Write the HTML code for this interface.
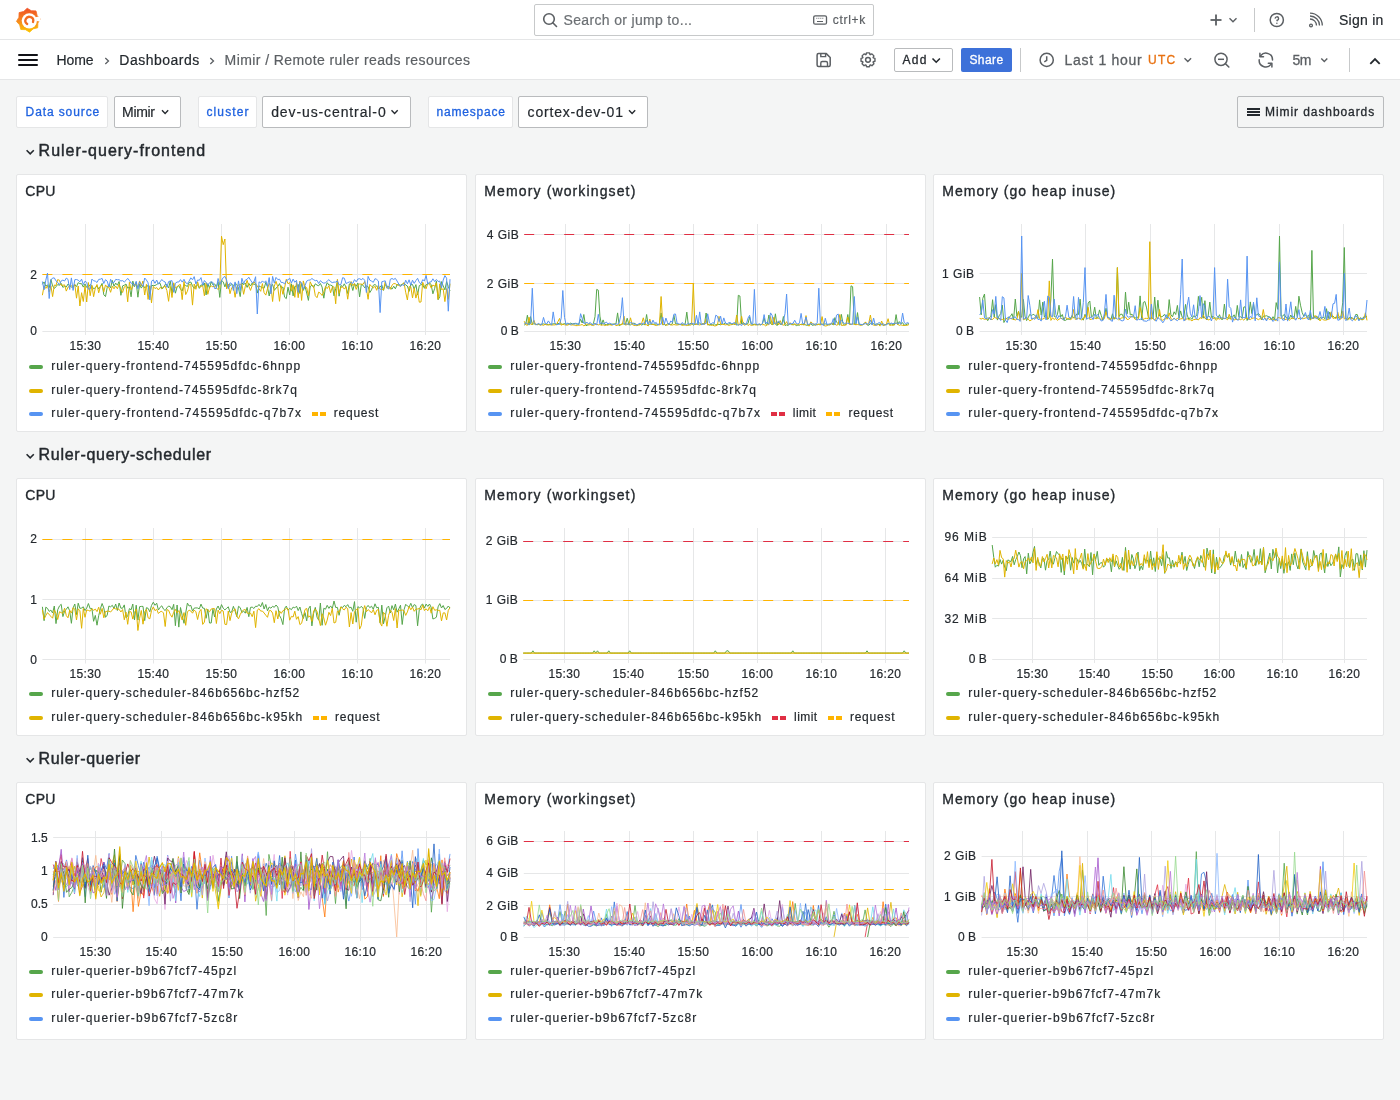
<!DOCTYPE html><html><head><meta charset="utf-8"><style>
html,body{margin:0;padding:0;width:1400px;height:1100px;overflow:hidden;background:#f4f5f5;font-family:"Liberation Sans",sans-serif}
.t{position:absolute;white-space:pre;line-height:1}
svg{position:absolute;left:0;top:0}
</style></head><body>
<div style="position:absolute;left:0px;top:0px;width:1400px;height:40px;background:#fff;border-bottom:1px solid #e5e6e7;box-sizing:border-box"></div>
<div style="position:absolute;left:0px;top:40px;width:1400px;height:40px;background:#fff;border-bottom:1px solid #e5e6e7;box-sizing:border-box"></div>
<div style="position:absolute;left:534px;top:4px;width:340px;height:32px;border:1px solid #c7c9ca;border-radius:2px;box-sizing:border-box;background:#fff"></div>
<div style="position:absolute;left:1254px;top:8px;width:1px;height:24px;background:#c7c9ca"></div>
<div style="position:absolute;left:18px;top:54px;width:20px;height:2px;background:#111217;border-radius:1px"></div>
<div style="position:absolute;left:18px;top:59px;width:20px;height:2px;background:#111217;border-radius:1px"></div>
<div style="position:absolute;left:18px;top:64px;width:20px;height:2px;background:#111217;border-radius:1px"></div>
<div style="position:absolute;left:894px;top:48px;width:59px;height:24px;border:1px solid #b9bbbd;border-radius:2px;box-sizing:border-box;background:#fff"></div>
<div style="position:absolute;left:961px;top:48px;width:51px;height:24px;background:#3d71d9;border-radius:2px"></div>
<div style="position:absolute;left:1020px;top:48px;width:1px;height:24px;background:#c7c9ca"></div>
<div style="position:absolute;left:1349px;top:48px;width:1px;height:24px;background:#c7c9ca"></div>
<div style="position:absolute;left:16px;top:96px;width:92px;height:32px;background:#fff;border:1px solid #e5e6e7;border-radius:2px;box-sizing:border-box"></div>
<div style="position:absolute;left:113.6px;top:96px;width:67.4px;height:32px;background:#fff;border:1px solid #b9bbbd;border-radius:2px;box-sizing:border-box"></div>
<div style="position:absolute;left:197.6px;top:96px;width:59.900000000000006px;height:32px;background:#fff;border:1px solid #e5e6e7;border-radius:2px;box-sizing:border-box"></div>
<div style="position:absolute;left:262px;top:96px;width:148.5px;height:32px;background:#fff;border:1px solid #b9bbbd;border-radius:2px;box-sizing:border-box"></div>
<div style="position:absolute;left:427.6px;top:96px;width:85.89999999999998px;height:32px;background:#fff;border:1px solid #e5e6e7;border-radius:2px;box-sizing:border-box"></div>
<div style="position:absolute;left:518.4px;top:96px;width:129.60000000000002px;height:32px;background:#fff;border:1px solid #b9bbbd;border-radius:2px;box-sizing:border-box"></div>
<div style="position:absolute;left:1236.5px;top:96px;width:147px;height:32px;border:1px solid #b9bbbd;border-radius:2px;box-sizing:border-box"></div>
<div style="position:absolute;left:1246.5px;top:108.25px;width:13px;height:1.5px;background:#24292e"></div>
<div style="position:absolute;left:1246.5px;top:111.25px;width:13px;height:1.5px;background:#24292e"></div>
<div style="position:absolute;left:1246.5px;top:114.25px;width:13px;height:1.5px;background:#24292e"></div>
<div style="position:absolute;left:16px;top:174px;width:451px;height:258px;background:#fff;border:1px solid #e5e6e7;border-radius:2px;box-sizing:border-box"></div>
<div style="position:absolute;left:29px;top:365px;width:14px;height:4px;background:#56A64B;border-radius:2px"></div>
<div style="position:absolute;left:29px;top:388.5px;width:14px;height:4px;background:#E0B400;border-radius:2px"></div>
<div style="position:absolute;left:29px;top:412px;width:14px;height:4px;background:#5794F2;border-radius:2px"></div>
<div style="position:absolute;left:311.5px;top:412px;width:6px;height:4px;background:#FFB400"></div>
<div style="position:absolute;left:319.5px;top:412px;width:6px;height:4px;background:#FFB400"></div>
<div style="position:absolute;left:475px;top:174px;width:451px;height:258px;background:#fff;border:1px solid #e5e6e7;border-radius:2px;box-sizing:border-box"></div>
<div style="position:absolute;left:488px;top:365px;width:14px;height:4px;background:#56A64B;border-radius:2px"></div>
<div style="position:absolute;left:488px;top:388.5px;width:14px;height:4px;background:#E0B400;border-radius:2px"></div>
<div style="position:absolute;left:488px;top:412px;width:14px;height:4px;background:#5794F2;border-radius:2px"></div>
<div style="position:absolute;left:770.5px;top:412px;width:6px;height:4px;background:#E02F44"></div>
<div style="position:absolute;left:778.5px;top:412px;width:6px;height:4px;background:#E02F44"></div>
<div style="position:absolute;left:826.3px;top:412px;width:6px;height:4px;background:#FFB400"></div>
<div style="position:absolute;left:834.3px;top:412px;width:6px;height:4px;background:#FFB400"></div>
<div style="position:absolute;left:933px;top:174px;width:451px;height:258px;background:#fff;border:1px solid #e5e6e7;border-radius:2px;box-sizing:border-box"></div>
<div style="position:absolute;left:946px;top:365px;width:14px;height:4px;background:#56A64B;border-radius:2px"></div>
<div style="position:absolute;left:946px;top:388.5px;width:14px;height:4px;background:#E0B400;border-radius:2px"></div>
<div style="position:absolute;left:946px;top:412px;width:14px;height:4px;background:#5794F2;border-radius:2px"></div>
<div style="position:absolute;left:16px;top:478px;width:451px;height:258px;background:#fff;border:1px solid #e5e6e7;border-radius:2px;box-sizing:border-box"></div>
<div style="position:absolute;left:29px;top:692.2px;width:14px;height:4px;background:#56A64B;border-radius:2px"></div>
<div style="position:absolute;left:29px;top:715.6px;width:14px;height:4px;background:#E0B400;border-radius:2px"></div>
<div style="position:absolute;left:312.8px;top:715.6px;width:6px;height:4px;background:#FFB400"></div>
<div style="position:absolute;left:320.8px;top:715.6px;width:6px;height:4px;background:#FFB400"></div>
<div style="position:absolute;left:475px;top:478px;width:451px;height:258px;background:#fff;border:1px solid #e5e6e7;border-radius:2px;box-sizing:border-box"></div>
<div style="position:absolute;left:488px;top:692.2px;width:14px;height:4px;background:#56A64B;border-radius:2px"></div>
<div style="position:absolute;left:488px;top:715.6px;width:14px;height:4px;background:#E0B400;border-radius:2px"></div>
<div style="position:absolute;left:771.8px;top:715.6px;width:6px;height:4px;background:#E02F44"></div>
<div style="position:absolute;left:779.8px;top:715.6px;width:6px;height:4px;background:#E02F44"></div>
<div style="position:absolute;left:827.6px;top:715.6px;width:6px;height:4px;background:#FFB400"></div>
<div style="position:absolute;left:835.6px;top:715.6px;width:6px;height:4px;background:#FFB400"></div>
<div style="position:absolute;left:933px;top:478px;width:451px;height:258px;background:#fff;border:1px solid #e5e6e7;border-radius:2px;box-sizing:border-box"></div>
<div style="position:absolute;left:946px;top:692.2px;width:14px;height:4px;background:#56A64B;border-radius:2px"></div>
<div style="position:absolute;left:946px;top:715.6px;width:14px;height:4px;background:#E0B400;border-radius:2px"></div>
<div style="position:absolute;left:16px;top:782px;width:451px;height:258px;background:#fff;border:1px solid #e5e6e7;border-radius:2px;box-sizing:border-box"></div>
<div style="position:absolute;left:29px;top:969.6px;width:14px;height:4px;background:#56A64B;border-radius:2px"></div>
<div style="position:absolute;left:29px;top:993.3px;width:14px;height:4px;background:#E0B400;border-radius:2px"></div>
<div style="position:absolute;left:29px;top:1016.7px;width:14px;height:4px;background:#5794F2;border-radius:2px"></div>
<div style="position:absolute;left:475px;top:782px;width:451px;height:258px;background:#fff;border:1px solid #e5e6e7;border-radius:2px;box-sizing:border-box"></div>
<div style="position:absolute;left:488px;top:969.6px;width:14px;height:4px;background:#56A64B;border-radius:2px"></div>
<div style="position:absolute;left:488px;top:993.3px;width:14px;height:4px;background:#E0B400;border-radius:2px"></div>
<div style="position:absolute;left:488px;top:1016.7px;width:14px;height:4px;background:#5794F2;border-radius:2px"></div>
<div style="position:absolute;left:933px;top:782px;width:451px;height:258px;background:#fff;border:1px solid #e5e6e7;border-radius:2px;box-sizing:border-box"></div>
<div style="position:absolute;left:946px;top:969.6px;width:14px;height:4px;background:#56A64B;border-radius:2px"></div>
<div style="position:absolute;left:946px;top:993.3px;width:14px;height:4px;background:#E0B400;border-radius:2px"></div>
<div style="position:absolute;left:946px;top:1016.7px;width:14px;height:4px;background:#5794F2;border-radius:2px"></div>
<svg width="1400" height="1100" viewBox="0 0 1400 1100"><defs><linearGradient id="lg" x1="0" y1="1" x2="0" y2="0"><stop offset="0" stop-color="#fcc400"/><stop offset="0.5" stop-color="#f6851f"/><stop offset="1" stop-color="#ef4f25"/></linearGradient></defs>
<polygon points="27.20,8.26 31.26,10.72 36.00,10.91 37.12,15.52 40.34,19.00 37.88,23.06 37.69,27.80 33.08,28.92 29.60,32.14 25.54,29.68 20.80,29.49 19.68,24.88 16.46,21.40 18.92,17.34 19.11,12.60 23.72,11.48" fill="url(#lg)" stroke="url(#lg)" stroke-width="0.8" stroke-linejoin="round"/>
<circle cx="29.3" cy="20.8" r="7.6" fill="#fff"/>
<path d="M 35.5 17.2 L 40.5 16 L 40.5 21.5 L 36.5 21 Z" fill="#fff"/>
<path d="M 36.3 18.6 A 7.6 7.6 0 0 0 21.8 19.8" fill="none" stroke="#f05a28" stroke-width="0"/>
<path d="M 27.2 24.0 A 3.9 3.9 0 1 1 33.0 22.0" fill="none" stroke="#f26b21" stroke-width="2.3" stroke-linecap="round"/>
<circle cx="549" cy="19" r="5.3" fill="none" stroke="#5b5f63" stroke-width="1.6"/><line x1="552.8" y1="22.8" x2="556.5" y2="26.5" stroke="#5b5f63" stroke-width="1.6" stroke-linecap="round"/>
<rect x="813.7" y="15.8" width="12.8" height="8.4" rx="1.5" fill="none" stroke="#5b5f63" stroke-width="1.3"/><line x1="816.3" y1="18.3" x2="824" y2="18.3" stroke="#5b5f63" stroke-width="0.9" stroke-dasharray="1,1"/><line x1="817" y1="21.5" x2="823" y2="21.5" stroke="#5b5f63" stroke-width="1"/>
<line x1="1216" y1="14.5" x2="1216" y2="25.5" stroke="#5b5f63" stroke-width="1.8"/><line x1="1210.5" y1="20" x2="1221.5" y2="20" stroke="#5b5f63" stroke-width="1.8"/>
<polyline points="1229.5,18.3 1233,21.7 1236.5,18.3" fill="none" stroke="#5b5f63" stroke-width="1.4"/>
<circle cx="1276.8" cy="20" r="6.6" fill="none" stroke="#5b5f63" stroke-width="1.5"/>
<path d="M 1275.2 18.6 A 1.7 1.7 0 1 1 1277.2 20.2 L 1276.9 21.3" fill="none" stroke="#5b5f63" stroke-width="1.4"/><circle cx="1276.9" cy="23.2" r="0.75" fill="#5b5f63"/>
<circle cx="1311" cy="25.5" r="1.4" fill="none" stroke="#5b5f63" stroke-width="1.3"/><path d="M 1310 19 A 6.5 6.5 0 0 1 1316.5 25.5 M 1310 16 A 9.5 9.5 0 0 1 1319.5 25.5 M 1310 13.2 A 12.3 12.3 0 0 1 1322.3 25.5" fill="none" stroke="#5b5f63" stroke-width="1.3"/>
<polyline points="105.3,58 108.5,61 105.3,64" fill="none" stroke="#5b5f63" stroke-width="1.3"/>
<polyline points="210.3,58 213.5,61 210.3,64" fill="none" stroke="#5b5f63" stroke-width="1.3"/>
<path d="M 818.6 53.6 H 826.3 L 830.2 57.5 V 65 A 1.5 1.5 0 0 1 828.7 66.5 H 818.6 A 1.5 1.5 0 0 1 817.1 65 V 55.1 A 1.5 1.5 0 0 1 818.6 53.6 Z" fill="none" stroke="#5b5f63" stroke-width="1.5" stroke-linejoin="round"/>
<path d="M 820.8 53.8 V 56.6 H 825.6 V 53.8 M 820.8 66.3 V 63 A 1.5 1.5 0 0 1 822.3 61.5 H 826 A 1.5 1.5 0 0 1 827.5 63 V 66.3" fill="none" stroke="#5b5f63" stroke-width="1.4"/>
<polygon points="873.24,57.83 874.96,58.39 874.96,61.21 873.24,61.77 873.10,62.11 873.92,63.72 871.92,65.72 870.31,64.90 869.97,65.04 869.41,66.76 866.59,66.76 866.03,65.04 865.69,64.90 864.08,65.72 862.08,63.72 862.90,62.11 862.76,61.77 861.04,61.21 861.04,58.39 862.76,57.83 862.90,57.49 862.08,55.88 864.08,53.88 865.69,54.70 866.03,54.56 866.59,52.84 869.41,52.84 869.97,54.56 870.31,54.70 871.92,53.88 873.92,55.88 873.10,57.49" fill="none" stroke="#5b5f63" stroke-width="1.4" stroke-linejoin="round"/><circle cx="868.0" cy="59.8" r="2.4" fill="none" stroke="#5b5f63" stroke-width="1.5"/>
<polyline points="932.5,58.5 936.2,62.2 939.9,58.5" fill="none" stroke="#24292e" stroke-width="1.6"/>
<circle cx="1046.7" cy="59.9" r="6.6" fill="none" stroke="#5b5f63" stroke-width="1.5"/><polyline points="1046.7,56.3 1046.7,60.3 1044.3,61.8" fill="none" stroke="#5b5f63" stroke-width="1.5"/>
<polyline points="1184.5,58.3 1187.8,61.6 1191.1,58.3" fill="none" stroke="#5b5f63" stroke-width="1.4"/>
<circle cx="1221" cy="59.3" r="6.1" fill="none" stroke="#5b5f63" stroke-width="1.5"/><line x1="1218" y1="59.3" x2="1224" y2="59.3" stroke="#5b5f63" stroke-width="1.5"/><line x1="1225.5" y1="63.8" x2="1228.8" y2="67" stroke="#5b5f63" stroke-width="1.6" stroke-linecap="round"/>
<path d="M 1272.5 60 A 6.6 6.6 0 0 0 1260.8 55.6 M 1259.2 59.8 A 6.6 6.6 0 0 0 1271 64.4" fill="none" stroke="#5b5f63" stroke-width="1.5" stroke-linecap="round"/><path d="M 1259.9 53.2 V 56.8 H 1263.5 M 1268.3 63.3 H 1271.9 V 66.9" fill="none" stroke="#5b5f63" stroke-width="1.5" stroke-linecap="round" stroke-linejoin="round"/>
<polyline points="1321.3,58.5 1324.3,61.6 1327.3,58.5" fill="none" stroke="#5b5f63" stroke-width="1.4"/>
<polyline points="1370.3,63.8 1375,59 1379.7,63.8" fill="none" stroke="#24292e" stroke-width="1.8"/>
<polyline points="162.0,110.3 165.1,113.4 168.2,110.3" fill="none" stroke="#24292e" stroke-width="1.4"/>
<polyline points="391.5,110.3 394.6,113.4 397.7,110.3" fill="none" stroke="#24292e" stroke-width="1.4"/>
<polyline points="629.0,110.3 632.1,113.4 635.2,110.3" fill="none" stroke="#24292e" stroke-width="1.4"/>
<polyline points="26.6,150.20000000000002 30.2,153.8 33.8,150.20000000000002" fill="none" stroke="#24292e" stroke-width="1.6"/>
<polyline points="26.6,454.2 30.2,457.8 33.8,454.2" fill="none" stroke="#24292e" stroke-width="1.6"/>
<polyline points="26.6,758.1999999999999 30.2,761.8 33.8,758.1999999999999" fill="none" stroke="#24292e" stroke-width="1.6"/>
<line x1="42.4" y1="331.5" x2="450" y2="331.5" stroke="#e6e7e8" stroke-width="1"/>
<line x1="42.4" y1="274.5" x2="450" y2="274.5" stroke="#e6e7e8" stroke-width="1"/>
<line x1="85.5" y1="224" x2="85.5" y2="335" stroke="#e6e7e8" stroke-width="1"/>
<line x1="153.5" y1="224" x2="153.5" y2="335" stroke="#e6e7e8" stroke-width="1"/>
<line x1="221.5" y1="224" x2="221.5" y2="335" stroke="#e6e7e8" stroke-width="1"/>
<line x1="289.5" y1="224" x2="289.5" y2="335" stroke="#e6e7e8" stroke-width="1"/>
<line x1="357.5" y1="224" x2="357.5" y2="335" stroke="#e6e7e8" stroke-width="1"/>
<line x1="425.5" y1="224" x2="425.5" y2="335" stroke="#e6e7e8" stroke-width="1"/>
<line x1="42.4" y1="274.5" x2="450" y2="274.5" stroke="#FFB400" stroke-width="1" stroke-dasharray="10,10"/>
<polyline points="42.4,284.3 44.1,281.9 45.8,286.2 47.5,284.9 49.2,287.8 50.9,279.5 52.6,285.9 54.3,288.5 56.0,286.7 57.7,284.5 59.5,285.3 61.2,283.4 62.9,287.4 64.6,286.2 66.3,287.0 68.0,284.0 69.7,285.5 71.4,287.1 73.1,286.9 74.8,284.8 76.5,286.5 78.2,282.7 79.9,283.6 81.6,283.7 83.3,287.1 85.0,284.0 86.7,287.4 88.4,286.8 90.2,284.6 91.9,286.1 93.6,288.8 95.3,287.8 97.0,285.7 98.7,289.0 100.4,286.4 102.1,283.4 103.8,294.8 105.5,296.6 107.2,287.5 108.9,284.7 110.6,288.0 112.3,280.4 114.0,286.3 115.7,283.1 117.4,285.2 119.1,281.5 120.9,295.3 122.6,285.9 124.3,285.2 126.0,284.0 127.7,288.2 129.4,286.9 131.1,296.8 132.8,281.1 134.5,286.7 136.2,282.4 137.9,297.2 139.6,284.0 141.3,288.1 143.0,285.3 144.7,287.8 146.4,286.4 148.1,285.6 149.8,294.4 151.5,285.4 153.3,285.6 155.0,285.5 156.7,284.5 158.4,283.3 160.1,283.3 161.8,288.8 163.5,287.7 165.2,284.4 166.9,284.7 168.6,288.0 170.3,281.2 172.0,293.2 173.7,284.7 175.4,293.2 177.1,286.9 178.8,285.7 180.5,289.1 182.2,291.0 184.0,284.4 185.7,285.5 187.4,286.5 189.1,282.5 190.8,282.0 192.5,285.9 194.2,288.5 195.9,285.6 197.6,284.7 199.3,288.4 201.0,284.8 202.7,285.8 204.4,283.0 206.1,294.9 207.8,283.7 209.5,288.2 211.2,281.7 212.9,284.9 214.6,283.9 216.4,286.6 218.1,281.8 219.8,297.4 221.5,280.3 223.2,281.8 224.9,286.9 226.6,281.7 228.3,287.3 230.0,285.5 231.7,284.2 233.4,285.7 235.1,283.4 236.8,284.4 238.5,288.1 240.2,296.6 241.9,282.7 243.6,284.8 245.3,283.0 247.1,287.4 248.8,283.3 250.5,286.0 252.2,282.9 253.9,284.7 255.6,283.6 257.3,293.1 259.0,285.9 260.7,286.8 262.4,287.7 264.1,288.2 265.8,282.4 267.5,286.8 269.2,296.0 270.9,286.5 272.6,284.4 274.3,290.4 276.0,288.1 277.8,286.6 279.5,283.6 281.2,288.1 282.9,287.0 284.6,297.2 286.3,298.6 288.0,287.2 289.7,294.9 291.4,283.8 293.1,295.9 294.8,286.4 296.5,286.2 298.2,284.4 299.9,293.5 301.6,283.5 303.3,290.4 305.0,286.3 306.7,293.0 308.4,300.4 310.2,286.7 311.9,285.2 313.6,287.5 315.3,283.8 317.0,285.1 318.7,285.8 320.4,283.5 322.1,287.1 323.8,298.2 325.5,287.5 327.2,282.7 328.9,285.0 330.6,285.1 332.3,285.8 334.0,295.8 335.7,288.6 337.4,281.4 339.1,296.2 340.9,285.4 342.6,286.8 344.3,283.8 346.0,287.2 347.7,293.5 349.4,283.9 351.1,283.8 352.8,290.5 354.5,283.7 356.2,286.3 357.9,283.0 359.6,296.9 361.3,284.4 363.0,285.2 364.7,287.8 366.4,285.9 368.1,286.6 369.8,292.6 371.5,289.9 373.3,285.3 375.0,284.5 376.7,286.0 378.4,289.0 380.1,287.0 381.8,285.0 383.5,290.4 385.2,284.6 386.9,286.1 388.6,286.6 390.3,287.5 392.0,289.2 393.7,286.2 395.4,288.8 397.1,284.6 398.8,284.8 400.5,285.2 402.2,284.3 404.0,283.0 405.7,285.1 407.4,286.0 409.1,291.4 410.8,284.6 412.5,284.5 414.2,289.1 415.9,284.6 417.6,295.0 419.3,285.6 421.0,284.7 422.7,284.6 424.4,288.3 426.1,284.6 427.8,284.6 429.5,282.8 431.2,284.8 432.9,293.8 434.7,288.3 436.4,281.2 438.1,299.7 439.8,296.8 441.5,281.6 443.2,285.9 444.9,289.9 446.6,281.5 448.3,286.6 450.0,290.9" fill="none" stroke="#56A64B" stroke-width="1" stroke-opacity="1" stroke-linejoin="round"/>
<polyline points="42.4,295.2 44.1,285.7 45.8,288.4 47.5,285.9 49.2,291.9 50.9,285.7 52.6,296.6 54.3,285.0 56.0,285.5 57.7,279.6 59.5,280.3 61.2,285.4 62.9,285.2 64.6,284.9 66.3,291.1 68.0,287.1 69.7,286.2 71.4,285.6 73.1,287.5 74.8,284.1 76.5,298.2 78.2,286.0 79.9,306.0 81.6,292.7 83.3,301.5 85.0,286.0 86.7,302.0 88.4,282.5 90.2,295.7 91.9,285.2 93.6,296.7 95.3,288.2 97.0,284.5 98.7,292.8 100.4,286.5 102.1,285.2 103.8,291.8 105.5,284.9 107.2,287.1 108.9,287.3 110.6,292.3 112.3,286.2 114.0,288.8 115.7,286.0 117.4,288.8 119.1,284.1 120.9,289.4 122.6,292.5 124.3,286.9 126.0,285.6 127.7,301.8 129.4,282.3 131.1,289.9 132.8,286.5 134.5,284.2 136.2,284.4 137.9,287.1 139.6,280.9 141.3,286.0 143.0,281.0 144.7,295.0 146.4,284.3 148.1,299.4 149.8,285.7 151.5,302.9 153.3,286.5 155.0,288.6 156.7,287.6 158.4,290.0 160.1,287.4 161.8,288.6 163.5,286.7 165.2,286.1 166.9,290.6 168.6,301.3 170.3,286.5 172.0,297.5 173.7,282.8 175.4,288.1 177.1,286.8 178.8,285.0 180.5,284.6 182.2,299.6 184.0,281.4 185.7,294.6 187.4,291.2 189.1,284.8 190.8,284.2 192.5,305.1 194.2,284.0 195.9,289.3 197.6,281.8 199.3,287.6 201.0,286.5 202.7,285.6 204.4,295.8 206.1,282.7 207.8,294.3 209.5,287.5 211.2,285.9 212.9,286.8 214.6,286.0 216.4,287.8 218.1,289.6 219.8,287.6 221.5,236.2 223.2,244.7 224.9,239.0 226.6,288.9 228.3,284.0 230.0,293.7 231.7,287.7 233.4,286.3 235.1,297.3 236.8,286.7 238.5,285.2 240.2,284.5 241.9,283.9 243.6,294.3 245.3,286.4 247.1,280.3 248.8,286.1 250.5,290.4 252.2,285.5 253.9,281.7 255.6,283.9 257.3,286.0 259.0,288.7 260.7,291.3 262.4,283.6 264.1,292.7 265.8,295.1 267.5,288.8 269.2,283.4 270.9,285.6 272.6,301.5 274.3,286.2 276.0,281.3 277.8,287.0 279.5,301.3 281.2,285.7 282.9,294.3 284.6,287.8 286.3,279.3 288.0,283.8 289.7,282.5 291.4,291.2 293.1,284.8 294.8,297.3 296.5,282.5 298.2,297.7 299.9,281.0 301.6,300.4 303.3,280.9 305.0,287.1 306.7,287.7 308.4,295.9 310.2,281.8 311.9,285.3 313.6,285.9 315.3,295.7 317.0,297.7 318.7,292.1 320.4,293.3 322.1,295.5 323.8,291.7 325.5,286.7 327.2,288.6 328.9,285.7 330.6,292.8 332.3,287.2 334.0,286.8 335.7,303.8 337.4,279.3 339.1,293.4 340.9,287.3 342.6,286.9 344.3,289.1 346.0,286.7 347.7,299.2 349.4,287.7 351.1,281.5 352.8,285.6 354.5,283.6 356.2,289.4 357.9,285.1 359.6,284.0 361.3,284.1 363.0,284.4 364.7,281.5 366.4,288.3 368.1,299.3 369.8,284.4 371.5,286.4 373.3,288.0 375.0,286.2 376.7,290.3 378.4,285.1 380.1,289.3 381.8,289.4 383.5,289.9 385.2,281.9 386.9,288.3 388.6,286.7 390.3,289.3 392.0,285.2 393.7,283.6 395.4,283.7 397.1,284.9 398.8,285.4 400.5,286.3 402.2,284.9 404.0,282.6 405.7,292.3 407.4,300.0 409.1,286.7 410.8,286.9 412.5,297.9 414.2,288.0 415.9,298.1 417.6,291.6 419.3,302.2 421.0,302.0 422.7,282.3 424.4,286.2 426.1,288.8 427.8,283.2 429.5,283.8 431.2,288.1 432.9,285.0 434.7,286.2 436.4,282.9 438.1,299.3 439.8,283.9 441.5,289.5 443.2,288.9 444.9,301.6 446.6,288.6 448.3,299.4 450.0,283.7" fill="none" stroke="#E0B400" stroke-width="1" stroke-opacity="1" stroke-linejoin="round"/>
<polyline points="42.4,281.5 44.1,289.7 45.8,280.2 47.5,273.1 49.2,298.5 50.9,280.1 52.6,278.0 54.3,277.9 56.0,280.9 57.7,282.4 59.5,284.7 61.2,280.9 62.9,280.1 64.6,281.0 66.3,278.1 68.0,279.4 69.7,289.5 71.4,277.9 73.1,290.4 74.8,279.7 76.5,279.5 78.2,280.2 79.9,281.8 81.6,279.2 83.3,284.6 85.0,281.2 86.7,282.4 88.4,289.1 90.2,289.1 91.9,279.1 93.6,280.8 95.3,281.1 97.0,282.5 98.7,279.4 100.4,279.2 102.1,278.4 103.8,283.5 105.5,279.7 107.2,281.1 108.9,287.0 110.6,279.3 112.3,283.0 114.0,282.3 115.7,279.4 117.4,279.7 119.1,279.7 120.9,281.0 122.6,280.6 124.3,282.0 126.0,280.4 127.7,278.4 129.4,280.5 131.1,283.2 132.8,283.3 134.5,286.2 136.2,281.3 137.9,288.8 139.6,281.8 141.3,284.2 143.0,286.5 144.7,278.0 146.4,280.0 148.1,282.8 149.8,299.9 151.5,281.2 153.3,279.9 155.0,283.3 156.7,280.0 158.4,284.2 160.1,281.8 161.8,279.5 163.5,281.3 165.2,282.0 166.9,287.3 168.6,281.6 170.3,281.0 172.0,280.7 173.7,292.3 175.4,283.2 177.1,282.0 178.8,282.0 180.5,279.6 182.2,282.1 184.0,279.3 185.7,282.8 187.4,283.7 189.1,281.1 190.8,277.8 192.5,279.8 194.2,276.6 195.9,284.1 197.6,280.0 199.3,280.3 201.0,277.6 202.7,285.2 204.4,280.5 206.1,282.5 207.8,285.4 209.5,282.7 211.2,281.9 212.9,282.4 214.6,288.5 216.4,288.5 218.1,278.5 219.8,284.8 221.5,280.5 223.2,277.6 224.9,276.4 226.6,280.0 228.3,288.7 230.0,282.8 231.7,283.6 233.4,290.5 235.1,281.9 236.8,293.7 238.5,280.9 240.2,290.6 241.9,278.3 243.6,283.6 245.3,280.1 247.1,279.3 248.8,277.2 250.5,280.1 252.2,282.6 253.9,282.1 255.6,276.7 257.3,314.0 259.0,281.8 260.7,283.1 262.4,280.9 264.1,282.6 265.8,280.8 267.5,286.3 269.2,277.6 270.9,293.9 272.6,276.4 274.3,283.1 276.0,277.4 277.8,279.6 279.5,279.2 281.2,282.5 282.9,282.5 284.6,283.9 286.3,280.5 288.0,279.8 289.7,278.2 291.4,283.1 293.1,279.1 294.8,282.3 296.5,280.3 298.2,292.4 299.9,281.8 301.6,282.7 303.3,289.3 305.0,285.5 306.7,281.1 308.4,280.2 310.2,280.0 311.9,278.5 313.6,279.7 315.3,280.7 317.0,280.3 318.7,283.5 320.4,280.7 322.1,282.3 323.8,283.2 325.5,282.7 327.2,281.2 328.9,279.6 330.6,281.7 332.3,282.6 334.0,282.1 335.7,282.1 337.4,280.8 339.1,284.9 340.9,284.4 342.6,277.7 344.3,278.2 346.0,283.5 347.7,282.7 349.4,281.9 351.1,282.7 352.8,283.4 354.5,279.6 356.2,281.8 357.9,279.0 359.6,278.7 361.3,279.7 363.0,278.4 364.7,280.3 366.4,292.5 368.1,276.4 369.8,280.2 371.5,281.1 373.3,282.3 375.0,278.7 376.7,279.4 378.4,281.0 380.1,312.6 381.8,281.8 383.5,281.3 385.2,280.8 386.9,287.6 388.6,289.0 390.3,279.3 392.0,278.5 393.7,279.4 395.4,278.4 397.1,281.1 398.8,284.0 400.5,286.4 402.2,284.7 404.0,285.4 405.7,280.2 407.4,283.8 409.1,279.8 410.8,285.2 412.5,280.2 414.2,283.4 415.9,280.6 417.6,278.3 419.3,282.5 421.0,283.8 422.7,279.7 424.4,280.9 426.1,275.4 427.8,284.2 429.5,282.0 431.2,281.9 432.9,278.8 434.7,281.6 436.4,279.5 438.1,281.5 439.8,281.1 441.5,287.9 443.2,280.1 444.9,275.6 446.6,278.2 448.3,311.2 450.0,279.2" fill="none" stroke="#5794F2" stroke-width="1" stroke-opacity="1" stroke-linejoin="round"/>
<line x1="524.2" y1="331.5" x2="909" y2="331.5" stroke="#e6e7e8" stroke-width="1"/>
<line x1="524.2" y1="283.5" x2="909" y2="283.5" stroke="#e6e7e8" stroke-width="1"/>
<line x1="524.2" y1="234.5" x2="909" y2="234.5" stroke="#e6e7e8" stroke-width="1"/>
<line x1="565.5" y1="224" x2="565.5" y2="335" stroke="#e6e7e8" stroke-width="1"/>
<line x1="629.5" y1="224" x2="629.5" y2="335" stroke="#e6e7e8" stroke-width="1"/>
<line x1="693.5" y1="224" x2="693.5" y2="335" stroke="#e6e7e8" stroke-width="1"/>
<line x1="757.5" y1="224" x2="757.5" y2="335" stroke="#e6e7e8" stroke-width="1"/>
<line x1="821.5" y1="224" x2="821.5" y2="335" stroke="#e6e7e8" stroke-width="1"/>
<line x1="886.5" y1="224" x2="886.5" y2="335" stroke="#e6e7e8" stroke-width="1"/>
<line x1="524.2" y1="234.5" x2="909" y2="234.5" stroke="#E02F44" stroke-width="1" stroke-dasharray="10,10"/>
<line x1="524.2" y1="283.5" x2="909" y2="283.5" stroke="#FFB400" stroke-width="1" stroke-dasharray="10,10"/>
<polyline points="524.2,325.1 525.8,324.1 527.4,315.2 529.0,325.1 530.6,316.6 532.3,324.5 533.9,323.7 535.5,324.2 537.1,324.8 538.7,324.2 540.3,324.4 541.9,324.1 543.5,323.9 545.1,324.3 546.7,324.3 548.4,324.8 550.0,324.2 551.6,324.2 553.2,323.8 554.8,323.7 556.4,324.7 558.0,323.2 559.6,324.2 561.2,323.9 562.8,324.3 564.5,323.5 566.1,324.2 567.7,324.0 569.3,323.9 570.9,323.0 572.5,324.3 574.1,323.4 575.7,323.9 577.3,324.2 578.9,323.9 580.6,319.2 582.2,323.0 583.8,314.5 585.4,324.8 587.0,325.8 588.6,323.7 590.2,324.0 591.8,324.9 593.4,323.6 595.0,316.7 596.7,289.4 598.3,290.2 599.9,316.1 601.5,324.8 603.1,319.9 604.7,324.5 606.3,324.7 607.9,324.5 609.5,324.7 611.1,324.5 612.8,324.0 614.4,324.0 616.0,323.8 617.6,312.9 619.2,325.8 620.8,324.7 622.4,323.4 624.0,324.2 625.6,324.2 627.2,318.2 628.9,324.7 630.5,324.9 632.1,323.6 633.7,323.2 635.3,323.6 636.9,325.4 638.5,324.8 640.1,324.0 641.7,325.1 643.3,324.2 645.0,324.8 646.6,314.5 648.2,325.0 649.8,324.1 651.4,324.1 653.0,324.1 654.6,324.4 656.2,323.9 657.8,325.0 659.4,323.6 661.1,312.9 662.7,324.9 664.3,324.4 665.9,325.6 667.5,323.6 669.1,323.8 670.7,324.7 672.3,323.9 673.9,315.3 675.5,323.8 677.2,323.8 678.8,324.7 680.4,324.4 682.0,324.1 683.6,324.7 685.2,323.9 686.8,312.1 688.4,325.3 690.0,323.8 691.6,323.0 693.3,325.2 694.9,324.1 696.5,324.2 698.1,322.2 699.7,323.2 701.3,324.6 702.9,323.7 704.5,324.1 706.1,313.0 707.7,324.0 709.4,325.2 711.0,324.2 712.6,324.8 714.2,323.7 715.8,325.0 717.4,324.4 719.0,324.3 720.6,324.8 722.2,323.6 723.8,324.2 725.5,322.7 727.1,324.5 728.7,324.1 730.3,323.5 731.9,324.4 733.5,324.0 735.1,323.8 736.7,325.1 738.3,295.3 739.9,296.0 741.6,324.2 743.2,322.6 744.8,323.8 746.4,324.3 748.0,323.6 749.6,316.9 751.2,323.8 752.8,324.8 754.4,324.2 756.0,324.4 757.7,324.8 759.3,324.6 760.9,325.0 762.5,323.3 764.1,318.0 765.7,324.1 767.3,324.2 768.9,315.0 770.5,323.5 772.1,324.7 773.8,324.1 775.4,313.8 777.0,325.7 778.6,321.8 780.2,324.3 781.8,324.5 783.4,316.5 785.0,325.5 786.6,324.9 788.2,325.5 789.9,323.5 791.5,324.6 793.1,324.1 794.7,324.3 796.3,325.6 797.9,325.0 799.5,325.2 801.1,324.1 802.7,324.5 804.3,324.3 806.0,325.1 807.6,325.3 809.2,324.6 810.8,323.9 812.4,325.4 814.0,324.9 815.6,324.0 817.2,324.8 818.8,324.1 820.4,324.2 822.1,324.1 823.7,324.2 825.3,323.9 826.9,324.3 828.5,324.8 830.1,324.7 831.7,323.7 833.3,324.9 834.9,317.6 836.5,322.2 838.2,323.6 839.8,325.2 841.4,314.4 843.0,323.7 844.6,325.2 846.2,323.6 847.8,314.5 849.4,324.1 851.0,285.8 852.6,286.7 854.3,324.1 855.9,324.4 857.5,312.6 859.1,324.2 860.7,324.7 862.3,325.0 863.9,323.8 865.5,322.2 867.1,324.9 868.7,325.3 870.4,323.7 872.0,323.1 873.6,323.7 875.2,324.6 876.8,323.8 878.4,324.4 880.0,324.4 881.6,324.1 883.2,325.4 884.8,324.7 886.5,324.3 888.1,323.5 889.7,324.6 891.3,323.8 892.9,324.6 894.5,325.0 896.1,314.6 897.7,324.6 899.3,321.6 900.9,323.6 902.6,322.7 904.2,325.2 905.8,324.9 907.4,324.0 909.0,323.7" fill="none" stroke="#56A64B" stroke-width="1" stroke-opacity="1" stroke-linejoin="round"/>
<polyline points="524.2,321.2 525.8,324.7 527.4,325.3 529.0,317.2 530.6,324.2 532.3,324.5 533.9,320.3 535.5,324.8 537.1,324.4 538.7,324.2 540.3,325.3 541.9,324.7 543.5,325.3 545.1,324.3 546.7,324.9 548.4,324.8 550.0,324.8 551.6,325.0 553.2,324.9 554.8,324.9 556.4,324.5 558.0,321.5 559.6,318.4 561.2,325.2 562.8,324.4 564.5,324.7 566.1,325.1 567.7,325.1 569.3,324.3 570.9,325.0 572.5,324.9 574.1,325.0 575.7,325.6 577.3,325.6 578.9,325.2 580.6,325.0 582.2,324.5 583.8,325.8 585.4,325.2 587.0,323.8 588.6,325.1 590.2,324.6 591.8,325.1 593.4,325.6 595.0,324.5 596.7,324.2 598.3,324.9 599.9,324.5 601.5,325.4 603.1,324.7 604.7,325.6 606.3,325.0 607.9,325.3 609.5,324.2 611.1,325.2 612.8,324.9 614.4,324.1 616.0,325.5 617.6,325.4 619.2,324.5 620.8,324.7 622.4,324.5 624.0,316.2 625.6,325.2 627.2,324.4 628.9,324.7 630.5,317.8 632.1,324.4 633.7,325.3 635.3,325.5 636.9,325.6 638.5,324.9 640.1,325.0 641.7,323.2 643.3,317.8 645.0,324.7 646.6,324.8 648.2,326.0 649.8,319.1 651.4,324.5 653.0,324.4 654.6,325.0 656.2,325.6 657.8,324.7 659.4,325.1 661.1,296.5 662.7,324.4 664.3,324.4 665.9,325.0 667.5,325.0 669.1,324.4 670.7,324.8 672.3,325.1 673.9,324.5 675.5,324.9 677.2,325.0 678.8,324.6 680.4,324.4 682.0,325.3 683.6,325.1 685.2,325.0 686.8,325.6 688.4,324.9 690.0,325.2 691.6,324.6 693.3,283.4 694.9,324.5 696.5,324.5 698.1,324.6 699.7,324.9 701.3,324.4 702.9,323.8 704.5,324.3 706.1,319.1 707.7,325.1 709.4,324.4 711.0,325.4 712.6,325.0 714.2,325.9 715.8,325.8 717.4,325.2 719.0,316.4 720.6,324.4 722.2,324.3 723.8,324.5 725.5,324.9 727.1,324.5 728.7,325.5 730.3,324.9 731.9,324.6 733.5,323.8 735.1,324.9 736.7,315.0 738.3,325.1 739.9,324.5 741.6,316.3 743.2,324.3 744.8,325.3 746.4,323.9 748.0,325.5 749.6,324.4 751.2,325.4 752.8,325.1 754.4,324.7 756.0,325.1 757.7,324.6 759.3,324.6 760.9,324.4 762.5,324.7 764.1,324.6 765.7,325.9 767.3,324.8 768.9,324.6 770.5,316.6 772.1,324.6 773.8,317.3 775.4,324.6 777.0,321.8 778.6,325.0 780.2,320.6 781.8,324.5 783.4,325.1 785.0,324.4 786.6,321.7 788.2,325.1 789.9,322.7 791.5,324.2 793.1,325.1 794.7,324.0 796.3,324.3 797.9,325.0 799.5,324.1 801.1,324.7 802.7,324.6 804.3,325.1 806.0,315.6 807.6,325.1 809.2,326.1 810.8,321.9 812.4,323.2 814.0,324.8 815.6,325.3 817.2,324.5 818.8,324.4 820.4,325.1 822.1,316.6 823.7,325.4 825.3,326.0 826.9,325.7 828.5,324.7 830.1,324.8 831.7,322.8 833.3,324.5 834.9,324.2 836.5,325.2 838.2,324.5 839.8,314.5 841.4,325.4 843.0,325.3 844.6,325.0 846.2,325.1 847.8,317.0 849.4,324.5 851.0,324.5 852.6,323.7 854.3,324.4 855.9,324.7 857.5,324.5 859.1,324.8 860.7,325.5 862.3,324.5 863.9,324.5 865.5,321.9 867.1,324.8 868.7,323.7 870.4,315.0 872.0,324.4 873.6,325.1 875.2,325.4 876.8,325.2 878.4,324.4 880.0,326.1 881.6,321.0 883.2,325.3 884.8,325.0 886.5,324.1 888.1,318.7 889.7,325.4 891.3,325.1 892.9,325.4 894.5,324.4 896.1,322.9 897.7,324.2 899.3,325.4 900.9,324.8 902.6,325.4 904.2,325.5 905.8,325.3 907.4,325.3 909.0,324.5" fill="none" stroke="#E0B400" stroke-width="1" stroke-opacity="1" stroke-linejoin="round"/>
<polyline points="524.2,323.9 525.8,322.8 527.4,323.9 529.0,324.2 530.6,323.3 532.3,288.2 533.9,322.7 535.5,324.3 537.1,324.4 538.7,323.3 540.3,325.0 541.9,324.3 543.5,317.4 545.1,323.1 546.7,324.0 548.4,320.9 550.0,323.4 551.6,325.1 553.2,311.9 554.8,322.5 556.4,324.6 558.0,324.5 559.6,324.0 561.2,318.3 562.8,290.5 564.5,317.4 566.1,324.8 567.7,322.9 569.3,324.2 570.9,324.4 572.5,323.5 574.1,324.3 575.7,323.2 577.3,323.7 578.9,324.8 580.6,313.7 582.2,318.7 583.8,323.3 585.4,323.0 587.0,322.4 588.6,323.8 590.2,322.4 591.8,324.1 593.4,324.9 595.0,323.0 596.7,325.1 598.3,314.3 599.9,324.0 601.5,322.6 603.1,323.9 604.7,323.4 606.3,322.0 607.9,323.9 609.5,323.2 611.1,323.8 612.8,324.7 614.4,324.3 616.0,323.8 617.6,324.4 619.2,322.5 620.8,315.3 622.4,297.7 624.0,323.4 625.6,324.1 627.2,323.8 628.9,324.5 630.5,322.6 632.1,322.9 633.7,324.3 635.3,324.2 636.9,325.1 638.5,323.9 640.1,323.2 641.7,324.2 643.3,323.1 645.0,323.5 646.6,320.3 648.2,324.3 649.8,320.9 651.4,324.1 653.0,320.1 654.6,323.5 656.2,322.4 657.8,324.9 659.4,323.8 661.1,324.3 662.7,317.2 664.3,324.4 665.9,318.0 667.5,322.6 669.1,324.8 670.7,321.0 672.3,322.3 673.9,314.2 675.5,314.0 677.2,323.8 678.8,323.6 680.4,324.8 682.0,322.6 683.6,323.7 685.2,324.6 686.8,324.4 688.4,323.2 690.0,324.4 691.6,323.2 693.3,323.7 694.9,324.1 696.5,315.3 698.1,324.9 699.7,311.9 701.3,324.5 702.9,324.3 704.5,323.8 706.1,323.5 707.7,313.8 709.4,322.8 711.0,324.2 712.6,322.8 714.2,323.0 715.8,315.2 717.4,316.2 719.0,321.6 720.6,316.2 722.2,324.0 723.8,317.9 725.5,323.2 727.1,324.0 728.7,322.7 730.3,322.6 731.9,323.9 733.5,322.9 735.1,322.7 736.7,324.6 738.3,325.2 739.9,324.2 741.6,325.6 743.2,323.2 744.8,324.5 746.4,324.1 748.0,318.1 749.6,315.3 751.2,324.0 752.8,323.9 754.4,289.4 756.0,323.9 757.7,324.6 759.3,323.7 760.9,324.9 762.5,323.4 764.1,314.6 765.7,323.2 767.3,322.2 768.9,324.4 770.5,312.9 772.1,315.3 773.8,323.6 775.4,323.1 777.0,323.1 778.6,320.9 780.2,323.3 781.8,324.6 783.4,321.1 785.0,313.6 786.6,294.1 788.2,324.7 789.9,323.8 791.5,323.6 793.1,323.3 794.7,320.2 796.3,323.4 797.9,324.1 799.5,322.9 801.1,313.4 802.7,323.8 804.3,323.5 806.0,317.0 807.6,324.4 809.2,324.3 810.8,323.2 812.4,324.3 814.0,323.7 815.6,325.2 817.2,322.9 818.8,288.2 820.4,323.8 822.1,324.5 823.7,325.4 825.3,318.2 826.9,324.4 828.5,324.1 830.1,323.8 831.7,323.9 833.3,318.6 834.9,324.8 836.5,315.2 838.2,314.0 839.8,324.0 841.4,319.8 843.0,322.4 844.6,323.5 846.2,323.0 847.8,323.4 849.4,323.4 851.0,324.1 852.6,324.4 854.3,296.5 855.9,323.6 857.5,317.0 859.1,324.6 860.7,324.3 862.3,324.6 863.9,323.9 865.5,323.7 867.1,323.7 868.7,324.4 870.4,320.1 872.0,325.0 873.6,318.0 875.2,324.8 876.8,325.0 878.4,322.8 880.0,322.8 881.6,324.9 883.2,323.7 884.8,325.1 886.5,324.7 888.1,323.3 889.7,323.9 891.3,323.0 892.9,323.7 894.5,323.2 896.1,323.2 897.7,323.4 899.3,323.0 900.9,324.2 902.6,313.1 904.2,322.6 905.8,323.6 907.4,322.5 909.0,323.5" fill="none" stroke="#5794F2" stroke-width="1" stroke-opacity="1" stroke-linejoin="round"/>
<line x1="979.6" y1="331.5" x2="1367" y2="331.5" stroke="#e6e7e8" stroke-width="1"/>
<line x1="979.6" y1="273.5" x2="1367" y2="273.5" stroke="#e6e7e8" stroke-width="1"/>
<line x1="1021.5" y1="224" x2="1021.5" y2="335" stroke="#e6e7e8" stroke-width="1"/>
<line x1="1085.5" y1="224" x2="1085.5" y2="335" stroke="#e6e7e8" stroke-width="1"/>
<line x1="1150.5" y1="224" x2="1150.5" y2="335" stroke="#e6e7e8" stroke-width="1"/>
<line x1="1214.5" y1="224" x2="1214.5" y2="335" stroke="#e6e7e8" stroke-width="1"/>
<line x1="1279.5" y1="224" x2="1279.5" y2="335" stroke="#e6e7e8" stroke-width="1"/>
<line x1="1343.5" y1="224" x2="1343.5" y2="335" stroke="#e6e7e8" stroke-width="1"/>
<polyline points="979.6,297.0 981.2,314.9 982.8,298.3 984.5,294.0 986.1,317.4 987.7,320.7 989.3,317.9 990.9,316.4 992.6,299.7 994.2,317.1 995.8,304.6 997.4,320.1 999.1,315.8 1000.7,313.6 1002.3,305.1 1003.9,322.5 1005.5,319.4 1007.2,318.0 1008.8,317.5 1010.4,316.4 1012.0,313.7 1013.6,319.8 1015.3,299.0 1016.9,316.3 1018.5,311.6 1020.1,316.7 1021.7,317.2 1023.4,299.4 1025.0,316.2 1026.6,320.6 1028.2,317.7 1029.8,314.3 1031.5,315.8 1033.1,314.2 1034.7,315.3 1036.3,316.9 1038.0,318.4 1039.6,299.9 1041.2,315.1 1042.8,302.1 1044.4,317.2 1046.1,314.5 1047.7,319.4 1049.3,317.2 1050.9,298.9 1052.5,259.0 1054.2,316.4 1055.8,317.2 1057.4,314.7 1059.0,305.2 1060.6,317.1 1062.3,314.5 1063.9,320.2 1065.5,320.4 1067.1,319.2 1068.8,319.3 1070.4,319.0 1072.0,315.6 1073.6,317.9 1075.2,316.6 1076.9,313.8 1078.5,314.5 1080.1,299.1 1081.7,317.6 1083.3,320.2 1085.0,314.3 1086.6,317.3 1088.2,303.1 1089.8,301.0 1091.4,316.6 1093.1,315.9 1094.7,307.2 1096.3,318.3 1097.9,317.6 1099.5,309.9 1101.2,315.4 1102.8,320.2 1104.4,316.6 1106.0,308.3 1107.7,316.9 1109.3,318.2 1110.9,319.5 1112.5,313.8 1114.1,319.3 1115.8,315.9 1117.4,267.6 1119.0,316.6 1120.6,314.2 1122.2,314.3 1123.9,318.4 1125.5,292.1 1127.1,313.8 1128.7,302.2 1130.3,314.9 1132.0,314.2 1133.6,316.1 1135.2,318.1 1136.8,317.3 1138.5,317.2 1140.1,295.9 1141.7,319.8 1143.3,302.5 1144.9,301.5 1146.6,307.9 1148.2,316.2 1149.8,319.0 1151.4,317.2 1153.0,318.9 1154.7,297.0 1156.3,317.6 1157.9,300.2 1159.5,316.0 1161.1,316.8 1162.8,316.3 1164.4,314.4 1166.0,316.8 1167.6,318.3 1169.2,299.6 1170.9,314.7 1172.5,316.9 1174.1,311.8 1175.7,314.5 1177.4,305.4 1179.0,318.2 1180.6,310.9 1182.2,317.4 1183.8,317.3 1185.5,304.4 1187.1,314.9 1188.7,319.0 1190.3,317.6 1191.9,319.3 1193.6,315.8 1195.2,316.7 1196.8,315.2 1198.4,296.4 1200.0,305.7 1201.7,297.3 1203.3,318.2 1204.9,300.7 1206.5,319.9 1208.1,316.3 1209.8,302.1 1211.4,317.0 1213.0,316.2 1214.6,318.1 1216.3,318.1 1217.9,318.2 1219.5,314.7 1221.1,319.2 1222.7,319.5 1224.4,304.1 1226.0,317.1 1227.6,317.7 1229.2,318.7 1230.8,316.3 1232.5,317.3 1234.1,314.8 1235.7,318.6 1237.3,305.4 1238.9,317.1 1240.6,316.8 1242.2,317.9 1243.8,307.0 1245.4,306.9 1247.1,320.5 1248.7,316.5 1250.3,301.9 1251.9,313.6 1253.5,303.6 1255.2,314.9 1256.8,315.0 1258.4,313.3 1260.0,315.5 1261.6,319.9 1263.3,316.1 1264.9,316.2 1266.5,315.7 1268.1,316.5 1269.7,317.0 1271.4,320.1 1273.0,316.7 1274.6,319.8 1276.2,302.6 1277.8,309.4 1279.5,236.0 1281.1,316.1 1282.7,316.2 1284.3,314.2 1286.0,317.7 1287.6,317.8 1289.2,318.9 1290.8,315.0 1292.4,318.2 1294.1,318.3 1295.7,306.4 1297.3,316.8 1298.9,296.2 1300.5,305.2 1302.2,312.6 1303.8,316.3 1305.4,315.1 1307.0,316.6 1308.6,315.2 1310.3,320.1 1311.9,250.4 1313.5,318.5 1315.1,317.4 1316.8,316.0 1318.4,319.9 1320.0,317.5 1321.6,318.5 1323.2,316.9 1324.9,318.8 1326.5,308.7 1328.1,318.6 1329.7,312.1 1331.3,316.6 1333.0,316.1 1334.6,317.7 1336.2,317.2 1337.8,318.1 1339.4,317.0 1341.1,315.8 1342.7,302.8 1344.3,247.5 1345.9,318.4 1347.5,320.2 1349.2,317.4 1350.8,317.5 1352.4,317.9 1354.0,319.8 1355.7,314.5 1357.3,314.6 1358.9,320.2 1360.5,317.6 1362.1,320.2 1363.8,316.7 1365.4,317.0 1367.0,316.2" fill="none" stroke="#56A64B" stroke-width="1" stroke-opacity="1" stroke-linejoin="round"/>
<polyline points="979.6,318.4 981.2,319.0 982.8,318.4 984.5,319.3 986.1,319.0 987.7,319.2 989.3,317.5 990.9,319.5 992.6,319.5 994.2,317.5 995.8,317.9 997.4,318.6 999.1,318.3 1000.7,319.3 1002.3,319.4 1003.9,319.8 1005.5,317.9 1007.2,319.2 1008.8,319.3 1010.4,318.2 1012.0,319.0 1013.6,319.2 1015.3,320.0 1016.9,319.1 1018.5,311.4 1020.1,320.5 1021.7,273.4 1023.4,319.8 1025.0,319.0 1026.6,317.2 1028.2,319.1 1029.8,320.9 1031.5,319.8 1033.1,318.9 1034.7,317.7 1036.3,318.4 1038.0,309.6 1039.6,318.6 1041.2,319.4 1042.8,319.0 1044.4,318.2 1046.1,317.5 1047.7,319.0 1049.3,280.9 1050.9,320.4 1052.5,317.9 1054.2,319.4 1055.8,318.5 1057.4,320.4 1059.0,319.2 1060.6,318.4 1062.3,318.7 1063.9,320.0 1065.5,316.9 1067.1,319.0 1068.8,318.3 1070.4,319.6 1072.0,318.6 1073.6,309.5 1075.2,319.4 1076.9,318.9 1078.5,318.2 1080.1,318.6 1081.7,319.9 1083.3,319.1 1085.0,315.5 1086.6,318.4 1088.2,307.3 1089.8,319.5 1091.4,319.3 1093.1,318.5 1094.7,318.1 1096.3,318.7 1097.9,317.9 1099.5,318.7 1101.2,319.7 1102.8,317.8 1104.4,318.6 1106.0,311.6 1107.7,318.3 1109.3,319.4 1110.9,318.9 1112.5,318.9 1114.1,318.0 1115.8,318.5 1117.4,267.6 1119.0,320.2 1120.6,318.3 1122.2,317.8 1123.9,317.4 1125.5,317.0 1127.1,319.5 1128.7,319.2 1130.3,317.7 1132.0,315.7 1133.6,317.4 1135.2,319.4 1136.8,319.4 1138.5,318.6 1140.1,307.5 1141.7,314.3 1143.3,319.9 1144.9,318.3 1146.6,318.4 1148.2,318.8 1149.8,241.7 1151.4,319.1 1153.0,318.3 1154.7,320.4 1156.3,317.7 1157.9,318.9 1159.5,309.5 1161.1,319.5 1162.8,320.3 1164.4,319.0 1166.0,318.7 1167.6,318.9 1169.2,312.9 1170.9,318.6 1172.5,319.7 1174.1,318.3 1175.7,319.5 1177.4,318.4 1179.0,319.5 1180.6,318.9 1182.2,318.6 1183.8,318.9 1185.5,319.9 1187.1,318.5 1188.7,319.8 1190.3,319.7 1191.9,320.8 1193.6,319.6 1195.2,319.4 1196.8,319.2 1198.4,320.0 1200.0,317.6 1201.7,318.6 1203.3,315.0 1204.9,318.4 1206.5,318.9 1208.1,319.9 1209.8,319.5 1211.4,317.3 1213.0,318.6 1214.6,317.9 1216.3,320.4 1217.9,318.4 1219.5,319.1 1221.1,318.3 1222.7,318.3 1224.4,318.3 1226.0,318.7 1227.6,319.8 1229.2,314.3 1230.8,319.5 1232.5,318.4 1234.1,319.9 1235.7,319.5 1237.3,319.5 1238.9,319.0 1240.6,319.7 1242.2,318.7 1243.8,320.2 1245.4,318.2 1247.1,318.3 1248.7,319.1 1250.3,319.6 1251.9,318.4 1253.5,318.1 1255.2,317.7 1256.8,318.7 1258.4,319.7 1260.0,318.6 1261.6,319.2 1263.3,309.5 1264.9,318.8 1266.5,319.2 1268.1,318.4 1269.7,319.5 1271.4,318.6 1273.0,319.4 1274.6,319.8 1276.2,320.5 1277.8,317.4 1279.5,317.8 1281.1,318.3 1282.7,317.9 1284.3,319.4 1286.0,319.4 1287.6,318.5 1289.2,320.3 1290.8,318.9 1292.4,318.0 1294.1,318.8 1295.7,319.4 1297.3,317.6 1298.9,318.8 1300.5,317.6 1302.2,318.7 1303.8,318.6 1305.4,318.0 1307.0,317.7 1308.6,317.7 1310.3,319.8 1311.9,318.6 1313.5,318.1 1315.1,315.4 1316.8,318.4 1318.4,317.4 1320.0,321.0 1321.6,318.2 1323.2,319.8 1324.9,320.1 1326.5,320.0 1328.1,319.3 1329.7,319.0 1331.3,311.8 1333.0,318.4 1334.6,318.0 1336.2,318.5 1337.8,312.3 1339.4,319.0 1341.1,319.0 1342.7,310.9 1344.3,318.9 1345.9,318.5 1347.5,319.1 1349.2,318.7 1350.8,319.0 1352.4,318.2 1354.0,319.6 1355.7,320.2 1357.3,317.5 1358.9,318.5 1360.5,319.1 1362.1,319.3 1363.8,319.4 1365.4,312.8 1367.0,320.4" fill="none" stroke="#E0B400" stroke-width="1" stroke-opacity="1" stroke-linejoin="round"/>
<polyline points="979.6,314.6 981.2,312.9 982.8,300.2 984.5,317.9 986.1,318.7 987.7,317.9 989.3,318.2 990.9,320.0 992.6,309.6 994.2,314.2 995.8,296.4 997.4,318.0 999.1,318.0 1000.7,320.5 1002.3,296.7 1003.9,297.9 1005.5,320.1 1007.2,322.6 1008.8,316.7 1010.4,318.6 1012.0,318.2 1013.6,317.5 1015.3,316.8 1016.9,319.4 1018.5,319.5 1020.1,321.4 1021.7,236.0 1023.4,319.3 1025.0,317.7 1026.6,318.5 1028.2,295.5 1029.8,305.2 1031.5,319.0 1033.1,318.0 1034.7,319.4 1036.3,314.8 1038.0,319.5 1039.6,319.2 1041.2,321.1 1042.8,307.8 1044.4,301.2 1046.1,320.0 1047.7,296.1 1049.3,297.2 1050.9,315.9 1052.5,316.8 1054.2,299.1 1055.8,314.2 1057.4,318.9 1059.0,315.5 1060.6,317.6 1062.3,319.2 1063.9,319.9 1065.5,316.4 1067.1,305.2 1068.8,317.1 1070.4,317.9 1072.0,316.6 1073.6,296.5 1075.2,316.8 1076.9,319.6 1078.5,297.4 1080.1,319.6 1081.7,317.3 1083.3,302.6 1085.0,267.6 1086.6,319.3 1088.2,318.2 1089.8,317.8 1091.4,316.8 1093.1,319.6 1094.7,314.1 1096.3,315.9 1097.9,314.4 1099.5,317.6 1101.2,321.0 1102.8,320.5 1104.4,313.3 1106.0,294.4 1107.7,317.4 1109.3,317.6 1110.9,320.7 1112.5,321.2 1114.1,295.2 1115.8,318.1 1117.4,319.2 1119.0,317.6 1120.6,320.3 1122.2,320.9 1123.9,320.2 1125.5,309.2 1127.1,316.4 1128.7,317.2 1130.3,316.5 1132.0,317.1 1133.6,316.5 1135.2,305.7 1136.8,320.3 1138.5,319.2 1140.1,319.8 1141.7,317.9 1143.3,320.9 1144.9,321.0 1146.6,321.3 1148.2,320.1 1149.8,320.0 1151.4,304.1 1153.0,318.1 1154.7,320.0 1156.3,321.2 1157.9,317.3 1159.5,319.2 1161.1,320.2 1162.8,322.8 1164.4,320.5 1166.0,314.6 1167.6,317.7 1169.2,317.8 1170.9,320.9 1172.5,319.6 1174.1,318.4 1175.7,319.7 1177.4,320.7 1179.0,319.0 1180.6,294.8 1182.2,259.0 1183.8,320.8 1185.5,319.8 1187.1,305.9 1188.7,297.1 1190.3,313.3 1191.9,317.1 1193.6,304.8 1195.2,317.8 1196.8,319.2 1198.4,311.5 1200.0,295.6 1201.7,317.6 1203.3,303.6 1204.9,306.7 1206.5,319.2 1208.1,316.2 1209.8,316.6 1211.4,321.0 1213.0,315.9 1214.6,267.6 1216.3,315.1 1217.9,317.0 1219.5,317.8 1221.1,317.8 1222.7,318.0 1224.4,318.6 1226.0,318.4 1227.6,279.2 1229.2,306.6 1230.8,308.4 1232.5,322.1 1234.1,317.4 1235.7,317.6 1237.3,320.1 1238.9,319.9 1240.6,299.9 1242.2,318.1 1243.8,317.4 1245.4,318.0 1247.1,256.1 1248.7,319.4 1250.3,316.4 1251.9,317.9 1253.5,302.2 1255.2,320.8 1256.8,297.8 1258.4,316.0 1260.0,316.8 1261.6,318.6 1263.3,320.0 1264.9,318.1 1266.5,321.0 1268.1,317.3 1269.7,317.1 1271.4,318.3 1273.0,321.5 1274.6,319.7 1276.2,319.2 1277.8,321.1 1279.5,261.9 1281.1,316.4 1282.7,320.1 1284.3,320.2 1286.0,304.0 1287.6,321.1 1289.2,312.9 1290.8,301.8 1292.4,317.0 1294.1,316.6 1295.7,320.2 1297.3,317.2 1298.9,309.6 1300.5,319.7 1302.2,317.9 1303.8,316.4 1305.4,312.5 1307.0,317.9 1308.6,320.0 1310.3,310.4 1311.9,318.8 1313.5,316.5 1315.1,317.8 1316.8,318.6 1318.4,317.8 1320.0,311.5 1321.6,318.7 1323.2,316.8 1324.9,306.4 1326.5,320.0 1328.1,311.3 1329.7,318.9 1331.3,316.6 1333.0,303.8 1334.6,303.3 1336.2,294.4 1337.8,320.2 1339.4,320.0 1341.1,316.6 1342.7,317.8 1344.3,273.4 1345.9,320.7 1347.5,318.1 1349.2,308.1 1350.8,319.4 1352.4,320.8 1354.0,318.3 1355.7,315.3 1357.3,317.5 1358.9,320.8 1360.5,318.8 1362.1,318.2 1363.8,318.6 1365.4,317.0 1367.0,300.0" fill="none" stroke="#5794F2" stroke-width="1" stroke-opacity="1" stroke-linejoin="round"/>
<line x1="42.4" y1="659.5" x2="450" y2="659.5" stroke="#e6e7e8" stroke-width="1"/>
<line x1="42.4" y1="599.5" x2="450" y2="599.5" stroke="#e6e7e8" stroke-width="1"/>
<line x1="42.4" y1="539.5" x2="450" y2="539.5" stroke="#e6e7e8" stroke-width="1"/>
<line x1="85.5" y1="528" x2="85.5" y2="663.5" stroke="#e6e7e8" stroke-width="1"/>
<line x1="153.5" y1="528" x2="153.5" y2="663.5" stroke="#e6e7e8" stroke-width="1"/>
<line x1="221.5" y1="528" x2="221.5" y2="663.5" stroke="#e6e7e8" stroke-width="1"/>
<line x1="289.5" y1="528" x2="289.5" y2="663.5" stroke="#e6e7e8" stroke-width="1"/>
<line x1="357.5" y1="528" x2="357.5" y2="663.5" stroke="#e6e7e8" stroke-width="1"/>
<line x1="425.5" y1="528" x2="425.5" y2="663.5" stroke="#e6e7e8" stroke-width="1"/>
<line x1="42.4" y1="539.5" x2="450" y2="539.5" stroke="#FFB400" stroke-width="1" stroke-dasharray="10,10"/>
<polyline points="42.4,606.8 44.1,620.7 45.8,607.2 47.5,608.4 49.2,611.4 50.9,610.1 52.6,613.0 54.3,606.0 56.0,623.6 57.7,609.8 59.5,605.9 61.2,604.3 62.9,616.6 64.6,611.1 66.3,609.2 68.0,606.8 69.7,610.9 71.4,623.3 73.1,607.9 74.8,604.0 76.5,614.6 78.2,603.2 79.9,608.4 81.6,608.0 83.3,606.8 85.0,610.6 86.7,608.1 88.4,603.5 90.2,608.8 91.9,608.4 93.6,621.3 95.3,615.4 97.0,625.2 98.7,615.7 100.4,608.7 102.1,603.5 103.8,608.0 105.5,617.3 107.2,615.1 108.9,606.0 110.6,606.8 112.3,605.3 114.0,608.5 115.7,604.0 117.4,610.5 119.1,603.0 120.9,608.2 122.6,608.2 124.3,604.9 126.0,617.7 127.7,616.2 129.4,608.6 131.1,609.8 132.8,604.0 134.5,619.9 136.2,605.2 137.9,620.1 139.6,606.7 141.3,606.4 143.0,606.4 144.7,620.6 146.4,607.7 148.1,608.3 149.8,611.8 151.5,605.5 153.3,602.2 155.0,605.3 156.7,603.2 158.4,610.0 160.1,607.3 161.8,605.8 163.5,609.1 165.2,610.6 166.9,607.8 168.6,606.0 170.3,606.7 172.0,609.7 173.7,604.3 175.4,625.7 177.1,605.0 178.8,627.1 180.5,607.5 182.2,615.4 184.0,623.3 185.7,613.0 187.4,603.1 189.1,606.0 190.8,605.4 192.5,611.1 194.2,608.1 195.9,607.9 197.6,608.0 199.3,608.9 201.0,604.1 202.7,608.1 204.4,608.3 206.1,618.3 207.8,609.2 209.5,623.0 211.2,623.0 212.9,609.2 214.6,617.0 216.4,609.0 218.1,606.0 219.8,610.0 221.5,604.6 223.2,608.2 224.9,609.9 226.6,608.4 228.3,606.8 230.0,612.4 231.7,611.9 233.4,606.3 235.1,611.1 236.8,616.6 238.5,606.3 240.2,607.6 241.9,612.5 243.6,611.0 245.3,613.2 247.1,607.4 248.8,616.7 250.5,607.4 252.2,607.1 253.9,608.5 255.6,606.2 257.3,606.5 259.0,604.4 260.7,606.8 262.4,602.5 264.1,609.0 265.8,604.5 267.5,610.8 269.2,607.0 270.9,608.2 272.6,606.3 274.3,607.3 276.0,605.0 277.8,607.1 279.5,615.5 281.2,618.7 282.9,624.6 284.6,608.4 286.3,606.1 288.0,610.2 289.7,608.3 291.4,609.7 293.1,607.1 294.8,607.9 296.5,606.2 298.2,610.6 299.9,607.0 301.6,613.4 303.3,618.5 305.0,612.6 306.7,620.9 308.4,608.9 310.2,606.1 311.9,625.9 313.6,613.4 315.3,607.4 317.0,617.1 318.7,620.2 320.4,603.0 322.1,625.3 323.8,608.3 325.5,609.2 327.2,605.3 328.9,608.4 330.6,605.9 332.3,608.5 334.0,601.0 335.7,607.5 337.4,607.4 339.1,615.3 340.9,606.9 342.6,607.5 344.3,605.4 346.0,606.7 347.7,604.6 349.4,607.8 351.1,607.2 352.8,611.3 354.5,601.6 356.2,622.2 357.9,606.6 359.6,608.0 361.3,606.3 363.0,608.3 364.7,618.4 366.4,607.5 368.1,605.4 369.8,607.7 371.5,606.2 373.3,609.3 375.0,603.8 376.7,607.8 378.4,607.3 380.1,622.8 381.8,605.1 383.5,623.8 385.2,616.7 386.9,607.8 388.6,606.1 390.3,613.0 392.0,605.6 393.7,609.9 395.4,604.1 397.1,612.2 398.8,608.9 400.5,605.2 402.2,624.5 404.0,609.8 405.7,604.3 407.4,606.0 409.1,607.2 410.8,603.3 412.5,607.7 414.2,604.6 415.9,605.6 417.6,625.8 419.3,609.5 421.0,605.4 422.7,604.0 424.4,608.0 426.1,604.1 427.8,606.4 429.5,604.0 431.2,607.4 432.9,619.0 434.7,618.3 436.4,617.2 438.1,606.8 439.8,603.6 441.5,608.0 443.2,605.5 444.9,609.5 446.6,608.4 448.3,606.0 450.0,608.0" fill="none" stroke="#56A64B" stroke-width="1" stroke-opacity="1" stroke-linejoin="round"/>
<polyline points="42.4,609.9 44.1,619.2 45.8,615.5 47.5,612.6 49.2,614.7 50.9,616.3 52.6,618.2 54.3,609.9 56.0,613.5 57.7,619.5 59.5,611.7 61.2,612.7 62.9,613.3 64.6,608.2 66.3,615.6 68.0,617.8 69.7,610.2 71.4,613.1 73.1,607.7 74.8,609.1 76.5,620.0 78.2,608.8 79.9,610.8 81.6,628.3 83.3,608.5 85.0,617.3 86.7,610.0 88.4,610.4 90.2,611.2 91.9,608.8 93.6,610.3 95.3,609.1 97.0,611.6 98.7,607.2 100.4,614.2 102.1,608.4 103.8,617.8 105.5,611.5 107.2,611.3 108.9,611.1 110.6,612.0 112.3,610.0 114.0,608.0 115.7,609.0 117.4,608.8 119.1,609.3 120.9,612.0 122.6,609.5 124.3,619.8 126.0,612.1 127.7,624.3 129.4,611.5 131.1,611.9 132.8,619.1 134.5,612.6 136.2,609.0 137.9,630.5 139.6,618.3 141.3,610.5 143.0,624.2 144.7,611.7 146.4,609.3 148.1,617.8 149.8,618.8 151.5,610.6 153.3,606.9 155.0,610.7 156.7,609.2 158.4,613.5 160.1,611.8 161.8,611.3 163.5,613.0 165.2,626.5 166.9,609.6 168.6,610.3 170.3,614.5 172.0,617.2 173.7,612.2 175.4,609.4 177.1,612.8 178.8,610.6 180.5,614.8 182.2,620.0 184.0,612.6 185.7,625.3 187.4,612.0 189.1,610.1 190.8,611.0 192.5,613.2 194.2,610.0 195.9,611.8 197.6,619.5 199.3,611.9 201.0,609.4 202.7,624.4 204.4,622.1 206.1,608.8 207.8,610.2 209.5,611.8 211.2,609.0 212.9,608.5 214.6,608.7 216.4,623.5 218.1,610.1 219.8,613.7 221.5,610.2 223.2,611.0 224.9,624.3 226.6,624.6 228.3,611.0 230.0,620.6 231.7,613.1 233.4,610.4 235.1,608.8 236.8,616.0 238.5,618.8 240.2,614.6 241.9,611.5 243.6,609.8 245.3,609.6 247.1,613.1 248.8,613.4 250.5,613.0 252.2,616.7 253.9,611.2 255.6,627.6 257.3,610.1 259.0,608.7 260.7,611.1 262.4,611.0 264.1,613.0 265.8,615.2 267.5,617.3 269.2,610.7 270.9,610.6 272.6,613.1 274.3,622.7 276.0,610.7 277.8,619.0 279.5,610.9 281.2,613.4 282.9,610.7 284.6,609.9 286.3,608.4 288.0,608.8 289.7,620.2 291.4,616.3 293.1,617.0 294.8,611.2 296.5,619.3 298.2,616.6 299.9,624.6 301.6,623.3 303.3,616.5 305.0,609.5 306.7,608.4 308.4,617.2 310.2,615.9 311.9,621.5 313.6,611.1 315.3,609.1 317.0,611.4 318.7,618.5 320.4,625.6 322.1,613.7 323.8,618.0 325.5,625.2 327.2,620.1 328.9,612.3 330.6,615.6 332.3,608.4 334.0,623.0 335.7,622.3 337.4,611.1 339.1,612.3 340.9,606.9 342.6,608.9 344.3,609.9 346.0,607.3 347.7,608.6 349.4,627.0 351.1,612.6 352.8,624.0 354.5,611.6 356.2,610.0 357.9,608.2 359.6,629.1 361.3,625.5 363.0,611.4 364.7,605.6 366.4,611.8 368.1,609.6 369.8,611.0 371.5,612.9 373.3,609.6 375.0,614.8 376.7,610.3 378.4,609.5 380.1,623.0 381.8,626.1 383.5,612.4 385.2,614.5 386.9,626.3 388.6,615.3 390.3,610.4 392.0,612.3 393.7,620.5 395.4,608.6 397.1,628.0 398.8,610.0 400.5,610.5 402.2,609.9 404.0,610.8 405.7,615.4 407.4,611.9 409.1,606.5 410.8,609.8 412.5,607.1 414.2,611.3 415.9,609.1 417.6,609.0 419.3,608.5 421.0,609.8 422.7,605.1 424.4,610.6 426.1,608.8 427.8,610.8 429.5,606.8 431.2,613.2 432.9,606.7 434.7,610.3 436.4,609.8 438.1,610.4 439.8,610.3 441.5,620.9 443.2,612.9 444.9,612.9 446.6,620.0 448.3,610.2 450.0,607.9" fill="none" stroke="#E0B400" stroke-width="1" stroke-opacity="1" stroke-linejoin="round"/>
<line x1="523.2" y1="659.5" x2="909" y2="659.5" stroke="#e6e7e8" stroke-width="1"/>
<line x1="523.2" y1="600.5" x2="909" y2="600.5" stroke="#e6e7e8" stroke-width="1"/>
<line x1="523.2" y1="541.5" x2="909" y2="541.5" stroke="#e6e7e8" stroke-width="1"/>
<line x1="564.5" y1="528" x2="564.5" y2="663" stroke="#e6e7e8" stroke-width="1"/>
<line x1="628.5" y1="528" x2="628.5" y2="663" stroke="#e6e7e8" stroke-width="1"/>
<line x1="693.5" y1="528" x2="693.5" y2="663" stroke="#e6e7e8" stroke-width="1"/>
<line x1="757.5" y1="528" x2="757.5" y2="663" stroke="#e6e7e8" stroke-width="1"/>
<line x1="821.5" y1="528" x2="821.5" y2="663" stroke="#e6e7e8" stroke-width="1"/>
<line x1="885.5" y1="528" x2="885.5" y2="663" stroke="#e6e7e8" stroke-width="1"/>
<line x1="523.2" y1="541.5" x2="909" y2="541.5" stroke="#E02F44" stroke-width="1" stroke-dasharray="10,10"/>
<line x1="523.2" y1="600.5" x2="909" y2="600.5" stroke="#FFB400" stroke-width="1" stroke-dasharray="10,10"/>
<polyline points="523.2,653.1 524.8,653.1 526.4,653.1 528.0,653.1 529.7,653.1 531.3,653.1 532.9,650.8 534.5,653.1 536.1,653.1 537.7,653.1 539.3,653.1 541.0,653.1 542.6,653.1 544.2,653.1 545.8,653.1 547.4,653.1 549.0,653.1 550.6,653.1 552.3,653.1 553.9,653.1 555.5,653.1 557.1,653.1 558.7,653.1 560.3,653.1 561.9,653.1 563.6,653.1 565.2,653.1 566.8,653.1 568.4,653.1 570.0,653.1 571.6,653.1 573.2,653.1 574.9,653.1 576.5,653.1 578.1,653.1 579.7,653.1 581.3,653.1 582.9,653.1 584.5,653.1 586.2,653.1 587.8,653.1 589.4,653.1 591.0,653.1 592.6,653.1 594.2,650.8 595.8,653.1 597.5,650.8 599.1,653.1 600.7,653.1 602.3,653.1 603.9,653.1 605.5,653.1 607.1,653.1 608.8,650.8 610.4,653.1 612.0,653.1 613.6,653.1 615.2,653.1 616.8,653.1 618.4,653.1 620.1,653.1 621.7,653.1 623.3,653.1 624.9,653.1 626.5,653.1 628.1,653.1 629.7,650.8 631.4,653.1 633.0,653.1 634.6,653.1 636.2,653.1 637.8,653.1 639.4,653.1 641.0,653.1 642.7,653.1 644.3,653.1 645.9,653.1 647.5,653.1 649.1,653.1 650.7,653.1 652.3,653.1 654.0,653.1 655.6,653.1 657.2,653.1 658.8,653.1 660.4,653.1 662.0,653.1 663.6,653.1 665.3,653.1 666.9,653.1 668.5,653.1 670.1,653.1 671.7,653.1 673.3,653.1 674.9,653.1 676.6,653.1 678.2,653.1 679.8,653.1 681.4,653.1 683.0,653.1 684.6,653.1 686.2,653.1 687.9,653.1 689.5,653.1 691.1,653.1 692.7,653.1 694.3,653.1 695.9,653.1 697.5,653.1 699.2,653.1 700.8,653.1 702.4,653.1 704.0,653.1 705.6,653.1 707.2,653.1 708.8,653.1 710.5,653.1 712.1,653.1 713.7,653.1 715.3,650.8 716.9,653.1 718.5,653.1 720.1,653.1 721.7,653.1 723.4,653.1 725.0,653.1 726.6,650.8 728.2,650.8 729.8,653.1 731.4,653.1 733.0,653.1 734.7,653.1 736.3,653.1 737.9,653.1 739.5,653.1 741.1,653.1 742.7,653.1 744.3,653.1 746.0,653.1 747.6,653.1 749.2,653.1 750.8,653.1 752.4,653.1 754.0,653.1 755.6,653.1 757.3,653.1 758.9,653.1 760.5,653.1 762.1,653.1 763.7,653.1 765.3,653.1 766.9,653.1 768.6,653.1 770.2,653.1 771.8,653.1 773.4,653.1 775.0,653.1 776.6,653.1 778.2,653.1 779.9,653.1 781.5,653.1 783.1,653.1 784.7,653.1 786.3,653.1 787.9,653.1 789.5,653.1 791.2,653.1 792.8,650.8 794.4,653.1 796.0,653.1 797.6,653.1 799.2,653.1 800.8,653.1 802.5,653.1 804.1,653.1 805.7,653.1 807.3,653.1 808.9,653.1 810.5,653.1 812.1,653.1 813.8,653.1 815.4,653.1 817.0,653.1 818.6,653.1 820.2,653.1 821.8,653.1 823.4,653.1 825.1,653.1 826.7,653.1 828.3,653.1 829.9,653.1 831.5,653.1 833.1,653.1 834.7,653.1 836.4,653.1 838.0,653.1 839.6,653.1 841.2,653.1 842.8,653.1 844.4,653.1 846.0,653.1 847.7,653.1 849.3,653.1 850.9,653.1 852.5,653.1 854.1,653.1 855.7,653.1 857.3,653.1 859.0,653.1 860.6,653.1 862.2,653.1 863.8,653.1 865.4,653.1 867.0,650.8 868.6,653.1 870.3,653.1 871.9,653.1 873.5,653.1 875.1,653.1 876.7,653.1 878.3,653.1 879.9,653.1 881.6,653.1 883.2,653.1 884.8,653.1 886.4,653.1 888.0,653.1 889.6,653.1 891.2,653.1 892.9,653.1 894.5,653.1 896.1,653.1 897.7,653.1 899.3,653.1 900.9,653.1 902.5,653.1 904.2,650.8 905.8,653.1 907.4,653.1 909.0,653.1" fill="none" stroke="#56A64B" stroke-width="1" stroke-opacity="1" stroke-linejoin="round"/>
<polyline points="523.2,653.1 524.8,653.1 526.4,653.1 528.0,653.1 529.7,653.1 531.3,653.1 532.9,653.1 534.5,653.1 536.1,653.1 537.7,653.1 539.3,653.1 541.0,653.1 542.6,653.1 544.2,653.1 545.8,653.1 547.4,653.1 549.0,653.1 550.6,653.1 552.3,653.1 553.9,653.1 555.5,653.1 557.1,653.1 558.7,653.1 560.3,653.1 561.9,653.1 563.6,653.1 565.2,653.1 566.8,653.1 568.4,653.1 570.0,653.1 571.6,653.1 573.2,653.1 574.9,653.1 576.5,653.1 578.1,653.1 579.7,653.1 581.3,653.1 582.9,653.1 584.5,653.1 586.2,653.1 587.8,653.1 589.4,653.1 591.0,653.1 592.6,653.1 594.2,653.1 595.8,653.1 597.5,653.1 599.1,653.1 600.7,653.1 602.3,653.1 603.9,653.1 605.5,653.1 607.1,653.1 608.8,653.1 610.4,653.1 612.0,653.1 613.6,653.1 615.2,653.1 616.8,653.1 618.4,653.1 620.1,653.1 621.7,653.1 623.3,653.1 624.9,653.1 626.5,653.1 628.1,653.1 629.7,653.1 631.4,653.1 633.0,653.1 634.6,653.1 636.2,653.1 637.8,653.1 639.4,653.1 641.0,653.1 642.7,653.1 644.3,653.1 645.9,653.1 647.5,653.1 649.1,653.1 650.7,653.1 652.3,653.1 654.0,653.1 655.6,653.1 657.2,653.1 658.8,653.1 660.4,653.1 662.0,653.1 663.6,653.1 665.3,653.1 666.9,653.1 668.5,653.1 670.1,653.1 671.7,653.1 673.3,653.1 674.9,653.1 676.6,653.1 678.2,653.1 679.8,653.1 681.4,653.1 683.0,653.1 684.6,653.1 686.2,653.1 687.9,653.1 689.5,653.1 691.1,653.1 692.7,653.1 694.3,653.1 695.9,653.1 697.5,653.1 699.2,653.1 700.8,653.1 702.4,653.1 704.0,653.1 705.6,653.1 707.2,653.1 708.8,653.1 710.5,653.1 712.1,653.1 713.7,653.1 715.3,653.1 716.9,653.1 718.5,653.1 720.1,653.1 721.7,653.1 723.4,653.1 725.0,653.1 726.6,653.1 728.2,653.1 729.8,653.1 731.4,653.1 733.0,653.1 734.7,653.1 736.3,653.1 737.9,653.1 739.5,653.1 741.1,653.1 742.7,653.1 744.3,653.1 746.0,653.1 747.6,653.1 749.2,653.1 750.8,653.1 752.4,653.1 754.0,653.1 755.6,653.1 757.3,653.1 758.9,653.1 760.5,653.1 762.1,653.1 763.7,653.1 765.3,653.1 766.9,653.1 768.6,653.1 770.2,653.1 771.8,653.1 773.4,653.1 775.0,653.1 776.6,653.1 778.2,653.1 779.9,653.1 781.5,653.1 783.1,653.1 784.7,653.1 786.3,653.1 787.9,653.1 789.5,653.1 791.2,653.1 792.8,653.1 794.4,653.1 796.0,653.1 797.6,653.1 799.2,653.1 800.8,653.1 802.5,653.1 804.1,653.1 805.7,653.1 807.3,653.1 808.9,653.1 810.5,653.1 812.1,653.1 813.8,653.1 815.4,653.1 817.0,653.1 818.6,653.1 820.2,653.1 821.8,653.1 823.4,653.1 825.1,653.1 826.7,653.1 828.3,653.1 829.9,653.1 831.5,653.1 833.1,653.1 834.7,653.1 836.4,653.1 838.0,653.1 839.6,653.1 841.2,653.1 842.8,653.1 844.4,653.1 846.0,653.1 847.7,653.1 849.3,653.1 850.9,653.1 852.5,653.1 854.1,653.1 855.7,653.1 857.3,653.1 859.0,653.1 860.6,653.1 862.2,653.1 863.8,653.1 865.4,653.1 867.0,653.1 868.6,653.1 870.3,653.1 871.9,653.1 873.5,653.1 875.1,653.1 876.7,653.1 878.3,653.1 879.9,653.1 881.6,653.1 883.2,653.1 884.8,653.1 886.4,653.1 888.0,653.1 889.6,653.1 891.2,653.1 892.9,653.1 894.5,653.1 896.1,653.1 897.7,653.1 899.3,653.1 900.9,653.1 902.5,653.1 904.2,653.1 905.8,653.1 907.4,653.1 909.0,653.1" fill="none" stroke="#E0B400" stroke-width="1.3" stroke-opacity="1" stroke-linejoin="round"/>
<line x1="992.2" y1="659.5" x2="1367" y2="659.5" stroke="#e6e7e8" stroke-width="1"/>
<line x1="992.2" y1="618.5" x2="1367" y2="618.5" stroke="#e6e7e8" stroke-width="1"/>
<line x1="992.2" y1="578.5" x2="1367" y2="578.5" stroke="#e6e7e8" stroke-width="1"/>
<line x1="992.2" y1="537.5" x2="1367" y2="537.5" stroke="#e6e7e8" stroke-width="1"/>
<line x1="1032.5" y1="528" x2="1032.5" y2="663" stroke="#e6e7e8" stroke-width="1"/>
<line x1="1094.5" y1="528" x2="1094.5" y2="663" stroke="#e6e7e8" stroke-width="1"/>
<line x1="1157.5" y1="528" x2="1157.5" y2="663" stroke="#e6e7e8" stroke-width="1"/>
<line x1="1219.5" y1="528" x2="1219.5" y2="663" stroke="#e6e7e8" stroke-width="1"/>
<line x1="1282.5" y1="528" x2="1282.5" y2="663" stroke="#e6e7e8" stroke-width="1"/>
<line x1="1344.5" y1="528" x2="1344.5" y2="663" stroke="#e6e7e8" stroke-width="1"/>
<polyline points="992.2,545.0 993.8,557.6 995.3,567.2 996.9,565.3 998.5,566.1 1000.0,559.5 1001.6,564.1 1003.2,560.2 1004.7,567.1 1006.3,570.7 1007.9,559.9 1009.5,560.8 1011.0,561.6 1012.6,556.4 1014.2,564.8 1015.7,559.7 1017.3,556.5 1018.9,552.0 1020.4,555.5 1022.0,567.7 1023.6,558.8 1025.1,556.6 1026.7,573.9 1028.3,553.2 1029.8,563.9 1031.4,561.0 1033.0,552.3 1034.5,546.4 1036.1,564.6 1037.7,559.3 1039.2,563.1 1040.8,568.0 1042.4,558.8 1044.0,558.6 1045.5,570.2 1047.1,560.5 1048.7,559.5 1050.2,551.0 1051.8,563.3 1053.4,564.1 1054.9,558.1 1056.5,551.5 1058.1,553.9 1059.6,555.2 1061.2,572.4 1062.8,558.0 1064.3,575.0 1065.9,556.1 1067.5,559.0 1069.0,555.2 1070.6,570.2 1072.2,557.5 1073.7,563.1 1075.3,557.8 1076.9,558.6 1078.5,563.3 1080.0,560.2 1081.6,563.2 1083.2,568.3 1084.7,549.0 1086.3,565.1 1087.9,564.4 1089.4,566.7 1091.0,552.5 1092.6,574.8 1094.1,553.9 1095.7,559.5 1097.3,551.3 1098.8,565.3 1100.4,562.9 1102.0,562.7 1103.5,567.2 1105.1,565.3 1106.7,559.2 1108.2,559.7 1109.8,560.1 1111.4,571.8 1113.0,556.0 1114.5,566.9 1116.1,560.8 1117.7,565.3 1119.2,569.3 1120.8,567.1 1122.4,557.3 1123.9,570.5 1125.5,547.4 1127.1,566.6 1128.6,559.8 1130.2,569.1 1131.8,554.5 1133.3,558.8 1134.9,568.7 1136.5,563.8 1138.0,552.0 1139.6,570.6 1141.2,565.9 1142.7,569.7 1144.3,558.4 1145.9,561.0 1147.5,560.1 1149.0,566.2 1150.6,551.0 1152.2,565.8 1153.7,557.8 1155.3,571.5 1156.9,554.7 1158.4,559.3 1160.0,558.9 1161.6,565.8 1163.1,554.5 1164.7,573.4 1166.3,551.6 1167.8,558.1 1169.4,557.8 1171.0,568.5 1172.5,560.2 1174.1,567.2 1175.7,562.0 1177.2,563.4 1178.8,562.3 1180.4,561.0 1182.0,552.2 1183.5,563.6 1185.1,556.4 1186.7,570.5 1188.2,564.5 1189.8,558.8 1191.4,561.5 1192.9,563.0 1194.5,568.5 1196.1,561.0 1197.6,557.5 1199.2,566.8 1200.8,555.4 1202.3,559.0 1203.9,567.0 1205.5,566.5 1207.0,548.1 1208.6,555.4 1210.2,556.1 1211.7,572.9 1213.3,549.8 1214.9,574.0 1216.5,557.2 1218.0,565.8 1219.6,567.7 1221.2,566.3 1222.7,563.4 1224.3,556.2 1225.9,554.1 1227.4,557.0 1229.0,555.7 1230.6,565.1 1232.1,558.6 1233.7,563.8 1235.3,551.1 1236.8,561.9 1238.4,560.2 1240.0,566.4 1241.5,554.5 1243.1,567.6 1244.7,563.8 1246.2,569.3 1247.8,551.5 1249.4,557.3 1251.0,562.4 1252.5,560.4 1254.1,549.4 1255.7,565.6 1257.2,558.6 1258.8,564.3 1260.4,548.7 1261.9,564.4 1263.5,547.5 1265.1,572.8 1266.6,567.3 1268.2,559.1 1269.8,553.1 1271.3,568.9 1272.9,549.3 1274.5,557.7 1276.0,551.6 1277.6,572.9 1279.2,558.4 1280.7,568.6 1282.3,558.8 1283.9,573.3 1285.5,563.5 1287.0,566.0 1288.6,561.8 1290.2,570.4 1291.7,553.9 1293.3,564.8 1294.9,553.1 1296.4,564.2 1298.0,569.0 1299.6,560.3 1301.1,548.9 1302.7,562.0 1304.3,565.7 1305.8,569.7 1307.4,551.7 1309.0,567.2 1310.5,566.7 1312.1,564.7 1313.7,550.5 1315.2,557.5 1316.8,555.2 1318.4,568.4 1320.0,553.9 1321.5,552.9 1323.1,563.6 1324.7,572.9 1326.2,553.4 1327.8,566.5 1329.4,560.8 1330.9,565.7 1332.5,563.4 1334.1,559.6 1335.6,554.3 1337.2,559.2 1338.8,546.9 1340.3,576.9 1341.9,564.5 1343.5,568.1 1345.0,555.6 1346.6,551.5 1348.2,564.3 1349.7,567.6 1351.3,560.1 1352.9,559.2 1354.5,570.3 1356.0,553.7 1357.6,553.8 1359.2,565.9 1360.7,554.9 1362.3,570.0 1363.9,550.7 1365.4,567.1 1367.0,550.1" fill="none" stroke="#56A64B" stroke-width="1" stroke-opacity="1" stroke-linejoin="round"/>
<polyline points="992.2,563.9 993.8,558.0 995.3,563.9 996.9,559.6 998.5,565.3 1000.0,550.4 1001.6,557.6 1003.2,558.8 1004.7,577.1 1006.3,560.6 1007.9,563.3 1009.5,561.5 1011.0,567.0 1012.6,559.1 1014.2,558.6 1015.7,550.2 1017.3,558.1 1018.9,567.1 1020.4,562.5 1022.0,561.6 1023.6,568.8 1025.1,561.5 1026.7,560.8 1028.3,557.9 1029.8,561.4 1031.4,557.0 1033.0,562.9 1034.5,548.2 1036.1,570.4 1037.7,557.4 1039.2,565.9 1040.8,565.7 1042.4,556.5 1044.0,562.0 1045.5,558.5 1047.1,554.3 1048.7,568.0 1050.2,557.8 1051.8,567.9 1053.4,555.4 1054.9,556.4 1056.5,557.9 1058.1,566.8 1059.6,553.8 1061.2,559.7 1062.8,554.1 1064.3,570.7 1065.9,555.9 1067.5,564.2 1069.0,549.6 1070.6,555.5 1072.2,562.3 1073.7,573.8 1075.3,548.6 1076.9,570.0 1078.5,560.5 1080.0,558.3 1081.6,553.0 1083.2,569.2 1084.7,564.2 1086.3,570.6 1087.9,553.6 1089.4,565.5 1091.0,562.3 1092.6,560.0 1094.1,554.3 1095.7,561.3 1097.3,568.2 1098.8,568.5 1100.4,568.2 1102.0,566.2 1103.5,559.1 1105.1,565.1 1106.7,557.9 1108.2,562.6 1109.8,557.7 1111.4,561.8 1113.0,553.9 1114.5,566.4 1116.1,555.1 1117.7,557.4 1119.2,567.2 1120.8,563.3 1122.4,570.3 1123.9,562.7 1125.5,550.8 1127.1,572.3 1128.6,550.0 1130.2,565.3 1131.8,560.7 1133.3,565.9 1134.9,562.1 1136.5,553.3 1138.0,557.1 1139.6,565.8 1141.2,563.4 1142.7,565.7 1144.3,554.7 1145.9,563.5 1147.5,551.7 1149.0,567.7 1150.6,559.1 1152.2,569.7 1153.7,563.4 1155.3,566.6 1156.9,551.7 1158.4,569.4 1160.0,556.4 1161.6,559.0 1163.1,544.7 1164.7,572.7 1166.3,570.6 1167.8,564.0 1169.4,565.4 1171.0,564.8 1172.5,565.8 1174.1,565.6 1175.7,561.7 1177.2,567.1 1178.8,555.3 1180.4,564.1 1182.0,555.0 1183.5,569.4 1185.1,563.2 1186.7,566.9 1188.2,559.5 1189.8,555.1 1191.4,557.8 1192.9,565.9 1194.5,565.9 1196.1,560.9 1197.6,556.7 1199.2,559.4 1200.8,559.7 1202.3,562.8 1203.9,549.3 1205.5,570.4 1207.0,553.9 1208.6,559.8 1210.2,550.0 1211.7,569.0 1213.3,554.1 1214.9,572.2 1216.5,562.5 1218.0,569.9 1219.6,557.4 1221.2,561.6 1222.7,563.8 1224.3,561.5 1225.9,550.9 1227.4,557.6 1229.0,553.2 1230.6,562.8 1232.1,556.5 1233.7,566.0 1235.3,565.2 1236.8,571.0 1238.4,558.8 1240.0,563.2 1241.5,559.1 1243.1,559.5 1244.7,559.4 1246.2,568.0 1247.8,557.4 1249.4,555.4 1251.0,556.3 1252.5,565.8 1254.1,565.5 1255.7,561.1 1257.2,555.7 1258.8,564.1 1260.4,561.1 1261.9,565.0 1263.5,547.7 1265.1,570.4 1266.6,565.7 1268.2,564.0 1269.8,556.9 1271.3,559.0 1272.9,560.8 1274.5,555.9 1276.0,548.1 1277.6,556.2 1279.2,558.2 1280.7,565.9 1282.3,555.9 1283.9,569.5 1285.5,547.6 1287.0,572.7 1288.6,555.4 1290.2,566.0 1291.7,562.7 1293.3,555.4 1294.9,548.5 1296.4,553.2 1298.0,558.8 1299.6,569.1 1301.1,549.5 1302.7,555.8 1304.3,562.5 1305.8,566.0 1307.4,556.3 1309.0,570.3 1310.5,559.1 1312.1,565.9 1313.7,560.5 1315.2,555.8 1316.8,556.6 1318.4,571.5 1320.0,561.4 1321.5,569.7 1323.1,549.4 1324.7,568.6 1326.2,565.8 1327.8,562.2 1329.4,564.0 1330.9,554.6 1332.5,555.5 1334.1,566.0 1335.6,553.9 1337.2,561.6 1338.8,553.3 1340.3,569.3 1341.9,550.5 1343.5,568.8 1345.0,559.2 1346.6,566.8 1348.2,551.1 1349.7,567.3 1351.3,548.7 1352.9,570.6 1354.5,567.6 1356.0,563.6 1357.6,562.8 1359.2,577.7 1360.7,560.5 1362.3,568.9 1363.9,553.9 1365.4,554.8 1367.0,559.9" fill="none" stroke="#E0B400" stroke-width="1" stroke-opacity="1" stroke-linejoin="round"/>
<line x1="53.2" y1="937.5" x2="450" y2="937.5" stroke="#e6e7e8" stroke-width="1"/>
<line x1="53.2" y1="904.5" x2="450" y2="904.5" stroke="#e6e7e8" stroke-width="1"/>
<line x1="53.2" y1="871.5" x2="450" y2="871.5" stroke="#e6e7e8" stroke-width="1"/>
<line x1="53.2" y1="837.5" x2="450" y2="837.5" stroke="#e6e7e8" stroke-width="1"/>
<line x1="95.5" y1="831" x2="95.5" y2="941" stroke="#e6e7e8" stroke-width="1"/>
<line x1="161.5" y1="831" x2="161.5" y2="941" stroke="#e6e7e8" stroke-width="1"/>
<line x1="227.5" y1="831" x2="227.5" y2="941" stroke="#e6e7e8" stroke-width="1"/>
<line x1="294.5" y1="831" x2="294.5" y2="941" stroke="#e6e7e8" stroke-width="1"/>
<line x1="360.5" y1="831" x2="360.5" y2="941" stroke="#e6e7e8" stroke-width="1"/>
<line x1="426.5" y1="831" x2="426.5" y2="941" stroke="#e6e7e8" stroke-width="1"/>
<line x1="53.2" y1="871.5" x2="450" y2="871.5" stroke="#FFB400" stroke-width="1" stroke-dasharray="10,10"/>
<polyline points="53.2,875.1 55.9,863.9 58.5,867.0 61.2,867.4 63.9,874.4 66.5,861.9 69.2,896.8 71.8,892.3 74.5,885.7 77.2,872.8 79.8,874.9 82.5,861.0 85.2,885.2 87.8,875.7 90.5,867.4 93.1,875.9 95.8,885.9 98.5,872.6 101.1,877.2 103.8,867.6 106.5,890.7 109.1,871.6 111.8,872.6 114.5,873.6 117.1,883.6 119.8,878.7 122.4,860.0 125.1,863.8 127.8,880.7 130.4,869.8 133.1,884.9 135.8,867.6 138.4,888.4 141.1,868.2 143.7,891.7 146.4,881.8 149.1,877.5 151.7,873.4 154.4,879.5 157.1,883.1 159.7,871.0 162.4,881.6 165.0,876.0 167.7,866.9 170.4,872.5 173.0,883.7 175.7,892.6 178.4,867.2 181.0,887.2 183.7,862.0 186.4,874.6 189.0,892.3 191.7,866.8 194.3,886.3 197.0,880.1 199.7,886.0 202.3,874.9 205.0,872.0 207.7,894.2 210.3,886.8 213.0,869.9 215.6,867.4 218.3,876.2 221.0,872.6 223.6,885.7 226.3,872.0 229.0,871.6 231.6,884.1 234.3,882.1 237.0,866.3 239.6,877.1 242.3,873.4 244.9,889.0 247.6,876.8 250.3,886.5 252.9,862.0 255.6,871.3 258.3,861.5 260.9,887.2 263.6,875.4 266.2,915.5 268.9,854.4 271.6,867.8 274.2,863.9 276.9,878.1 279.6,875.3 282.2,883.6 284.9,877.4 287.6,876.5 290.2,859.8 292.9,869.6 295.5,872.7 298.2,893.9 300.9,887.3 303.5,891.1 306.2,880.8 308.9,881.6 311.5,870.4 314.2,891.7 316.8,864.0 319.5,865.9 322.2,864.1 324.8,890.4 327.5,851.7 330.2,891.2 332.8,874.0 335.5,903.6 338.2,870.7 340.8,866.7 343.5,864.5 346.1,868.8 348.8,874.8 351.5,878.6 354.1,879.5 356.8,874.0 359.5,881.1 362.1,882.2 364.8,862.5 367.4,882.1 370.1,858.4 372.8,884.0 375.4,865.7 378.1,885.2 380.8,870.4 383.4,879.1 386.1,866.6 388.7,883.7 391.4,879.5 394.1,867.0 396.7,868.5 399.4,864.3 402.1,860.2 404.7,881.5 407.4,886.6 410.1,890.0 412.7,876.4 415.4,887.9 418.0,869.5 420.7,871.2 423.4,859.9 426.0,864.7 428.7,862.9 431.4,912.2 434.0,878.6 436.7,880.9 439.3,865.6 442.0,875.5 444.7,880.7 447.3,868.5 450.0,865.7" fill="none" stroke="#56A64B" stroke-width="1" stroke-opacity="0.8" stroke-linejoin="round"/>
<polyline points="53.2,886.5 55.9,871.6 58.5,878.9 61.2,880.3 63.9,886.3 66.5,869.6 69.2,874.2 71.8,882.0 74.5,878.4 77.2,874.9 79.8,878.8 82.5,874.9 85.2,885.6 87.8,863.1 90.5,887.6 93.1,868.2 95.8,884.5 98.5,886.0 101.1,897.0 103.8,892.7 106.5,878.1 109.1,864.7 111.8,864.4 114.5,854.7 117.1,888.4 119.8,884.0 122.4,886.2 125.1,872.1 127.8,878.1 130.4,869.5 133.1,882.6 135.8,884.1 138.4,882.0 141.1,890.9 143.7,880.1 146.4,875.3 149.1,857.0 151.7,874.0 154.4,875.1 157.1,884.9 159.7,896.3 162.4,879.1 165.0,875.1 167.7,871.9 170.4,867.6 173.0,873.7 175.7,880.2 178.4,856.6 181.0,872.0 183.7,863.7 186.4,878.3 189.0,864.1 191.7,880.0 194.3,874.8 197.0,877.7 199.7,870.9 202.3,898.1 205.0,866.0 207.7,899.8 210.3,869.5 213.0,874.3 215.6,891.9 218.3,907.3 221.0,889.0 223.6,866.8 226.3,883.7 229.0,878.2 231.6,882.1 234.3,888.4 237.0,866.7 239.6,883.2 242.3,881.1 244.9,864.3 247.6,862.7 250.3,878.9 252.9,865.9 255.6,901.2 258.3,887.6 260.9,886.6 263.6,868.4 266.2,875.0 268.9,870.9 271.6,874.7 274.2,875.1 276.9,868.5 279.6,872.7 282.2,876.4 284.9,855.8 287.6,881.0 290.2,857.2 292.9,875.4 295.5,868.5 298.2,870.3 300.9,869.8 303.5,877.1 306.2,865.7 308.9,876.4 311.5,869.4 314.2,876.2 316.8,857.9 319.5,892.7 322.2,871.4 324.8,880.0 327.5,873.5 330.2,864.9 332.8,867.5 335.5,867.3 338.2,887.6 340.8,873.5 343.5,860.9 346.1,893.8 348.8,878.0 351.5,859.0 354.1,876.8 356.8,897.6 359.5,868.9 362.1,883.1 364.8,871.0 367.4,882.2 370.1,871.8 372.8,872.8 375.4,868.8 378.1,879.1 380.8,879.8 383.4,871.6 386.1,871.3 388.7,873.5 391.4,866.3 394.1,875.1 396.7,884.9 399.4,869.2 402.1,896.9 404.7,882.3 407.4,876.8 410.1,883.3 412.7,869.9 415.4,873.6 418.0,905.7 420.7,870.7 423.4,877.9 426.0,879.8 428.7,884.6 431.4,877.6 434.0,879.1 436.7,873.7 439.3,882.7 442.0,879.3 444.7,879.7 447.3,884.5 450.0,875.5" fill="none" stroke="#E0B400" stroke-width="1" stroke-opacity="0.8" stroke-linejoin="round"/>
<polyline points="53.2,869.1 55.9,862.5 58.5,869.8 61.2,865.9 63.9,869.8 66.5,859.9 69.2,872.5 71.8,864.8 74.5,890.8 77.2,873.8 79.8,884.4 82.5,873.5 85.2,896.7 87.8,865.3 90.5,893.4 93.1,880.5 95.8,870.3 98.5,872.9 101.1,872.7 103.8,887.5 106.5,877.7 109.1,868.0 111.8,876.4 114.5,865.5 117.1,894.2 119.8,869.4 122.4,870.8 125.1,889.8 127.8,885.2 130.4,887.6 133.1,888.6 135.8,885.7 138.4,898.0 141.1,865.2 143.7,878.2 146.4,866.2 149.1,868.1 151.7,864.9 154.4,887.7 157.1,865.6 159.7,881.5 162.4,886.1 165.0,873.1 167.7,855.2 170.4,880.5 173.0,869.9 175.7,884.9 178.4,863.6 181.0,875.4 183.7,871.3 186.4,867.9 189.0,888.0 191.7,866.2 194.3,875.3 197.0,882.9 199.7,860.0 202.3,873.4 205.0,884.0 207.7,875.3 210.3,863.7 213.0,879.0 215.6,868.3 218.3,877.3 221.0,870.5 223.6,885.0 226.3,859.6 229.0,898.0 231.6,856.2 234.3,889.1 237.0,868.4 239.6,883.9 242.3,874.5 244.9,880.2 247.6,862.0 250.3,872.5 252.9,872.3 255.6,886.2 258.3,852.7 260.9,875.4 263.6,890.2 266.2,883.8 268.9,868.8 271.6,884.7 274.2,869.6 276.9,879.8 279.6,881.6 282.2,876.6 284.9,884.2 287.6,870.8 290.2,858.3 292.9,881.1 295.5,854.1 298.2,871.5 300.9,882.1 303.5,869.7 306.2,891.1 308.9,860.1 311.5,870.2 314.2,872.3 316.8,882.1 319.5,879.0 322.2,871.2 324.8,877.4 327.5,878.7 330.2,886.8 332.8,877.5 335.5,869.5 338.2,878.0 340.8,888.7 343.5,878.5 346.1,886.4 348.8,901.1 351.5,888.0 354.1,877.5 356.8,889.1 359.5,857.6 362.1,883.3 364.8,874.0 367.4,872.6 370.1,872.2 372.8,893.6 375.4,864.2 378.1,864.6 380.8,869.3 383.4,895.0 386.1,859.3 388.7,882.4 391.4,874.9 394.1,872.0 396.7,857.9 399.4,880.9 402.1,850.8 404.7,882.9 407.4,863.6 410.1,873.3 412.7,876.3 415.4,904.2 418.0,848.6 420.7,883.4 423.4,862.7 426.0,881.5 428.7,886.8 431.4,877.6 434.0,885.5 436.7,879.0 439.3,869.1 442.0,884.7 444.7,867.9 447.3,870.6 450.0,853.9" fill="none" stroke="#5794F2" stroke-width="1" stroke-opacity="0.8" stroke-linejoin="round"/>
<polyline points="53.2,871.3 55.9,874.8 58.5,901.4 61.2,866.8 63.9,869.0 66.5,861.6 69.2,889.6 71.8,873.3 74.5,876.0 77.2,860.8 79.8,878.1 82.5,864.8 85.2,870.3 87.8,877.8 90.5,880.3 93.1,874.2 95.8,866.8 98.5,866.6 101.1,877.9 103.8,862.8 106.5,882.9 109.1,872.8 111.8,894.4 114.5,860.0 117.1,901.5 119.8,863.3 122.4,875.6 125.1,877.1 127.8,886.5 130.4,872.1 133.1,911.7 135.8,876.3 138.4,906.4 141.1,891.5 143.7,895.9 146.4,875.2 149.1,878.7 151.7,886.8 154.4,894.8 157.1,873.2 159.7,881.9 162.4,873.9 165.0,866.5 167.7,893.2 170.4,888.4 173.0,868.2 175.7,882.7 178.4,868.2 181.0,883.1 183.7,882.2 186.4,876.1 189.0,882.7 191.7,886.8 194.3,853.2 197.0,881.2 199.7,852.8 202.3,871.3 205.0,870.3 207.7,897.6 210.3,866.0 213.0,886.6 215.6,877.2 218.3,877.4 221.0,866.6 223.6,873.0 226.3,870.4 229.0,867.5 231.6,878.8 234.3,878.2 237.0,882.6 239.6,880.7 242.3,877.7 244.9,896.1 247.6,859.3 250.3,885.0 252.9,872.2 255.6,886.7 258.3,864.4 260.9,867.7 263.6,882.5 266.2,897.6 268.9,872.9 271.6,876.8 274.2,875.7 276.9,879.9 279.6,878.6 282.2,874.9 284.9,874.0 287.6,875.4 290.2,870.3 292.9,879.1 295.5,867.2 298.2,874.6 300.9,861.3 303.5,880.1 306.2,886.4 308.9,872.7 311.5,865.5 314.2,874.4 316.8,868.4 319.5,877.5 322.2,898.1 324.8,917.0 327.5,878.7 330.2,883.4 332.8,868.3 335.5,869.5 338.2,892.1 340.8,883.2 343.5,860.4 346.1,883.1 348.8,867.8 351.5,883.2 354.1,885.7 356.8,871.2 359.5,865.4 362.1,874.0 364.8,899.2 367.4,896.7 370.1,867.4 372.8,894.9 375.4,872.3 378.1,883.0 380.8,855.7 383.4,896.5 386.1,866.3 388.7,885.4 391.4,862.0 394.1,880.4 396.7,853.6 399.4,862.8 402.1,888.9 404.7,873.6 407.4,880.2 410.1,882.6 412.7,873.3 415.4,886.0 418.0,891.3 420.7,879.6 423.4,868.4 426.0,877.4 428.7,872.0 431.4,873.9 434.0,877.4 436.7,887.4 439.3,898.7 442.0,859.9 444.7,890.3 447.3,893.4 450.0,872.4" fill="none" stroke="#FF780A" stroke-width="1" stroke-opacity="0.8" stroke-linejoin="round"/>
<polyline points="53.2,864.5 55.9,872.6 58.5,866.8 61.2,854.6 63.9,884.6 66.5,866.2 69.2,870.7 71.8,858.5 74.5,875.6 77.2,877.4 79.8,892.2 82.5,886.3 85.2,869.0 87.8,858.5 90.5,888.4 93.1,877.3 95.8,886.8 98.5,884.9 101.1,858.5 103.8,870.5 106.5,872.5 109.1,879.3 111.8,877.6 114.5,878.7 117.1,874.9 119.8,856.1 122.4,899.0 125.1,865.9 127.8,883.9 130.4,869.2 133.1,875.5 135.8,868.7 138.4,883.6 141.1,866.6 143.7,898.1 146.4,872.5 149.1,873.6 151.7,869.4 154.4,865.5 157.1,894.3 159.7,871.5 162.4,871.2 165.0,871.0 167.7,875.3 170.4,880.2 173.0,866.0 175.7,871.1 178.4,866.6 181.0,888.1 183.7,869.9 186.4,867.8 189.0,874.7 191.7,887.6 194.3,851.2 197.0,893.1 199.7,873.3 202.3,878.6 205.0,879.9 207.7,879.8 210.3,864.9 213.0,880.1 215.6,872.0 218.3,880.0 221.0,866.6 223.6,874.4 226.3,868.1 229.0,895.4 231.6,880.0 234.3,879.3 237.0,870.1 239.6,893.4 242.3,867.4 244.9,871.9 247.6,875.9 250.3,881.3 252.9,881.9 255.6,862.9 258.3,871.7 260.9,875.8 263.6,867.7 266.2,882.7 268.9,871.1 271.6,875.1 274.2,869.9 276.9,871.9 279.6,863.4 282.2,898.5 284.9,861.6 287.6,891.7 290.2,851.3 292.9,889.8 295.5,881.8 298.2,882.5 300.9,869.0 303.5,871.3 306.2,879.7 308.9,883.9 311.5,878.6 314.2,866.2 316.8,881.3 319.5,884.6 322.2,864.0 324.8,893.7 327.5,873.7 330.2,871.0 332.8,882.4 335.5,870.7 338.2,864.9 340.8,877.0 343.5,864.6 346.1,890.1 348.8,870.1 351.5,876.5 354.1,873.2 356.8,871.0 359.5,875.7 362.1,888.4 364.8,877.6 367.4,891.5 370.1,861.1 372.8,887.7 375.4,874.2 378.1,879.8 380.8,872.5 383.4,895.2 386.1,870.3 388.7,874.8 391.4,860.9 394.1,877.0 396.7,874.2 399.4,871.3 402.1,884.3 404.7,870.8 407.4,870.7 410.1,875.5 412.7,870.9 415.4,890.7 418.0,865.2 420.7,885.9 423.4,878.5 426.0,873.9 428.7,863.4 431.4,883.0 434.0,867.8 436.7,872.0 439.3,865.9 442.0,894.0 444.7,876.6 447.3,880.4 450.0,881.6" fill="none" stroke="#E02F44" stroke-width="1" stroke-opacity="0.8" stroke-linejoin="round"/>
<polyline points="53.2,875.3 55.9,873.3 58.5,883.1 61.2,862.2 63.9,897.4 66.5,865.4 69.2,887.6 71.8,874.3 74.5,866.3 77.2,884.9 79.8,888.8 82.5,878.6 85.2,870.7 87.8,867.6 90.5,874.7 93.1,882.8 95.8,891.0 98.5,866.1 101.1,882.3 103.8,862.1 106.5,869.1 109.1,853.5 111.8,890.3 114.5,862.9 117.1,884.7 119.8,886.8 122.4,882.4 125.1,869.5 127.8,882.7 130.4,868.5 133.1,883.4 135.8,855.4 138.4,865.6 141.1,875.0 143.7,862.2 146.4,874.5 149.1,885.4 151.7,876.7 154.4,895.4 157.1,856.3 159.7,868.9 162.4,881.6 165.0,885.2 167.7,881.5 170.4,891.4 173.0,873.7 175.7,873.4 178.4,873.5 181.0,900.8 183.7,857.3 186.4,877.5 189.0,884.1 191.7,882.9 194.3,871.5 197.0,909.3 199.7,877.9 202.3,884.9 205.0,872.7 207.7,875.3 210.3,860.5 213.0,886.0 215.6,875.5 218.3,891.2 221.0,881.5 223.6,884.3 226.3,870.3 229.0,873.3 231.6,862.3 234.3,882.0 237.0,861.7 239.6,876.8 242.3,864.1 244.9,876.8 247.6,862.1 250.3,871.5 252.9,875.4 255.6,874.6 258.3,854.2 260.9,879.2 263.6,872.9 266.2,863.2 268.9,872.3 271.6,865.0 274.2,882.3 276.9,878.9 279.6,855.5 282.2,883.3 284.9,890.8 287.6,885.7 290.2,875.3 292.9,884.4 295.5,860.1 298.2,879.8 300.9,877.1 303.5,885.1 306.2,870.7 308.9,888.5 311.5,889.6 314.2,872.5 316.8,858.5 319.5,879.5 322.2,863.4 324.8,903.4 327.5,869.3 330.2,889.3 332.8,868.2 335.5,879.1 338.2,867.0 340.8,885.3 343.5,865.7 346.1,878.3 348.8,869.9 351.5,882.2 354.1,857.0 356.8,883.0 359.5,877.8 362.1,889.7 364.8,866.1 367.4,866.5 370.1,862.5 372.8,883.2 375.4,878.2 378.1,899.2 380.8,861.2 383.4,879.0 386.1,881.9 388.7,890.2 391.4,874.6 394.1,879.2 396.7,872.5 399.4,875.4 402.1,870.0 404.7,885.8 407.4,861.4 410.1,885.7 412.7,861.5 415.4,870.5 418.0,866.1 420.7,895.1 423.4,866.2 426.0,888.0 428.7,865.1 431.4,875.4 434.0,876.9 436.7,883.4 439.3,853.9 442.0,903.4 444.7,864.9 447.3,881.9 450.0,874.1" fill="none" stroke="#3274D9" stroke-width="1" stroke-opacity="0.8" stroke-linejoin="round"/>
<polyline points="53.2,878.6 55.9,890.4 58.5,869.1 61.2,849.3 63.9,880.8 66.5,871.1 69.2,891.7 71.8,869.9 74.5,893.8 77.2,871.6 79.8,871.1 82.5,863.6 85.2,886.9 87.8,868.9 90.5,881.4 93.1,892.9 95.8,891.4 98.5,867.3 101.1,879.5 103.8,862.0 106.5,877.6 109.1,877.5 111.8,867.4 114.5,875.0 117.1,893.2 119.8,870.1 122.4,875.6 125.1,871.5 127.8,881.8 130.4,865.3 133.1,869.3 135.8,871.8 138.4,879.0 141.1,870.0 143.7,867.2 146.4,871.3 149.1,868.0 151.7,875.3 154.4,879.0 157.1,876.2 159.7,881.8 162.4,891.6 165.0,874.7 167.7,865.4 170.4,874.2 173.0,867.1 175.7,903.0 178.4,869.3 181.0,887.0 183.7,891.5 186.4,890.2 189.0,869.8 191.7,880.0 194.3,860.8 197.0,888.5 199.7,891.9 202.3,888.0 205.0,872.4 207.7,900.3 210.3,883.0 213.0,878.2 215.6,868.4 218.3,877.5 221.0,866.6 223.6,868.3 226.3,855.9 229.0,887.3 231.6,875.9 234.3,872.4 237.0,869.3 239.6,879.0 242.3,853.8 244.9,901.9 247.6,859.4 250.3,884.0 252.9,858.5 255.6,876.0 258.3,868.2 260.9,893.7 263.6,901.5 266.2,884.9 268.9,883.4 271.6,886.5 274.2,886.4 276.9,875.1 279.6,867.4 282.2,864.8 284.9,882.2 287.6,877.6 290.2,886.9 292.9,880.9 295.5,863.8 298.2,886.5 300.9,869.5 303.5,885.1 306.2,861.4 308.9,909.5 311.5,883.9 314.2,880.0 316.8,866.4 319.5,883.2 322.2,870.4 324.8,891.8 327.5,872.6 330.2,885.3 332.8,874.6 335.5,881.8 338.2,872.7 340.8,871.0 343.5,866.7 346.1,875.7 348.8,872.8 351.5,885.2 354.1,878.5 356.8,864.5 359.5,880.7 362.1,887.6 364.8,881.2 367.4,871.1 370.1,878.8 372.8,888.1 375.4,868.7 378.1,862.4 380.8,880.2 383.4,885.9 386.1,870.4 388.7,870.6 391.4,865.6 394.1,880.6 396.7,863.2 399.4,878.0 402.1,873.3 404.7,876.9 407.4,877.6 410.1,886.8 412.7,885.0 415.4,883.2 418.0,875.9 420.7,886.2 423.4,864.8 426.0,887.3 428.7,886.9 431.4,898.8 434.0,889.1 436.7,879.5 439.3,883.9 442.0,877.6 444.7,870.5 447.3,875.7 450.0,872.7" fill="none" stroke="#A352CC" stroke-width="1" stroke-opacity="0.8" stroke-linejoin="round"/>
<polyline points="53.2,881.8 55.9,884.5 58.5,879.9 61.2,861.2 63.9,864.0 66.5,879.1 69.2,878.4 71.8,863.6 74.5,885.1 77.2,855.4 79.8,890.4 82.5,871.0 85.2,877.8 87.8,880.4 90.5,885.9 93.1,870.6 95.8,889.1 98.5,863.6 101.1,868.8 103.8,879.4 106.5,887.6 109.1,875.0 111.8,877.3 114.5,894.3 117.1,886.8 119.8,874.2 122.4,894.8 125.1,872.9 127.8,874.5 130.4,871.8 133.1,877.8 135.8,873.7 138.4,879.5 141.1,865.0 143.7,873.3 146.4,880.1 149.1,905.7 151.7,860.1 154.4,865.2 157.1,896.0 159.7,890.8 162.4,867.6 165.0,885.1 167.7,869.3 170.4,885.9 173.0,862.4 175.7,879.4 178.4,867.7 181.0,873.5 183.7,862.5 186.4,874.8 189.0,860.9 191.7,892.9 194.3,867.8 197.0,872.3 199.7,879.0 202.3,879.8 205.0,858.0 207.7,873.3 210.3,889.4 213.0,876.1 215.6,865.7 218.3,877.5 221.0,872.7 223.6,878.8 226.3,878.1 229.0,875.7 231.6,874.7 234.3,881.3 237.0,875.4 239.6,877.5 242.3,871.0 244.9,891.3 247.6,858.9 250.3,872.9 252.9,875.7 255.6,879.3 258.3,851.9 260.9,871.0 263.6,868.9 266.2,891.8 268.9,879.4 271.6,891.8 274.2,868.2 276.9,892.3 279.6,890.5 282.2,876.6 284.9,866.6 287.6,877.8 290.2,881.2 292.9,885.8 295.5,892.0 298.2,876.0 300.9,880.2 303.5,875.4 306.2,863.5 308.9,869.3 311.5,881.8 314.2,867.1 316.8,870.0 319.5,871.6 322.2,880.2 324.8,885.2 327.5,871.0 330.2,884.5 332.8,870.3 335.5,865.9 338.2,881.3 340.8,891.6 343.5,873.4 346.1,905.3 348.8,868.6 351.5,896.3 354.1,877.7 356.8,877.5 359.5,877.0 362.1,888.5 364.8,883.3 367.4,873.7 370.1,871.6 372.8,876.6 375.4,886.5 378.1,877.2 380.8,866.8 383.4,893.6 386.1,889.2 388.7,874.0 391.4,865.5 394.1,875.7 396.7,879.6 399.4,877.0 402.1,870.0 404.7,885.4 407.4,864.0 410.1,862.9 412.7,884.5 415.4,887.9 418.0,874.7 420.7,893.6 423.4,872.0 426.0,881.6 428.7,866.4 431.4,900.8 434.0,899.4 436.7,885.7 439.3,849.1 442.0,888.3 444.7,879.3 447.3,887.7 450.0,886.8" fill="none" stroke="#8AB8FF" stroke-width="1" stroke-opacity="0.8" stroke-linejoin="round"/>
<polyline points="53.2,871.3 55.9,872.2 58.5,872.7 61.2,877.6 63.9,888.4 66.5,861.5 69.2,889.3 71.8,857.8 74.5,872.5 77.2,872.8 79.8,887.4 82.5,865.4 85.2,877.4 87.8,886.6 90.5,894.9 93.1,875.9 95.8,891.4 98.5,863.2 101.1,877.2 103.8,865.1 106.5,892.6 109.1,854.3 111.8,893.3 114.5,878.5 117.1,880.7 119.8,882.9 122.4,881.0 125.1,882.7 127.8,876.4 130.4,870.4 133.1,874.9 135.8,865.4 138.4,892.8 141.1,878.2 143.7,884.4 146.4,866.7 149.1,876.6 151.7,875.8 154.4,898.6 157.1,903.7 159.7,876.5 162.4,870.2 165.0,909.5 167.7,855.9 170.4,881.8 173.0,858.1 175.7,883.7 178.4,858.1 181.0,892.1 183.7,872.4 186.4,860.5 189.0,867.0 191.7,887.4 194.3,872.7 197.0,878.7 199.7,867.2 202.3,878.1 205.0,861.9 207.7,869.0 210.3,878.9 213.0,855.2 215.6,870.4 218.3,880.1 221.0,879.9 223.6,879.6 226.3,861.7 229.0,855.9 231.6,868.5 234.3,880.1 237.0,878.8 239.6,879.9 242.3,864.7 244.9,872.9 247.6,871.6 250.3,881.7 252.9,881.1 255.6,874.0 258.3,875.4 260.9,879.7 263.6,891.2 266.2,871.2 268.9,861.0 271.6,872.6 274.2,854.4 276.9,885.2 279.6,873.0 282.2,878.5 284.9,868.5 287.6,895.1 290.2,863.9 292.9,882.2 295.5,868.3 298.2,864.3 300.9,865.5 303.5,878.4 306.2,880.6 308.9,877.9 311.5,883.2 314.2,871.8 316.8,873.4 319.5,886.8 322.2,889.1 324.8,881.2 327.5,872.8 330.2,878.1 332.8,876.4 335.5,886.4 338.2,874.2 340.8,890.8 343.5,883.5 346.1,869.3 348.8,874.4 351.5,850.4 354.1,869.2 356.8,897.6 359.5,867.5 362.1,877.2 364.8,885.4 367.4,877.0 370.1,878.9 372.8,877.9 375.4,864.2 378.1,867.2 380.8,868.2 383.4,874.3 386.1,877.5 388.7,863.8 391.4,886.2 394.1,876.8 396.7,870.2 399.4,894.3 402.1,864.0 404.7,875.6 407.4,871.8 410.1,874.3 412.7,868.1 415.4,877.7 418.0,874.8 420.7,886.1 423.4,871.0 426.0,866.1 428.7,865.4 431.4,889.4 434.0,876.1 436.7,882.3 439.3,877.1 442.0,875.3 444.7,869.9 447.3,911.7 450.0,875.2" fill="none" stroke="#E5A8E2" stroke-width="1" stroke-opacity="0.8" stroke-linejoin="round"/>
<polyline points="53.2,895.1 55.9,861.2 58.5,887.0 61.2,865.4 63.9,875.9 66.5,871.3 69.2,869.7 71.8,882.4 74.5,889.1 77.2,862.2 79.8,871.4 82.5,880.2 85.2,888.4 87.8,866.7 90.5,885.2 93.1,881.4 95.8,878.1 98.5,866.8 101.1,880.6 103.8,866.2 106.5,880.4 109.1,895.2 111.8,887.5 114.5,869.3 117.1,870.5 119.8,885.6 122.4,883.0 125.1,874.3 127.8,878.1 130.4,882.2 133.1,874.6 135.8,867.9 138.4,882.9 141.1,893.8 143.7,868.6 146.4,873.3 149.1,879.2 151.7,870.9 154.4,856.2 157.1,867.9 159.7,874.6 162.4,871.0 165.0,904.3 167.7,858.0 170.4,861.1 173.0,861.6 175.7,876.5 178.4,877.8 181.0,867.4 183.7,877.9 186.4,880.7 189.0,884.8 191.7,889.7 194.3,869.8 197.0,879.0 199.7,873.8 202.3,881.7 205.0,874.0 207.7,898.0 210.3,882.3 213.0,875.8 215.6,870.8 218.3,875.8 221.0,868.8 223.6,871.4 226.3,851.8 229.0,874.0 231.6,886.6 234.3,869.1 237.0,887.4 239.6,872.6 242.3,875.3 244.9,882.6 247.6,876.2 250.3,870.1 252.9,866.7 255.6,876.5 258.3,865.9 260.9,868.7 263.6,866.8 266.2,899.1 268.9,874.7 271.6,869.7 274.2,869.0 276.9,880.1 279.6,878.1 282.2,878.1 284.9,857.7 287.6,873.5 290.2,874.8 292.9,866.2 295.5,884.1 298.2,898.1 300.9,873.5 303.5,875.7 306.2,859.8 308.9,884.4 311.5,862.8 314.2,895.7 316.8,878.6 319.5,863.5 322.2,874.2 324.8,872.6 327.5,861.8 330.2,856.4 332.8,856.7 335.5,876.1 338.2,862.8 340.8,859.3 343.5,856.0 346.1,888.7 348.8,890.3 351.5,867.0 354.1,875.9 356.8,898.1 359.5,871.2 362.1,869.2 364.8,873.8 367.4,884.2 370.1,871.7 372.8,863.1 375.4,865.2 378.1,876.2 380.8,870.6 383.4,889.8 386.1,873.8 388.7,876.6 391.4,866.1 394.1,878.4 396.7,882.2 399.4,859.7 402.1,868.0 404.7,865.6 407.4,879.7 410.1,866.2 412.7,874.7 415.4,865.1 418.0,870.4 420.7,872.3 423.4,876.5 426.0,887.2 428.7,863.9 431.4,892.1 434.0,878.6 436.7,870.0 439.3,861.0 442.0,879.3 444.7,861.5 447.3,901.5 450.0,877.6" fill="none" stroke="#6D1F62" stroke-width="1" stroke-opacity="0.8" stroke-linejoin="round"/>
<polyline points="53.2,873.6 55.9,875.3 58.5,880.6 61.2,869.7 63.9,889.0 66.5,865.5 69.2,880.0 71.8,881.4 74.5,893.0 77.2,868.5 79.8,890.1 82.5,870.9 85.2,884.0 87.8,868.3 90.5,866.4 93.1,873.9 95.8,878.1 98.5,865.5 101.1,881.2 103.8,880.3 106.5,895.1 109.1,857.3 111.8,878.3 114.5,881.2 117.1,876.0 119.8,881.5 122.4,889.4 125.1,865.5 127.8,892.4 130.4,872.3 133.1,869.0 135.8,886.6 138.4,887.9 141.1,861.2 143.7,887.5 146.4,865.2 149.1,871.2 151.7,857.1 154.4,877.4 157.1,869.7 159.7,873.4 162.4,864.7 165.0,864.9 167.7,869.9 170.4,866.0 173.0,875.5 175.7,900.7 178.4,862.2 181.0,883.3 183.7,870.6 186.4,875.4 189.0,870.8 191.7,897.3 194.3,872.9 197.0,889.2 199.7,896.5 202.3,877.4 205.0,866.7 207.7,878.4 210.3,871.9 213.0,878.6 215.6,876.9 218.3,901.6 221.0,884.2 223.6,882.3 226.3,867.8 229.0,867.8 231.6,881.4 234.3,885.1 237.0,876.7 239.6,872.5 242.3,859.4 244.9,867.2 247.6,884.2 250.3,880.3 252.9,869.0 255.6,895.2 258.3,889.5 260.9,878.6 263.6,869.6 266.2,881.5 268.9,872.9 271.6,901.2 274.2,878.1 276.9,901.1 279.6,863.9 282.2,878.4 284.9,866.5 287.6,862.9 290.2,871.3 292.9,889.3 295.5,870.0 298.2,881.3 300.9,869.8 303.5,889.1 306.2,892.6 308.9,877.5 311.5,864.2 314.2,900.8 316.8,874.4 319.5,875.7 322.2,878.3 324.8,904.5 327.5,891.3 330.2,886.1 332.8,868.9 335.5,879.3 338.2,870.4 340.8,879.1 343.5,883.5 346.1,870.6 348.8,861.2 351.5,879.6 354.1,871.5 356.8,898.2 359.5,868.6 362.1,902.7 364.8,870.1 367.4,886.9 370.1,862.8 372.8,853.5 375.4,882.8 378.1,874.6 380.8,864.2 383.4,882.6 386.1,884.3 388.7,873.3 391.4,854.0 394.1,882.5 396.7,872.1 399.4,873.0 402.1,892.5 404.7,885.9 407.4,877.6 410.1,874.7 412.7,879.7 415.4,884.9 418.0,858.4 420.7,880.4 423.4,858.4 426.0,880.1 428.7,865.2 431.4,889.7 434.0,867.2 436.7,864.7 439.3,859.9 442.0,893.0 444.7,891.0 447.3,888.4 450.0,879.6" fill="none" stroke="#70DBED" stroke-width="1" stroke-opacity="0.8" stroke-linejoin="round"/>
<polyline points="53.2,879.2 55.9,874.3 58.5,884.7 61.2,869.4 63.9,874.6 66.5,876.6 69.2,880.1 71.8,882.1 74.5,877.6 77.2,868.6 79.8,890.7 82.5,872.1 85.2,864.7 87.8,874.1 90.5,876.6 93.1,873.2 95.8,855.4 98.5,877.4 101.1,874.6 103.8,868.9 106.5,882.4 109.1,881.6 111.8,902.4 114.5,876.6 117.1,899.7 119.8,865.6 122.4,884.0 125.1,873.8 127.8,879.8 130.4,860.1 133.1,875.0 135.8,869.6 138.4,898.5 141.1,877.6 143.7,888.8 146.4,880.2 149.1,875.1 151.7,869.8 154.4,879.6 157.1,865.5 159.7,876.0 162.4,871.8 165.0,891.3 167.7,861.0 170.4,889.7 173.0,870.2 175.7,878.4 178.4,877.8 181.0,871.0 183.7,886.0 186.4,886.1 189.0,885.1 191.7,880.8 194.3,881.0 197.0,893.4 199.7,865.4 202.3,883.6 205.0,861.6 207.7,870.3 210.3,884.3 213.0,883.1 215.6,885.0 218.3,881.2 221.0,874.1 223.6,872.2 226.3,869.6 229.0,876.2 231.6,886.8 234.3,881.6 237.0,871.6 239.6,881.3 242.3,866.7 244.9,894.7 247.6,862.5 250.3,879.2 252.9,874.0 255.6,888.1 258.3,864.0 260.9,878.8 263.6,858.5 266.2,876.4 268.9,870.3 271.6,875.4 274.2,862.0 276.9,869.2 279.6,872.5 282.2,871.2 284.9,876.2 287.6,888.1 290.2,867.1 292.9,898.6 295.5,867.4 298.2,900.5 300.9,891.8 303.5,896.8 306.2,863.9 308.9,893.2 311.5,898.3 314.2,869.0 316.8,866.7 319.5,870.5 322.2,873.7 324.8,865.1 327.5,875.9 330.2,878.8 332.8,881.0 335.5,895.6 338.2,871.5 340.8,882.6 343.5,875.0 346.1,882.7 348.8,879.7 351.5,881.0 354.1,862.8 356.8,884.0 359.5,898.7 362.1,885.2 364.8,871.5 367.4,882.2 370.1,875.1 372.8,868.1 375.4,859.2 378.1,874.0 380.8,886.2 383.4,860.3 386.1,867.1 388.7,888.5 391.4,871.8 394.1,904.0 396.7,937.0 399.4,884.3 402.1,871.2 404.7,875.0 407.4,872.7 410.1,869.3 412.7,850.2 415.4,890.2 418.0,884.0 420.7,880.5 423.4,870.4 426.0,873.9 428.7,881.8 431.4,864.1 434.0,876.8 436.7,891.3 439.3,874.9 442.0,873.7 444.7,885.2 447.3,864.5 450.0,869.6" fill="none" stroke="#F9BA8F" stroke-width="1" stroke-opacity="0.8" stroke-linejoin="round"/>
<polyline points="53.2,890.9 55.9,867.0 58.5,889.5 61.2,869.3 63.9,873.6 66.5,892.3 69.2,889.3 71.8,887.6 74.5,881.6 77.2,870.1 79.8,874.4 82.5,860.6 85.2,902.9 87.8,862.9 90.5,887.5 93.1,869.1 95.8,870.4 98.5,871.9 101.1,892.3 103.8,877.9 106.5,898.4 109.1,863.9 111.8,883.8 114.5,849.0 117.1,886.4 119.8,854.3 122.4,908.4 125.1,878.8 127.8,872.6 130.4,891.1 133.1,895.0 135.8,870.3 138.4,876.8 141.1,885.4 143.7,888.6 146.4,878.5 149.1,887.4 151.7,870.3 154.4,874.9 157.1,870.1 159.7,877.6 162.4,893.6 165.0,889.7 167.7,877.8 170.4,869.5 173.0,858.5 175.7,871.8 178.4,865.2 181.0,893.0 183.7,864.2 186.4,889.2 189.0,894.5 191.7,872.5 194.3,876.7 197.0,879.5 199.7,888.1 202.3,879.2 205.0,873.0 207.7,888.9 210.3,876.0 213.0,888.5 215.6,876.2 218.3,901.3 221.0,885.6 223.6,872.9 226.3,879.6 229.0,871.6 231.6,889.1 234.3,887.9 237.0,856.1 239.6,898.6 242.3,873.2 244.9,886.0 247.6,876.2 250.3,868.7 252.9,889.2 255.6,879.8 258.3,867.9 260.9,874.9 263.6,869.5 266.2,887.3 268.9,865.4 271.6,882.4 274.2,867.4 276.9,865.6 279.6,884.7 282.2,857.1 284.9,888.6 287.6,892.3 290.2,887.2 292.9,878.4 295.5,883.8 298.2,894.9 300.9,851.9 303.5,890.1 306.2,855.1 308.9,872.4 311.5,869.2 314.2,878.0 316.8,890.2 319.5,870.9 322.2,868.5 324.8,866.9 327.5,869.9 330.2,875.2 332.8,881.2 335.5,882.4 338.2,867.6 340.8,878.9 343.5,877.6 346.1,908.8 348.8,859.9 351.5,880.2 354.1,871.6 356.8,887.3 359.5,880.9 362.1,873.8 364.8,860.7 367.4,868.1 370.1,873.0 372.8,878.5 375.4,869.6 378.1,899.7 380.8,900.8 383.4,887.6 386.1,875.9 388.7,897.3 391.4,868.5 394.1,872.7 396.7,864.3 399.4,891.8 402.1,869.0 404.7,877.6 407.4,876.6 410.1,860.8 412.7,884.4 415.4,882.9 418.0,878.0 420.7,879.4 423.4,867.7 426.0,875.3 428.7,881.0 431.4,857.8 434.0,870.6 436.7,876.2 439.3,880.7 442.0,875.4 444.7,870.2 447.3,884.7 450.0,881.2" fill="none" stroke="#37872D" stroke-width="1" stroke-opacity="0.8" stroke-linejoin="round"/>
<polyline points="53.2,880.1 55.9,864.3 58.5,884.1 61.2,876.0 63.9,874.8 66.5,867.4 69.2,881.1 71.8,869.3 74.5,886.0 77.2,858.3 79.8,883.3 82.5,881.1 85.2,868.8 87.8,877.5 90.5,866.3 93.1,875.2 95.8,887.3 98.5,878.0 101.1,883.9 103.8,874.0 106.5,885.8 109.1,870.2 111.8,888.5 114.5,866.5 117.1,874.9 119.8,873.8 122.4,877.0 125.1,864.2 127.8,878.8 130.4,880.9 133.1,872.6 135.8,866.3 138.4,875.1 141.1,866.9 143.7,883.9 146.4,867.9 149.1,873.3 151.7,868.6 154.4,865.0 157.1,885.9 159.7,883.8 162.4,866.9 165.0,868.8 167.7,866.9 170.4,901.2 173.0,876.0 175.7,865.0 178.4,863.8 181.0,885.3 183.7,868.2 186.4,890.6 189.0,887.9 191.7,890.4 194.3,867.5 197.0,882.0 199.7,878.3 202.3,895.1 205.0,864.6 207.7,876.1 210.3,862.4 213.0,877.4 215.6,887.6 218.3,881.5 221.0,880.5 223.6,877.1 226.3,866.1 229.0,858.2 231.6,866.3 234.3,876.5 237.0,868.9 239.6,882.5 242.3,855.7 244.9,881.6 247.6,874.2 250.3,893.2 252.9,875.9 255.6,892.3 258.3,880.2 260.9,890.9 263.6,863.8 266.2,879.6 268.9,885.7 271.6,890.3 274.2,873.8 276.9,876.2 279.6,873.0 282.2,873.7 284.9,878.2 287.6,872.7 290.2,863.2 292.9,893.4 295.5,866.9 298.2,870.9 300.9,886.2 303.5,870.0 306.2,868.9 308.9,886.4 311.5,848.6 314.2,883.6 316.8,882.6 319.5,878.3 322.2,876.6 324.8,878.2 327.5,901.0 330.2,890.2 332.8,884.5 335.5,875.4 338.2,859.6 340.8,876.8 343.5,894.9 346.1,865.5 348.8,865.3 351.5,879.7 354.1,876.9 356.8,867.2 359.5,875.8 362.1,874.2 364.8,875.1 367.4,882.5 370.1,874.6 372.8,896.9 375.4,891.1 378.1,881.4 380.8,867.8 383.4,870.1 386.1,880.5 388.7,885.8 391.4,882.7 394.1,890.3 396.7,871.7 399.4,884.2 402.1,881.4 404.7,874.2 407.4,865.3 410.1,901.6 412.7,876.5 415.4,857.4 418.0,862.0 420.7,873.8 423.4,880.3 426.0,872.0 428.7,861.5 431.4,862.5 434.0,863.8 436.7,889.3 439.3,878.4 442.0,862.8 444.7,871.3 447.3,868.7 450.0,872.7" fill="none" stroke="#AEA2E0" stroke-width="1" stroke-opacity="0.8" stroke-linejoin="round"/>
<polyline points="53.2,879.4 55.9,869.5 58.5,881.7 61.2,870.7 63.9,884.0 66.5,870.5 69.2,866.6 71.8,873.0 74.5,866.1 77.2,875.2 79.8,877.7 82.5,886.9 85.2,877.9 87.8,870.2 90.5,892.0 93.1,866.9 95.8,882.5 98.5,890.5 101.1,891.2 103.8,876.0 106.5,876.4 109.1,880.1 111.8,865.1 114.5,870.4 117.1,899.7 119.8,881.7 122.4,892.7 125.1,867.8 127.8,887.6 130.4,865.5 133.1,885.0 135.8,861.1 138.4,874.4 141.1,880.8 143.7,875.9 146.4,873.5 149.1,882.1 151.7,883.9 154.4,873.4 157.1,867.5 159.7,878.6 162.4,873.0 165.0,889.2 167.7,893.5 170.4,875.4 173.0,871.9 175.7,874.8 178.4,890.3 181.0,858.2 183.7,884.0 186.4,871.9 189.0,869.7 191.7,896.6 194.3,863.7 197.0,878.2 199.7,878.7 202.3,880.0 205.0,870.1 207.7,882.7 210.3,862.9 213.0,891.4 215.6,866.9 218.3,909.1 221.0,882.0 223.6,868.7 226.3,867.8 229.0,871.5 231.6,857.9 234.3,876.1 237.0,883.0 239.6,884.9 242.3,880.2 244.9,873.0 247.6,874.3 250.3,874.0 252.9,873.1 255.6,878.3 258.3,884.6 260.9,896.4 263.6,875.1 266.2,882.7 268.9,868.9 271.6,862.8 274.2,865.9 276.9,886.3 279.6,877.6 282.2,871.2 284.9,895.2 287.6,883.7 290.2,882.7 292.9,884.7 295.5,882.2 298.2,896.7 300.9,864.4 303.5,880.1 306.2,888.2 308.9,875.3 311.5,869.9 314.2,883.8 316.8,870.8 319.5,895.0 322.2,864.9 324.8,887.9 327.5,860.2 330.2,873.9 332.8,877.2 335.5,888.6 338.2,865.4 340.8,876.1 343.5,870.2 346.1,887.2 348.8,881.3 351.5,893.3 354.1,860.1 356.8,869.0 359.5,857.1 362.1,875.4 364.8,874.6 367.4,876.6 370.1,882.4 372.8,895.7 375.4,873.1 378.1,897.1 380.8,869.7 383.4,886.1 386.1,895.1 388.7,878.9 391.4,860.3 394.1,880.2 396.7,874.2 399.4,885.3 402.1,869.2 404.7,876.2 407.4,862.4 410.1,884.8 412.7,864.6 415.4,883.6 418.0,867.1 420.7,896.4 423.4,876.3 426.0,860.0 428.7,878.2 431.4,877.2 434.0,865.1 436.7,888.1 439.3,868.6 442.0,896.1 444.7,871.9 447.3,885.0 450.0,877.2" fill="none" stroke="#F2CC0C" stroke-width="1" stroke-opacity="0.8" stroke-linejoin="round"/>
<polyline points="53.2,890.1 55.9,869.6 58.5,889.4 61.2,876.3 63.9,885.2 66.5,870.6 69.2,877.4 71.8,874.6 74.5,885.6 77.2,870.8 79.8,876.6 82.5,857.6 85.2,886.3 87.8,855.2 90.5,884.9 93.1,865.6 95.8,873.1 98.5,884.1 101.1,870.2 103.8,863.9 106.5,880.0 109.1,858.2 111.8,879.9 114.5,864.9 117.1,901.1 119.8,870.1 122.4,873.4 125.1,870.6 127.8,882.8 130.4,869.2 133.1,881.2 135.8,873.9 138.4,896.0 141.1,863.5 143.7,874.5 146.4,870.3 149.1,891.7 151.7,869.9 154.4,867.3 157.1,858.1 159.7,871.8 162.4,869.7 165.0,885.1 167.7,874.4 170.4,868.3 173.0,872.5 175.7,876.7 178.4,871.2 181.0,886.9 183.7,864.1 186.4,870.3 189.0,870.3 191.7,871.4 194.3,874.4 197.0,887.1 199.7,889.7 202.3,874.7 205.0,878.0 207.7,870.6 210.3,875.5 213.0,867.4 215.6,864.5 218.3,880.7 221.0,870.2 223.6,885.2 226.3,870.6 229.0,874.9 231.6,869.5 234.3,873.7 237.0,880.2 239.6,890.5 242.3,876.2 244.9,882.3 247.6,871.5 250.3,890.0 252.9,883.9 255.6,876.2 258.3,874.4 260.9,872.6 263.6,890.9 266.2,876.3 268.9,868.9 271.6,884.1 274.2,860.8 276.9,885.5 279.6,870.3 282.2,869.6 284.9,889.1 287.6,873.4 290.2,874.4 292.9,890.8 295.5,871.7 298.2,882.6 300.9,882.6 303.5,881.5 306.2,860.1 308.9,881.9 311.5,862.3 314.2,868.3 316.8,877.7 319.5,880.0 322.2,898.2 324.8,877.4 327.5,874.3 330.2,894.1 332.8,862.1 335.5,885.2 338.2,860.0 340.8,873.4 343.5,899.2 346.1,872.7 348.8,875.2 351.5,878.2 354.1,882.1 356.8,879.9 359.5,881.6 362.1,878.3 364.8,895.9 367.4,884.3 370.1,878.2 372.8,884.4 375.4,875.9 378.1,882.9 380.8,871.2 383.4,866.8 386.1,856.2 388.7,893.4 391.4,884.5 394.1,889.2 396.7,869.6 399.4,870.4 402.1,861.7 404.7,887.0 407.4,871.0 410.1,875.4 412.7,907.8 415.4,856.6 418.0,875.3 420.7,877.0 423.4,868.5 426.0,879.3 428.7,873.8 431.4,879.6 434.0,843.9 436.7,888.6 439.3,876.3 442.0,871.5 444.7,874.2 447.3,888.8 450.0,867.0" fill="none" stroke="#1F60C4" stroke-width="1" stroke-opacity="0.8" stroke-linejoin="round"/>
<polyline points="53.2,892.6 55.9,880.2 58.5,889.9 61.2,866.1 63.9,869.0 66.5,865.3 69.2,868.2 71.8,864.5 74.5,887.3 77.2,866.4 79.8,868.5 82.5,865.6 85.2,876.1 87.8,863.3 90.5,879.3 93.1,866.8 95.8,890.1 98.5,866.6 101.1,877.2 103.8,873.6 106.5,881.7 109.1,862.5 111.8,876.8 114.5,866.2 117.1,886.0 119.8,870.0 122.4,892.2 125.1,889.1 127.8,880.5 130.4,879.0 133.1,879.6 135.8,873.2 138.4,893.0 141.1,864.5 143.7,877.4 146.4,865.8 149.1,875.5 151.7,874.0 154.4,873.3 157.1,864.0 159.7,877.1 162.4,890.2 165.0,881.0 167.7,875.6 170.4,889.8 173.0,870.5 175.7,887.4 178.4,868.2 181.0,866.8 183.7,878.4 186.4,883.6 189.0,876.2 191.7,868.4 194.3,871.2 197.0,884.6 199.7,875.9 202.3,871.2 205.0,867.4 207.7,883.4 210.3,882.9 213.0,872.5 215.6,871.1 218.3,875.7 221.0,888.9 223.6,877.2 226.3,866.5 229.0,875.3 231.6,874.3 234.3,887.7 237.0,880.1 239.6,878.5 242.3,870.6 244.9,878.2 247.6,855.9 250.3,871.8 252.9,868.5 255.6,888.2 258.3,876.3 260.9,877.0 263.6,870.4 266.2,877.0 268.9,883.1 271.6,900.4 274.2,866.3 276.9,879.6 279.6,864.8 282.2,872.1 284.9,880.7 287.6,869.6 290.2,865.1 292.9,865.9 295.5,875.5 298.2,877.6 300.9,861.8 303.5,872.1 306.2,895.4 308.9,868.8 311.5,862.2 314.2,874.1 316.8,871.6 319.5,881.0 322.2,888.9 324.8,869.0 327.5,875.4 330.2,864.5 332.8,869.9 335.5,896.5 338.2,870.7 340.8,884.6 343.5,876.8 346.1,888.2 348.8,852.4 351.5,877.4 354.1,861.6 356.8,879.1 359.5,869.3 362.1,875.1 364.8,863.6 367.4,880.0 370.1,880.9 372.8,873.7 375.4,869.9 378.1,887.9 380.8,870.6 383.4,878.5 386.1,881.6 388.7,865.8 391.4,874.9 394.1,868.2 396.7,866.2 399.4,861.9 402.1,871.2 404.7,882.1 407.4,877.2 410.1,876.1 412.7,863.1 415.4,862.2 418.0,872.3 420.7,882.5 423.4,893.8 426.0,900.8 428.7,859.5 431.4,887.3 434.0,863.5 436.7,874.3 439.3,864.2 442.0,882.8 444.7,857.8 447.3,873.6 450.0,881.3" fill="none" stroke="#F29191" stroke-width="1" stroke-opacity="0.8" stroke-linejoin="round"/>
<polyline points="53.2,877.2 55.9,868.6 58.5,883.0 61.2,861.3 63.9,867.0 66.5,866.6 69.2,881.8 71.8,880.1 74.5,881.9 77.2,865.4 79.8,882.7 82.5,851.3 85.2,879.6 87.8,882.2 90.5,890.8 93.1,876.1 95.8,876.4 98.5,877.4 101.1,882.0 103.8,875.2 106.5,882.6 109.1,857.7 111.8,862.6 114.5,866.2 117.1,868.6 119.8,882.9 122.4,884.4 125.1,873.2 127.8,863.9 130.4,871.7 133.1,868.7 135.8,873.4 138.4,876.3 141.1,881.0 143.7,874.7 146.4,877.0 149.1,896.1 151.7,886.4 154.4,867.7 157.1,865.5 159.7,868.8 162.4,880.5 165.0,882.0 167.7,865.2 170.4,893.3 173.0,882.7 175.7,884.4 178.4,882.5 181.0,873.3 183.7,876.4 186.4,879.2 189.0,869.5 191.7,881.5 194.3,851.8 197.0,880.0 199.7,870.6 202.3,881.6 205.0,864.3 207.7,882.3 210.3,863.9 213.0,878.2 215.6,874.5 218.3,886.8 221.0,858.1 223.6,888.5 226.3,865.1 229.0,877.3 231.6,871.2 234.3,879.5 237.0,908.3 239.6,891.4 242.3,862.1 244.9,868.7 247.6,870.0 250.3,872.9 252.9,877.2 255.6,894.3 258.3,869.9 260.9,876.9 263.6,866.2 266.2,872.8 268.9,878.9 271.6,871.4 274.2,867.9 276.9,875.5 279.6,869.3 282.2,889.8 284.9,892.3 287.6,877.0 290.2,865.3 292.9,881.0 295.5,878.7 298.2,878.0 300.9,862.1 303.5,885.6 306.2,855.3 308.9,860.8 311.5,853.7 314.2,898.6 316.8,883.5 319.5,877.8 322.2,855.1 324.8,871.4 327.5,882.6 330.2,870.8 332.8,877.0 335.5,890.7 338.2,871.1 340.8,885.8 343.5,871.4 346.1,863.4 348.8,857.7 351.5,878.7 354.1,873.3 356.8,879.6 359.5,863.8 362.1,874.8 364.8,875.1 367.4,886.6 370.1,862.6 372.8,891.3 375.4,873.6 378.1,878.8 380.8,872.3 383.4,876.7 386.1,854.2 388.7,876.9 391.4,866.9 394.1,873.5 396.7,866.4 399.4,878.4 402.1,865.8 404.7,894.5 407.4,879.1 410.1,875.3 412.7,885.1 415.4,880.8 418.0,862.0 420.7,887.0 423.4,881.0 426.0,870.3 428.7,862.9 431.4,883.4 434.0,872.1 436.7,874.3 439.3,875.6 442.0,904.3 444.7,863.0 447.3,872.4 450.0,858.6" fill="none" stroke="#C4162A" stroke-width="1" stroke-opacity="0.8" stroke-linejoin="round"/>
<polyline points="53.2,876.3 55.9,876.8 58.5,889.6 61.2,869.4 63.9,880.2 66.5,884.8 69.2,876.3 71.8,883.8 74.5,887.3 77.2,867.4 79.8,879.5 82.5,862.5 85.2,867.7 87.8,878.8 90.5,875.7 93.1,871.7 95.8,888.4 98.5,867.7 101.1,871.1 103.8,873.3 106.5,895.4 109.1,871.9 111.8,876.6 114.5,887.3 117.1,897.3 119.8,877.4 122.4,871.0 125.1,867.9 127.8,889.7 130.4,881.4 133.1,878.2 135.8,880.0 138.4,883.9 141.1,873.9 143.7,866.6 146.4,855.5 149.1,883.3 151.7,886.4 154.4,882.9 157.1,868.0 159.7,873.4 162.4,866.1 165.0,884.7 167.7,884.2 170.4,876.2 173.0,898.4 175.7,889.8 178.4,873.6 181.0,877.5 183.7,852.0 186.4,882.9 189.0,878.8 191.7,873.8 194.3,889.8 197.0,874.3 199.7,870.2 202.3,867.0 205.0,880.4 207.7,900.8 210.3,856.2 213.0,880.2 215.6,873.4 218.3,891.6 221.0,866.8 223.6,879.9 226.3,878.6 229.0,874.6 231.6,884.8 234.3,877.0 237.0,891.9 239.6,888.1 242.3,868.4 244.9,866.8 247.6,859.0 250.3,873.6 252.9,860.9 255.6,856.5 258.3,883.2 260.9,883.5 263.6,873.0 266.2,900.7 268.9,871.8 271.6,894.5 274.2,872.0 276.9,865.4 279.6,883.6 282.2,879.4 284.9,882.1 287.6,892.8 290.2,888.5 292.9,871.7 295.5,870.2 298.2,892.2 300.9,863.2 303.5,884.2 306.2,883.4 308.9,884.2 311.5,870.1 314.2,881.3 316.8,872.3 319.5,908.8 322.2,885.4 324.8,875.2 327.5,871.9 330.2,868.5 332.8,886.2 335.5,881.3 338.2,859.7 340.8,888.9 343.5,872.8 346.1,865.1 348.8,865.1 351.5,882.2 354.1,867.8 356.8,878.5 359.5,867.6 362.1,877.1 364.8,853.0 367.4,889.1 370.1,902.2 372.8,883.1 375.4,857.7 378.1,884.7 380.8,870.4 383.4,881.3 386.1,876.2 388.7,864.9 391.4,855.4 394.1,880.4 396.7,873.3 399.4,884.0 402.1,880.3 404.7,874.1 407.4,866.0 410.1,896.7 412.7,876.1 415.4,888.6 418.0,871.9 420.7,876.6 423.4,876.3 426.0,875.5 428.7,880.5 431.4,887.9 434.0,875.5 436.7,876.0 439.3,859.9 442.0,888.4 444.7,862.8 447.3,868.3 450.0,864.9" fill="none" stroke="#B877D9" stroke-width="1" stroke-opacity="0.8" stroke-linejoin="round"/>
<polyline points="53.2,876.0 55.9,872.1 58.5,900.5 61.2,863.7 63.9,880.4 66.5,886.7 69.2,883.4 71.8,870.9 74.5,878.9 77.2,875.8 79.8,884.9 82.5,865.2 85.2,881.9 87.8,867.8 90.5,898.7 93.1,882.3 95.8,888.6 98.5,873.5 101.1,881.5 103.8,884.9 106.5,875.6 109.1,859.0 111.8,885.5 114.5,869.9 117.1,877.8 119.8,884.3 122.4,896.7 125.1,874.6 127.8,882.6 130.4,860.8 133.1,866.9 135.8,883.2 138.4,896.1 141.1,866.5 143.7,882.1 146.4,889.2 149.1,887.4 151.7,868.2 154.4,883.6 157.1,870.1 159.7,884.1 162.4,868.9 165.0,879.9 167.7,882.8 170.4,878.0 173.0,872.7 175.7,876.0 178.4,885.3 181.0,857.8 183.7,870.1 186.4,868.4 189.0,857.4 191.7,892.2 194.3,859.0 197.0,871.9 199.7,872.7 202.3,885.7 205.0,876.1 207.7,913.0 210.3,872.8 213.0,868.4 215.6,880.0 218.3,890.5 221.0,882.1 223.6,880.5 226.3,873.5 229.0,868.2 231.6,874.7 234.3,886.5 237.0,876.9 239.6,875.1 242.3,864.4 244.9,892.4 247.6,874.9 250.3,869.5 252.9,889.6 255.6,870.4 258.3,905.0 260.9,870.4 263.6,881.4 266.2,885.8 268.9,881.7 271.6,876.6 274.2,879.2 276.9,882.6 279.6,872.8 282.2,890.7 284.9,870.9 287.6,884.2 290.2,858.7 292.9,892.1 295.5,873.9 298.2,865.3 300.9,865.1 303.5,879.2 306.2,853.0 308.9,875.2 311.5,871.4 314.2,870.2 316.8,868.1 319.5,874.4 322.2,864.6 324.8,862.0 327.5,886.7 330.2,890.8 332.8,877.3 335.5,884.2 338.2,870.8 340.8,881.7 343.5,876.7 346.1,865.2 348.8,869.2 351.5,887.3 354.1,877.8 356.8,889.0 359.5,869.8 362.1,877.5 364.8,867.5 367.4,882.2 370.1,879.7 372.8,906.3 375.4,864.0 378.1,884.9 380.8,867.1 383.4,877.0 386.1,880.0 388.7,875.3 391.4,867.9 394.1,882.8 396.7,874.6 399.4,874.2 402.1,869.7 404.7,875.6 407.4,883.3 410.1,884.8 412.7,869.6 415.4,880.8 418.0,874.7 420.7,886.1 423.4,876.9 426.0,892.8 428.7,872.5 431.4,881.3 434.0,891.2 436.7,888.0 439.3,859.9 442.0,866.9 444.7,867.1 447.3,890.5 450.0,883.6" fill="none" stroke="#96D98D" stroke-width="1" stroke-opacity="0.8" stroke-linejoin="round"/>
<polyline points="53.2,880.5 55.9,862.4 58.5,887.9 61.2,872.9 63.9,891.1 66.5,867.3 69.2,885.0 71.8,862.4 74.5,882.0 77.2,877.4 79.8,895.6 82.5,879.0 85.2,874.2 87.8,881.9 90.5,880.1 93.1,875.2 95.8,899.0 98.5,874.5 101.1,883.2 103.8,877.2 106.5,879.1 109.1,864.6 111.8,883.3 114.5,877.7 117.1,874.8 119.8,846.7 122.4,888.8 125.1,871.0 127.8,879.4 130.4,869.3 133.1,878.8 135.8,870.4 138.4,885.5 141.1,871.5 143.7,883.9 146.4,862.7 149.1,884.7 151.7,873.0 154.4,876.4 157.1,878.5 159.7,867.4 162.4,862.8 165.0,871.6 167.7,863.7 170.4,863.6 173.0,869.9 175.7,874.1 178.4,869.3 181.0,877.0 183.7,876.6 186.4,879.3 189.0,867.6 191.7,876.6 194.3,863.1 197.0,880.4 199.7,869.4 202.3,878.3 205.0,870.7 207.7,869.4 210.3,861.9 213.0,887.5 215.6,867.8 218.3,871.2 221.0,874.9 223.6,878.7 226.3,857.6 229.0,860.9 231.6,876.5 234.3,886.1 237.0,869.2 239.6,883.1 242.3,875.3 244.9,876.3 247.6,858.3 250.3,881.6 252.9,861.3 255.6,879.3 258.3,858.5 260.9,878.9 263.6,882.8 266.2,885.8 268.9,867.5 271.6,881.0 274.2,880.6 276.9,888.3 279.6,868.5 282.2,875.2 284.9,867.5 287.6,886.3 290.2,868.6 292.9,880.7 295.5,873.9 298.2,884.7 300.9,873.4 303.5,873.9 306.2,861.8 308.9,890.7 311.5,857.4 314.2,886.3 316.8,865.6 319.5,877.7 322.2,863.8 324.8,876.1 327.5,873.9 330.2,884.8 332.8,865.2 335.5,879.5 338.2,872.8 340.8,880.4 343.5,866.1 346.1,870.2 348.8,871.4 351.5,880.8 354.1,869.0 356.8,882.2 359.5,871.7 362.1,875.9 364.8,864.0 367.4,874.3 370.1,862.8 372.8,867.6 375.4,873.0 378.1,889.1 380.8,880.8 383.4,882.5 386.1,874.7 388.7,883.0 391.4,870.2 394.1,875.0 396.7,865.4 399.4,876.9 402.1,863.6 404.7,886.4 407.4,871.6 410.1,888.6 412.7,872.8 415.4,877.6 418.0,871.3 420.7,871.9 423.4,863.5 426.0,883.7 428.7,848.7 431.4,884.0 434.0,875.2 436.7,886.3 439.3,861.2 442.0,875.2 444.7,872.7 447.3,880.2 450.0,872.3" fill="none" stroke="#E0B400" stroke-width="1.1" stroke-opacity="1" stroke-linejoin="round"/>
<line x1="523.8" y1="937.5" x2="909" y2="937.5" stroke="#e6e7e8" stroke-width="1"/>
<line x1="523.8" y1="905.5" x2="909" y2="905.5" stroke="#e6e7e8" stroke-width="1"/>
<line x1="523.8" y1="873.5" x2="909" y2="873.5" stroke="#e6e7e8" stroke-width="1"/>
<line x1="523.8" y1="841.5" x2="909" y2="841.5" stroke="#e6e7e8" stroke-width="1"/>
<line x1="564.5" y1="831" x2="564.5" y2="941" stroke="#e6e7e8" stroke-width="1"/>
<line x1="629.5" y1="831" x2="629.5" y2="941" stroke="#e6e7e8" stroke-width="1"/>
<line x1="693.5" y1="831" x2="693.5" y2="941" stroke="#e6e7e8" stroke-width="1"/>
<line x1="757.5" y1="831" x2="757.5" y2="941" stroke="#e6e7e8" stroke-width="1"/>
<line x1="821.5" y1="831" x2="821.5" y2="941" stroke="#e6e7e8" stroke-width="1"/>
<line x1="885.5" y1="831" x2="885.5" y2="941" stroke="#e6e7e8" stroke-width="1"/>
<line x1="523.8" y1="841.5" x2="909" y2="841.5" stroke="#E02F44" stroke-width="1" stroke-dasharray="10,10"/>
<line x1="523.8" y1="889.5" x2="909" y2="889.5" stroke="#FFB400" stroke-width="1" stroke-dasharray="10,10"/>
<polyline points="523.8,924.5 526.4,923.7 529.0,924.5 531.6,923.0 534.1,925.1 536.7,923.1 539.3,924.6 541.9,923.3 544.5,924.0 547.1,924.9 549.7,924.2 552.2,925.8 554.8,923.7 557.4,924.1 560.0,911.5 562.6,924.1 565.2,911.1 567.7,924.4 570.3,923.6 572.9,924.3 575.5,924.5 578.1,923.3 580.7,916.1 583.3,923.5 585.8,923.2 588.4,922.8 591.0,925.3 593.6,924.8 596.2,925.9 598.8,925.0 601.4,924.7 603.9,925.0 606.5,914.2 609.1,923.1 611.7,924.9 614.3,911.0 616.9,925.0 619.5,923.2 622.0,923.7 624.6,923.3 627.2,924.8 629.8,922.0 632.4,924.6 635.0,905.5 637.6,923.5 640.1,924.7 642.7,925.7 645.3,921.8 647.9,923.5 650.5,923.6 653.1,924.0 655.6,925.1 658.2,926.6 660.8,924.1 663.4,925.3 666.0,925.6 668.6,920.6 671.2,924.4 673.7,925.1 676.3,925.1 678.9,918.6 681.5,924.1 684.1,924.0 686.7,924.8 689.3,924.6 691.8,923.0 694.4,923.0 697.0,921.7 699.6,926.1 702.2,925.3 704.8,926.3 707.4,924.3 709.9,903.9 712.5,909.2 715.1,911.7 717.7,925.0 720.3,923.9 722.9,922.6 725.4,924.4 728.0,923.8 730.6,925.2 733.2,924.0 735.8,924.9 738.4,923.7 741.0,924.4 743.5,924.6 746.1,924.5 748.7,924.0 751.3,924.2 753.9,923.5 756.5,926.2 759.1,922.8 761.6,924.1 764.2,922.8 766.8,926.1 769.4,924.7 772.0,924.5 774.6,924.0 777.2,925.9 779.7,926.2 782.3,923.8 784.9,922.6 787.5,925.3 790.1,922.8 792.7,925.5 795.2,903.4 797.8,923.0 800.4,924.2 803.0,924.3 805.6,924.8 808.2,924.4 810.8,924.9 813.3,924.9 815.9,922.2 818.5,924.6 821.1,921.2 823.7,923.7 826.3,922.8 828.9,927.2 831.4,923.5 834.0,911.3 836.6,922.8 839.2,924.8 841.8,922.8 844.4,925.9 847.0,923.1 849.5,924.5 852.1,924.6 854.7,905.4 857.3,922.0 859.9,920.3 862.5,923.5 865.1,909.9 867.6,923.2 870.2,925.0 872.8,924.4 875.4,924.5 878.0,924.3 880.6,925.4 883.1,924.0 885.7,925.2 888.3,924.4 890.9,926.6 893.5,923.9 896.1,925.9 898.7,922.3 901.2,925.1 903.8,923.4 906.4,924.5 909.0,923.0" fill="none" stroke="#56A64B" stroke-width="1" stroke-opacity="0.8" stroke-linejoin="round"/>
<polyline points="834.0,937.0 836.6,922.0 839.2,923.6 841.8,921.7 844.4,925.2 847.0,913.9 849.5,924.5 852.1,923.1 854.7,925.6 857.3,923.6 859.9,923.8 862.5,923.1 865.1,924.6 867.6,907.9 870.2,924.4 872.8,917.4 875.4,924.2 878.0,922.0 880.6,924.1 883.1,923.4 885.7,924.4 888.3,922.4 890.9,902.3 893.5,922.4 896.1,924.0 898.7,922.1 901.2,924.4 903.8,924.0 906.4,924.8 909.0,923.2" fill="none" stroke="#E0B400" stroke-width="1" stroke-opacity="0.8" stroke-linejoin="round"/>
<polyline points="523.8,923.4 526.4,923.1 529.0,922.1 531.6,921.6 534.1,923.8 536.7,922.5 539.3,925.2 541.9,912.6 544.5,922.2 547.1,920.1 549.7,923.7 552.2,920.4 554.8,922.9 557.4,922.3 560.0,904.7 562.6,921.0 565.2,921.5 567.7,920.4 570.3,922.7 572.9,923.1 575.5,924.4 578.1,917.3 580.7,925.0 583.3,924.1 585.8,923.9 588.4,921.9 591.0,924.3 593.6,911.0 596.2,922.3 598.8,922.8 601.4,924.5 603.9,922.6 606.5,924.6 609.1,921.9 611.7,922.6 614.3,924.5 616.9,922.5 619.5,921.3 622.0,923.5 624.6,920.5 627.2,925.2 629.8,922.2 632.4,922.0 635.0,916.9 637.6,924.7 640.1,922.7 642.7,923.9 645.3,920.9 647.9,924.2 650.5,920.0 653.1,923.8 655.6,924.7 658.2,923.4 660.8,920.8 663.4,922.9 666.0,920.4 668.6,923.3 671.2,922.9 673.7,921.9 676.3,921.3 678.9,922.8 681.5,921.3 684.1,924.7 686.7,914.5 689.3,923.1 691.8,921.4 694.4,923.5 697.0,920.7 699.6,923.3 702.2,921.6 704.8,923.6 707.4,922.3 709.9,923.1 712.5,922.6 715.1,921.9 717.7,921.7 720.3,923.7 722.9,909.5 725.4,922.6 728.0,922.6 730.6,924.6 733.2,920.2 735.8,922.6 738.4,921.5 741.0,904.5 743.5,921.8 746.1,922.5 748.7,923.5 751.3,922.7 753.9,922.0 756.5,921.4 759.1,923.8 761.6,923.2 764.2,921.3 766.8,923.8 769.4,923.1 772.0,923.4 774.6,924.1 777.2,923.2 779.7,921.5 782.3,906.7 784.9,922.3 787.5,924.9 790.1,916.3 792.7,923.2 795.2,923.5 797.8,922.8 800.4,921.8 803.0,923.2 805.6,923.2 808.2,925.1 810.8,920.9 813.3,914.5 815.9,920.6 818.5,923.7 821.1,922.7 823.7,924.6 826.3,922.7 828.9,924.3 831.4,922.0 834.0,923.2 836.6,922.9 839.2,922.5 841.8,921.4 844.4,923.9 847.0,922.4 849.5,924.3 852.1,923.5 854.7,921.9 857.3,921.1 859.9,923.8 862.5,922.4 865.1,923.0 867.6,921.3 870.2,923.7 872.8,922.5 875.4,923.1 878.0,922.5 880.6,924.3 883.1,921.9 885.7,923.3 888.3,922.1 890.9,923.1 893.5,920.9 896.1,923.6 898.7,922.8 901.2,923.2 903.8,923.0 906.4,914.6 909.0,923.0" fill="none" stroke="#5794F2" stroke-width="1" stroke-opacity="0.8" stroke-linejoin="round"/>
<polyline points="523.8,921.5 526.4,920.6 529.0,923.0 531.6,923.8 534.1,923.3 536.7,921.3 539.3,922.4 541.9,921.0 544.5,922.1 547.1,921.3 549.7,904.8 552.2,920.7 554.8,923.3 557.4,920.2 560.0,925.3 562.6,920.9 565.2,923.3 567.7,904.0 570.3,923.5 572.9,921.7 575.5,924.4 578.1,921.4 580.7,923.0 583.3,921.5 585.8,923.9 588.4,923.1 591.0,924.3 593.6,920.4 596.2,922.1 598.8,920.8 601.4,922.2 603.9,922.1 606.5,922.1 609.1,920.8 611.7,923.4 614.3,923.1 616.9,921.7 619.5,921.3 622.0,921.7 624.6,921.7 627.2,922.0 629.8,922.2 632.4,923.7 635.0,922.9 637.6,923.6 640.1,921.5 642.7,923.2 645.3,922.0 647.9,921.4 650.5,921.1 653.1,922.9 655.6,921.3 658.2,922.1 660.8,922.3 663.4,923.8 666.0,921.9 668.6,923.0 671.2,922.6 673.7,920.7 676.3,922.5 678.9,923.2 681.5,921.9 684.1,922.8 686.7,904.0 689.3,923.1 691.8,921.7 694.4,910.3 697.0,921.9 699.6,923.0 702.2,922.7 704.8,922.8 707.4,911.9 709.9,903.4 712.5,924.9 715.1,921.7 717.7,922.4 720.3,924.0 722.9,922.4 725.4,921.3 728.0,921.3 730.6,924.5 733.2,921.2 735.8,923.4 738.4,921.2 741.0,921.9 743.5,920.3 746.1,925.1 748.7,921.9 751.3,923.1 753.9,921.5 756.5,923.3 759.1,921.2 761.6,921.8 764.2,920.7 766.8,922.1 769.4,921.7 772.0,924.5 774.6,921.8 777.2,923.3 779.7,920.4 782.3,922.8 784.9,921.2 787.5,915.8 790.1,924.7 792.7,901.6 795.2,921.7 797.8,922.6 800.4,920.6 803.0,924.2 805.6,922.0 808.2,925.1 810.8,924.4 813.3,905.4 815.9,921.3 818.5,923.6 821.1,923.1 823.7,922.2 826.3,920.0 828.9,922.1 831.4,920.7 834.0,923.5 836.6,921.8 839.2,923.0 841.8,923.1 844.4,913.2 847.0,921.5 849.5,922.9 852.1,921.1 854.7,922.9 857.3,914.3 859.9,923.5 862.5,921.0 865.1,922.8 867.6,922.5 870.2,922.7 872.8,921.3 875.4,924.1 878.0,920.9 880.6,924.5 883.1,901.7 885.7,922.2 888.3,922.0 890.9,921.5 893.5,919.0 896.1,917.7 898.7,924.3 901.2,922.5 903.8,920.8 906.4,921.5 909.0,923.0" fill="none" stroke="#FF780A" stroke-width="1" stroke-opacity="0.8" stroke-linejoin="round"/>
<polyline points="865.1,937.0 867.6,922.7 870.2,921.1 872.8,922.0 875.4,921.4 878.0,920.2 880.6,922.8 883.1,916.4 885.7,922.1 888.3,922.4 890.9,921.7 893.5,920.6 896.1,920.7 898.7,920.7 901.2,923.3 903.8,922.1 906.4,922.4 909.0,920.7" fill="none" stroke="#E02F44" stroke-width="1" stroke-opacity="0.8" stroke-linejoin="round"/>
<polyline points="523.8,926.3 526.4,923.3 529.0,923.3 531.6,923.1 534.1,924.5 536.7,923.8 539.3,924.6 541.9,923.6 544.5,927.0 547.1,923.9 549.7,925.1 552.2,924.3 554.8,925.1 557.4,923.5 560.0,924.9 562.6,924.8 565.2,925.1 567.7,922.3 570.3,925.4 572.9,923.7 575.5,924.7 578.1,922.9 580.7,923.3 583.3,924.8 585.8,925.7 588.4,923.8 591.0,924.1 593.6,921.2 596.2,925.8 598.8,925.0 601.4,917.9 603.9,925.7 606.5,918.6 609.1,922.9 611.7,925.9 614.3,901.9 616.9,924.1 619.5,923.6 622.0,925.5 624.6,923.7 627.2,911.6 629.8,924.6 632.4,924.2 635.0,925.2 637.6,922.9 640.1,923.3 642.7,925.5 645.3,915.3 647.9,925.3 650.5,923.4 653.1,924.9 655.6,925.2 658.2,923.5 660.8,922.7 663.4,925.9 666.0,922.6 668.6,924.5 671.2,923.4 673.7,925.2 676.3,921.9 678.9,923.1 681.5,921.3 684.1,925.2 686.7,921.8 689.3,916.1 691.8,923.2 694.4,923.5 697.0,923.9 699.6,925.0 702.2,924.8 704.8,924.8 707.4,909.9 709.9,924.6 712.5,904.9 715.1,925.2 717.7,922.8 720.3,924.2 722.9,923.8 725.4,924.2 728.0,923.4 730.6,925.4 733.2,922.8 735.8,919.8 738.4,922.1 741.0,927.2 743.5,922.7 746.1,924.8 748.7,924.4 751.3,924.7 753.9,924.1 756.5,925.0 759.1,924.3 761.6,927.3 764.2,923.6 766.8,924.2 769.4,924.4 772.0,918.8 774.6,923.2 777.2,917.7 779.7,923.7 782.3,926.2 784.9,923.8 787.5,925.6 790.1,922.8 792.7,924.2 795.2,923.4 797.8,925.5 800.4,921.5 803.0,925.8 805.6,903.7 808.2,924.8 810.8,923.6 813.3,922.7 815.9,923.6 818.5,905.4 821.1,924.2 823.7,921.6 826.3,922.6 828.9,924.0 831.4,924.3 834.0,915.0 836.6,923.8 839.2,922.9 841.8,922.2 844.4,925.7 847.0,915.7 849.5,924.4 852.1,924.2 854.7,925.0 857.3,924.1 859.9,924.7 862.5,925.2 865.1,925.9 867.6,924.7 870.2,924.6 872.8,924.4 875.4,924.1 878.0,923.4 880.6,925.2 883.1,923.6 885.7,904.1 888.3,923.2 890.9,922.9 893.5,922.1 896.1,923.9 898.7,924.2 901.2,915.5 903.8,923.3 906.4,923.3 909.0,922.9" fill="none" stroke="#3274D9" stroke-width="1" stroke-opacity="0.8" stroke-linejoin="round"/>
<polyline points="523.8,923.7 526.4,922.3 529.0,925.2 531.6,923.0 534.1,925.6 536.7,922.5 539.3,923.1 541.9,924.1 544.5,923.3 547.1,922.7 549.7,925.1 552.2,923.1 554.8,924.7 557.4,917.0 560.0,923.0 562.6,922.2 565.2,922.4 567.7,923.2 570.3,923.8 572.9,924.6 575.5,922.6 578.1,923.5 580.7,925.0 583.3,909.0 585.8,922.5 588.4,924.3 591.0,905.9 593.6,921.2 596.2,925.2 598.8,924.8 601.4,925.5 603.9,924.4 606.5,922.6 609.1,923.1 611.7,916.1 614.3,924.5 616.9,906.1 619.5,921.5 622.0,925.4 624.6,923.8 627.2,923.3 629.8,923.2 632.4,923.9 635.0,925.2 637.6,925.0 640.1,923.8 642.7,924.7 645.3,922.5 647.9,924.0 650.5,923.9 653.1,925.0 655.6,922.2 658.2,925.2 660.8,922.3 663.4,923.8 666.0,923.8 668.6,922.7 671.2,922.1 673.7,923.6 676.3,922.7 678.9,925.0 681.5,922.1 684.1,906.4 686.7,922.0 689.3,917.8 691.8,923.7 694.4,925.5 697.0,924.1 699.6,923.7 702.2,922.8 704.8,923.2 707.4,922.9 709.9,925.1 712.5,923.1 715.1,924.0 717.7,922.1 720.3,924.7 722.9,921.8 725.4,924.0 728.0,924.1 730.6,924.5 733.2,925.7 735.8,924.7 738.4,911.1 741.0,923.3 743.5,922.7 746.1,924.7 748.7,922.2 751.3,924.4 753.9,924.2 756.5,922.8 759.1,922.3 761.6,924.4 764.2,923.1 766.8,923.3 769.4,923.5 772.0,925.7 774.6,924.0 777.2,922.5 779.7,920.9 782.3,925.5 784.9,923.3 787.5,924.5 790.1,922.5 792.7,925.8 795.2,924.0 797.8,925.1 800.4,924.1 803.0,923.4 805.6,923.7 808.2,924.8 810.8,921.0 813.3,925.2 815.9,922.7 818.5,910.3 821.1,921.9 823.7,924.7 826.3,923.8 828.9,923.4 831.4,922.4 834.0,925.2 836.6,922.3 839.2,924.6 841.8,922.4 844.4,923.5 847.0,923.3 849.5,922.8 852.1,923.8 854.7,924.8 857.3,922.9 859.9,925.7 862.5,921.0 865.1,924.7 867.6,923.6 870.2,923.5 872.8,924.3 875.4,924.7 878.0,923.7 880.6,924.1 883.1,923.0 885.7,925.4 888.3,904.3 890.9,924.8 893.5,922.5 896.1,908.0 898.7,924.9 901.2,923.5 903.8,922.1 906.4,923.1 909.0,922.0" fill="none" stroke="#A352CC" stroke-width="1" stroke-opacity="0.8" stroke-linejoin="round"/>
<polyline points="523.8,925.5 526.4,922.2 529.0,923.2 531.6,922.0 534.1,922.9 536.7,921.6 539.3,923.1 541.9,922.8 544.5,924.6 547.1,921.3 549.7,923.3 552.2,920.2 554.8,923.2 557.4,922.0 560.0,926.1 562.6,914.1 565.2,922.7 567.7,914.6 570.3,921.4 572.9,925.2 575.5,924.1 578.1,922.3 580.7,924.2 583.3,921.9 585.8,922.9 588.4,915.6 591.0,922.7 593.6,924.0 596.2,923.8 598.8,919.2 601.4,926.4 603.9,921.8 606.5,923.6 609.1,922.5 611.7,906.6 614.3,922.1 616.9,924.3 619.5,923.4 622.0,923.8 624.6,921.7 627.2,922.2 629.8,922.5 632.4,925.1 635.0,922.9 637.6,924.0 640.1,923.5 642.7,923.6 645.3,921.2 647.9,918.4 650.5,924.6 653.1,922.8 655.6,913.5 658.2,922.2 660.8,922.5 663.4,922.4 666.0,921.3 668.6,923.1 671.2,922.3 673.7,924.2 676.3,922.3 678.9,922.8 681.5,924.1 684.1,923.1 686.7,921.6 689.3,922.4 691.8,923.6 694.4,923.5 697.0,921.8 699.6,922.7 702.2,922.4 704.8,922.1 707.4,921.5 709.9,923.7 712.5,923.0 715.1,923.9 717.7,920.6 720.3,924.1 722.9,922.1 725.4,924.0 728.0,920.9 730.6,924.3 733.2,922.9 735.8,923.3 738.4,923.2 741.0,922.6 743.5,922.3 746.1,922.7 748.7,921.8 751.3,916.9 753.9,922.1 756.5,917.6 759.1,921.6 761.6,923.1 764.2,922.2 766.8,924.3 769.4,917.3 772.0,924.2 774.6,921.8 777.2,924.3 779.7,921.7 782.3,924.1 784.9,921.3 787.5,923.4 790.1,922.3 792.7,923.3 795.2,910.3 797.8,922.9 800.4,903.3 803.0,921.6 805.6,912.3 808.2,923.5 810.8,924.2 813.3,924.8 815.9,923.1 818.5,923.8 821.1,924.2 823.7,923.5 826.3,922.0 828.9,924.0 831.4,922.2 834.0,925.4 836.6,908.4 839.2,923.4 841.8,912.9 844.4,923.7 847.0,923.5 849.5,923.3 852.1,923.0 854.7,905.7 857.3,923.6 859.9,923.1 862.5,922.7 865.1,924.7 867.6,923.1 870.2,924.9 872.8,922.0 875.4,922.6 878.0,919.5 880.6,921.2 883.1,920.0 885.7,914.1 888.3,923.2 890.9,922.7 893.5,920.6 896.1,923.0 898.7,923.0 901.2,925.2 903.8,923.5 906.4,923.4 909.0,923.6" fill="none" stroke="#8AB8FF" stroke-width="1" stroke-opacity="0.8" stroke-linejoin="round"/>
<polyline points="523.8,922.7 526.4,920.0 529.0,924.2 531.6,923.3 534.1,923.3 536.7,922.2 539.3,922.9 541.9,919.6 544.5,922.6 547.1,920.0 549.7,923.1 552.2,922.1 554.8,910.9 557.4,921.7 560.0,922.1 562.6,920.7 565.2,922.6 567.7,920.8 570.3,924.1 572.9,921.0 575.5,923.2 578.1,920.7 580.7,924.8 583.3,921.1 585.8,921.7 588.4,921.8 591.0,924.3 593.6,921.2 596.2,922.1 598.8,921.3 601.4,923.3 603.9,923.5 606.5,922.9 609.1,921.5 611.7,923.8 614.3,921.8 616.9,903.2 619.5,923.2 622.0,924.1 624.6,920.6 627.2,921.8 629.8,923.1 632.4,923.5 635.0,920.6 637.6,911.5 640.1,923.2 642.7,922.2 645.3,923.1 647.9,922.7 650.5,919.6 653.1,922.4 655.6,921.9 658.2,924.6 660.8,922.3 663.4,922.1 666.0,919.9 668.6,923.3 671.2,909.0 673.7,923.4 676.3,922.3 678.9,906.9 681.5,919.5 684.1,922.6 686.7,921.6 689.3,923.7 691.8,914.3 694.4,922.9 697.0,922.3 699.6,921.7 702.2,921.5 704.8,925.6 707.4,922.7 709.9,922.0 712.5,922.2 715.1,924.3 717.7,922.9 720.3,923.2 722.9,921.6 725.4,923.9 728.0,921.9 730.6,923.3 733.2,922.2 735.8,923.0 738.4,921.8 741.0,921.2 743.5,919.8 746.1,923.6 748.7,920.5 751.3,924.5 753.9,920.8 756.5,921.9 759.1,922.2 761.6,921.1 764.2,925.3 766.8,922.5 769.4,910.4 772.0,923.5 774.6,920.5 777.2,922.5 779.7,919.8 782.3,904.4 784.9,923.1 787.5,922.6 790.1,922.0 792.7,923.8 795.2,922.4 797.8,922.7 800.4,921.9 803.0,922.2 805.6,922.4 808.2,922.4 810.8,906.8 813.3,923.0 815.9,921.5 818.5,923.0 821.1,921.5 823.7,912.8 826.3,920.5 828.9,923.5 831.4,922.4 834.0,923.1 836.6,922.0 839.2,924.8 841.8,921.6 844.4,922.3 847.0,921.5 849.5,922.4 852.1,923.8 854.7,923.0 857.3,906.6 859.9,922.5 862.5,921.8 865.1,923.5 867.6,920.8 870.2,924.2 872.8,920.6 875.4,923.2 878.0,922.0 880.6,911.5 883.1,923.4 885.7,921.9 888.3,921.0 890.9,924.0 893.5,921.5 896.1,922.2 898.7,922.9 901.2,921.4 903.8,923.3 906.4,922.4 909.0,923.4" fill="none" stroke="#E5A8E2" stroke-width="1" stroke-opacity="0.8" stroke-linejoin="round"/>
<polyline points="523.8,923.1 526.4,921.5 529.0,921.2 531.6,921.6 534.1,923.8 536.7,922.1 539.3,922.0 541.9,921.3 544.5,922.4 547.1,921.5 549.7,907.5 552.2,919.6 554.8,922.0 557.4,922.4 560.0,923.6 562.6,921.3 565.2,923.1 567.7,920.5 570.3,922.5 572.9,920.6 575.5,922.3 578.1,919.3 580.7,922.2 583.3,913.8 585.8,922.9 588.4,922.4 591.0,921.6 593.6,921.2 596.2,923.1 598.8,920.4 601.4,923.4 603.9,921.4 606.5,921.2 609.1,920.9 611.7,922.9 614.3,922.1 616.9,922.8 619.5,923.9 622.0,922.0 624.6,923.1 627.2,921.8 629.8,921.2 632.4,923.1 635.0,921.0 637.6,922.7 640.1,919.9 642.7,921.9 645.3,920.9 647.9,922.2 650.5,915.9 653.1,923.0 655.6,920.4 658.2,922.3 660.8,920.1 663.4,921.6 666.0,921.6 668.6,920.8 671.2,920.3 673.7,924.1 676.3,921.5 678.9,921.8 681.5,920.5 684.1,923.1 686.7,919.7 689.3,922.3 691.8,924.0 694.4,922.4 697.0,905.4 699.6,922.0 702.2,919.2 704.8,922.2 707.4,922.2 709.9,922.3 712.5,920.9 715.1,921.2 717.7,921.8 720.3,921.5 722.9,922.7 725.4,920.8 728.0,906.1 730.6,921.4 733.2,921.8 735.8,923.6 738.4,921.8 741.0,924.2 743.5,919.7 746.1,922.0 748.7,919.4 751.3,918.2 753.9,908.3 756.5,921.7 759.1,920.4 761.6,922.5 764.2,903.9 766.8,923.0 769.4,921.1 772.0,923.0 774.6,920.8 777.2,921.4 779.7,900.6 782.3,921.6 784.9,920.6 787.5,923.5 790.1,920.9 792.7,921.7 795.2,922.1 797.8,921.6 800.4,920.1 803.0,922.6 805.6,920.2 808.2,922.8 810.8,920.8 813.3,909.4 815.9,922.4 818.5,921.9 821.1,919.2 823.7,922.2 826.3,921.2 828.9,921.7 831.4,920.2 834.0,922.2 836.6,919.2 839.2,922.9 841.8,914.1 844.4,923.3 847.0,921.3 849.5,912.3 852.1,922.4 854.7,923.5 857.3,920.1 859.9,922.7 862.5,920.3 865.1,921.0 867.6,920.0 870.2,921.1 872.8,922.4 875.4,923.9 878.0,921.9 880.6,923.1 883.1,922.2 885.7,924.2 888.3,921.0 890.9,921.2 893.5,919.6 896.1,921.5 898.7,922.6 901.2,917.4 903.8,918.3 906.4,914.1 909.0,910.0" fill="none" stroke="#6D1F62" stroke-width="1" stroke-opacity="0.8" stroke-linejoin="round"/>
<polyline points="523.8,926.3 526.4,916.3 529.0,919.5 531.6,924.0 534.1,927.6 536.7,925.0 539.3,925.1 541.9,924.1 544.5,925.7 547.1,920.5 549.7,923.9 552.2,924.8 554.8,911.6 557.4,922.2 560.0,923.5 562.6,921.1 565.2,924.8 567.7,923.7 570.3,925.2 572.9,923.8 575.5,925.6 578.1,907.9 580.7,923.0 583.3,925.0 585.8,923.4 588.4,922.4 591.0,925.7 593.6,924.9 596.2,920.5 598.8,924.5 601.4,923.6 603.9,924.4 606.5,909.0 609.1,923.8 611.7,926.3 614.3,924.2 616.9,925.2 619.5,924.0 622.0,926.5 624.6,923.0 627.2,924.5 629.8,922.3 632.4,924.4 635.0,924.3 637.6,924.3 640.1,924.2 642.7,925.3 645.3,923.9 647.9,924.4 650.5,908.6 653.1,924.5 655.6,914.6 658.2,924.5 660.8,923.1 663.4,924.2 666.0,924.5 668.6,924.2 671.2,922.6 673.7,924.4 676.3,922.9 678.9,920.9 681.5,924.2 684.1,925.5 686.7,923.2 689.3,925.5 691.8,922.9 694.4,925.2 697.0,923.3 699.6,924.4 702.2,923.1 704.8,925.5 707.4,923.0 709.9,924.5 712.5,923.7 715.1,926.0 717.7,923.7 720.3,925.3 722.9,909.1 725.4,925.5 728.0,922.5 730.6,925.2 733.2,924.4 735.8,926.0 738.4,924.4 741.0,924.5 743.5,924.5 746.1,924.6 748.7,923.3 751.3,926.2 753.9,924.5 756.5,924.9 759.1,923.0 761.6,911.3 764.2,922.2 766.8,923.3 769.4,924.2 772.0,926.1 774.6,924.5 777.2,925.9 779.7,923.2 782.3,923.3 784.9,923.6 787.5,914.3 790.1,924.3 792.7,925.6 795.2,923.5 797.8,924.4 800.4,923.8 803.0,926.6 805.6,923.6 808.2,924.3 810.8,906.9 813.3,912.0 815.9,909.8 818.5,923.9 821.1,923.4 823.7,925.2 826.3,923.0 828.9,922.7 831.4,925.2 834.0,925.0 836.6,923.9 839.2,923.2 841.8,923.9 844.4,926.5 847.0,923.1 849.5,924.9 852.1,922.7 854.7,923.7 857.3,924.6 859.9,924.3 862.5,923.5 865.1,926.3 867.6,923.0 870.2,924.9 872.8,906.8 875.4,924.0 878.0,924.7 880.6,926.0 883.1,924.3 885.7,925.2 888.3,922.8 890.9,925.6 893.5,908.9 896.1,924.6 898.7,922.9 901.2,924.4 903.8,909.8 906.4,914.7 909.0,924.5" fill="none" stroke="#70DBED" stroke-width="1" stroke-opacity="0.8" stroke-linejoin="round"/>
<polyline points="523.8,925.1 526.4,923.4 529.0,923.3 531.6,923.9 534.1,925.5 536.7,924.1 539.3,925.8 541.9,923.2 544.5,923.0 547.1,923.1 549.7,922.8 552.2,922.8 554.8,924.2 557.4,922.0 560.0,921.7 562.6,922.7 565.2,924.6 567.7,922.7 570.3,924.1 572.9,922.1 575.5,923.3 578.1,906.6 580.7,923.9 583.3,923.8 585.8,924.4 588.4,922.0 591.0,925.3 593.6,923.8 596.2,924.9 598.8,913.0 601.4,923.2 603.9,923.1 606.5,922.3 609.1,922.3 611.7,923.9 614.3,908.1 616.9,924.3 619.5,904.6 622.0,906.3 624.6,920.7 627.2,924.2 629.8,921.5 632.4,924.7 635.0,922.9 637.6,924.9 640.1,924.6 642.7,924.1 645.3,902.8 647.9,923.5 650.5,923.4 653.1,925.3 655.6,923.3 658.2,924.4 660.8,922.3 663.4,923.9 666.0,923.6 668.6,923.8 671.2,924.1 673.7,913.7 676.3,922.1 678.9,924.7 681.5,921.5 684.1,923.0 686.7,923.4 689.3,924.7 691.8,922.6 694.4,924.3 697.0,921.4 699.6,924.7 702.2,923.7 704.8,924.1 707.4,923.6 709.9,925.3 712.5,923.8 715.1,925.9 717.7,922.5 720.3,924.4 722.9,923.9 725.4,925.6 728.0,921.4 730.6,923.9 733.2,923.7 735.8,922.4 738.4,921.3 741.0,924.5 743.5,923.3 746.1,924.6 748.7,923.8 751.3,924.5 753.9,923.9 756.5,923.2 759.1,920.9 761.6,924.5 764.2,921.4 766.8,924.7 769.4,924.1 772.0,925.1 774.6,923.1 777.2,925.2 779.7,922.2 782.3,922.4 784.9,924.4 787.5,924.6 790.1,911.7 792.7,925.5 795.2,922.2 797.8,923.4 800.4,923.6 803.0,924.6 805.6,923.4 808.2,925.3 810.8,922.3 813.3,918.5 815.9,922.8 818.5,925.8 821.1,922.6 823.7,921.8 826.3,908.3 828.9,924.4 831.4,922.2 834.0,923.8 836.6,924.5 839.2,924.4 841.8,923.4 844.4,917.5 847.0,923.3 849.5,924.3 852.1,919.7 854.7,925.4 857.3,921.7 859.9,924.3 862.5,923.9 865.1,924.9 867.6,923.8 870.2,924.8 872.8,923.1 875.4,922.5 878.0,922.9 880.6,923.4 883.1,921.8 885.7,922.8 888.3,921.1 890.9,925.4 893.5,920.3 896.1,923.9 898.7,925.7 901.2,925.7 903.8,922.7 906.4,921.6 909.0,923.3" fill="none" stroke="#F9BA8F" stroke-width="1" stroke-opacity="0.8" stroke-linejoin="round"/>
<polyline points="867.6,937.0 870.2,922.8 872.8,922.6 875.4,922.4 878.0,920.5 880.6,924.1 883.1,921.8 885.7,907.6 888.3,923.6 890.9,924.7 893.5,923.5 896.1,924.5 898.7,919.7 901.2,925.2 903.8,911.7 906.4,924.9 909.0,922.1" fill="none" stroke="#37872D" stroke-width="1" stroke-opacity="0.8" stroke-linejoin="round"/>
<polyline points="523.8,922.0 526.4,921.4 529.0,922.9 531.6,920.4 534.1,923.7 536.7,920.2 539.3,923.0 541.9,921.5 544.5,922.4 547.1,921.7 549.7,922.7 552.2,922.8 554.8,923.4 557.4,921.9 560.0,923.1 562.6,921.1 565.2,917.2 567.7,901.3 570.3,923.0 572.9,921.3 575.5,922.9 578.1,920.5 580.7,907.7 583.3,921.2 585.8,922.4 588.4,921.3 591.0,923.3 593.6,918.8 596.2,924.8 598.8,921.1 601.4,922.6 603.9,921.1 606.5,918.1 609.1,920.4 611.7,922.3 614.3,922.4 616.9,922.6 619.5,922.2 622.0,922.8 624.6,923.1 627.2,924.7 629.8,921.8 632.4,923.0 635.0,920.6 637.6,921.6 640.1,922.3 642.7,923.4 645.3,921.2 647.9,922.5 650.5,922.2 653.1,901.7 655.6,920.6 658.2,908.2 660.8,921.1 663.4,918.1 666.0,921.9 668.6,923.2 671.2,908.6 673.7,921.7 676.3,919.5 678.9,922.5 681.5,922.3 684.1,908.3 686.7,908.4 689.3,924.4 691.8,922.7 694.4,922.4 697.0,904.6 699.6,923.1 702.2,922.5 704.8,922.1 707.4,919.4 709.9,922.1 712.5,907.0 715.1,924.8 717.7,921.3 720.3,922.1 722.9,921.5 725.4,924.1 728.0,909.3 730.6,923.9 733.2,913.3 735.8,922.2 738.4,920.9 741.0,922.1 743.5,921.8 746.1,922.5 748.7,921.9 751.3,923.7 753.9,912.6 756.5,923.0 759.1,920.7 761.6,921.7 764.2,919.4 766.8,922.4 769.4,922.7 772.0,923.7 774.6,921.7 777.2,911.1 779.7,922.7 782.3,922.6 784.9,920.9 787.5,921.8 790.1,906.0 792.7,922.4 795.2,922.7 797.8,922.1 800.4,922.1 803.0,923.5 805.6,922.3 808.2,924.7 810.8,914.3 813.3,922.4 815.9,920.2 818.5,923.9 821.1,920.5 823.7,922.6 826.3,921.1 828.9,922.9 831.4,920.0 834.0,923.2 836.6,920.2 839.2,924.7 841.8,921.8 844.4,921.3 847.0,923.3 849.5,924.4 852.1,921.2 854.7,922.8 857.3,923.0 859.9,921.3 862.5,923.2 865.1,925.7 867.6,919.3 870.2,924.2 872.8,919.8 875.4,923.5 878.0,913.7 880.6,924.0 883.1,923.4 885.7,919.9 888.3,921.2 890.9,922.6 893.5,920.8 896.1,923.8 898.7,921.5 901.2,923.3 903.8,921.9 906.4,923.9 909.0,921.8" fill="none" stroke="#AEA2E0" stroke-width="1" stroke-opacity="0.8" stroke-linejoin="round"/>
<polyline points="523.8,923.0 526.4,921.5 529.0,920.7 531.6,901.2 534.1,922.3 536.7,922.0 539.3,922.6 541.9,910.1 544.5,922.0 547.1,919.5 549.7,913.3 552.2,919.6 554.8,917.5 557.4,920.8 560.0,923.3 562.6,921.5 565.2,921.5 567.7,921.2 570.3,922.6 572.9,921.1 575.5,910.6 578.1,921.6 580.7,922.9 583.3,921.9 585.8,922.0 588.4,921.5 591.0,923.6 593.6,920.9 596.2,922.5 598.8,919.4 601.4,922.4 603.9,918.8 606.5,923.0 609.1,922.4 611.7,922.3 614.3,922.1 616.9,923.3 619.5,921.7 622.0,922.6 624.6,919.9 627.2,922.9 629.8,921.5 632.4,913.0 635.0,920.2 637.6,922.5 640.1,921.8 642.7,922.5 645.3,920.6 647.9,922.9 650.5,921.1 653.1,921.7 655.6,923.8 658.2,922.5 660.8,921.4 663.4,921.0 666.0,920.0 668.6,923.1 671.2,921.8 673.7,920.9 676.3,920.1 678.9,922.2 681.5,921.1 684.1,921.5 686.7,920.9 689.3,922.9 691.8,921.3 694.4,914.1 697.0,903.4 699.6,923.1 702.2,921.2 704.8,921.7 707.4,922.0 709.9,922.5 712.5,910.4 715.1,920.8 717.7,904.5 720.3,923.8 722.9,921.3 725.4,922.0 728.0,921.2 730.6,921.0 733.2,919.0 735.8,923.5 738.4,921.2 741.0,922.2 743.5,920.5 746.1,921.6 748.7,919.1 751.3,923.3 753.9,920.7 756.5,923.5 759.1,922.6 761.6,921.0 764.2,921.6 766.8,917.0 769.4,919.8 772.0,922.9 774.6,919.6 777.2,920.0 779.7,922.6 782.3,921.6 784.9,919.9 787.5,921.2 790.1,900.6 792.7,921.6 795.2,922.7 797.8,922.4 800.4,920.9 803.0,922.0 805.6,920.2 808.2,922.4 810.8,919.3 813.3,913.5 815.9,920.3 818.5,909.5 821.1,921.2 823.7,921.6 826.3,901.4 828.9,922.7 831.4,920.3 834.0,923.8 836.6,921.5 839.2,923.3 841.8,921.0 844.4,922.7 847.0,922.2 849.5,904.8 852.1,920.8 854.7,923.0 857.3,921.0 859.9,922.1 862.5,921.2 865.1,921.9 867.6,922.4 870.2,923.2 872.8,923.2 875.4,922.1 878.0,920.7 880.6,922.5 883.1,922.2 885.7,922.3 888.3,920.7 890.9,922.3 893.5,921.2 896.1,924.1 898.7,921.6 901.2,922.6 903.8,924.0 906.4,922.7 909.0,919.5" fill="none" stroke="#F2CC0C" stroke-width="1" stroke-opacity="0.8" stroke-linejoin="round"/>
<polyline points="523.8,916.9 526.4,923.2 529.0,926.1 531.6,924.2 534.1,926.0 536.7,922.7 539.3,914.8 541.9,922.8 544.5,923.6 547.1,922.4 549.7,909.0 552.2,923.3 554.8,923.9 557.4,923.6 560.0,923.0 562.6,923.5 565.2,923.9 567.7,923.6 570.3,925.0 572.9,922.7 575.5,924.9 578.1,921.8 580.7,923.9 583.3,922.8 585.8,924.1 588.4,926.2 591.0,926.3 593.6,924.1 596.2,924.9 598.8,922.4 601.4,925.4 603.9,923.7 606.5,917.8 609.1,924.8 611.7,923.7 614.3,924.5 616.9,924.6 619.5,924.3 622.0,925.6 624.6,924.3 627.2,920.3 629.8,924.9 632.4,924.7 635.0,921.7 637.6,924.8 640.1,922.9 642.7,923.7 645.3,910.0 647.9,925.6 650.5,921.6 653.1,926.3 655.6,922.9 658.2,924.4 660.8,925.3 663.4,926.1 666.0,923.3 668.6,925.0 671.2,923.6 673.7,924.8 676.3,907.8 678.9,915.8 681.5,925.6 684.1,925.3 686.7,924.4 689.3,925.8 691.8,924.5 694.4,923.9 697.0,907.4 699.6,924.4 702.2,924.7 704.8,915.2 707.4,923.0 709.9,923.9 712.5,923.3 715.1,925.9 717.7,925.4 720.3,925.2 722.9,922.3 725.4,927.9 728.0,922.1 730.6,924.3 733.2,924.8 735.8,926.2 738.4,922.7 741.0,925.2 743.5,922.2 746.1,926.2 748.7,923.5 751.3,924.9 753.9,922.8 756.5,912.1 759.1,924.8 761.6,923.2 764.2,923.8 766.8,924.8 769.4,924.6 772.0,924.8 774.6,923.3 777.2,924.8 779.7,922.8 782.3,926.2 784.9,924.1 787.5,925.7 790.1,907.1 792.7,922.9 795.2,925.3 797.8,924.3 800.4,924.0 803.0,911.3 805.6,922.9 808.2,909.6 810.8,921.7 813.3,923.9 815.9,923.8 818.5,926.5 821.1,922.3 823.7,924.3 826.3,916.8 828.9,924.7 831.4,924.0 834.0,923.0 836.6,923.8 839.2,925.1 841.8,923.6 844.4,924.8 847.0,922.7 849.5,926.2 852.1,923.1 854.7,924.6 857.3,925.1 859.9,924.6 862.5,923.8 865.1,924.5 867.6,922.3 870.2,924.5 872.8,923.0 875.4,925.5 878.0,923.4 880.6,924.8 883.1,923.6 885.7,924.3 888.3,923.0 890.9,924.5 893.5,923.4 896.1,923.9 898.7,923.9 901.2,925.2 903.8,922.4 906.4,925.8 909.0,923.4" fill="none" stroke="#1F60C4" stroke-width="1" stroke-opacity="0.8" stroke-linejoin="round"/>
<polyline points="523.8,923.6 526.4,923.9 529.0,925.9 531.6,924.0 534.1,925.2 536.7,923.7 539.3,925.0 541.9,922.5 544.5,924.2 547.1,921.5 549.7,924.7 552.2,922.7 554.8,912.4 557.4,922.1 560.0,924.4 562.6,922.0 565.2,923.0 567.7,922.7 570.3,922.3 572.9,923.8 575.5,923.6 578.1,924.2 580.7,906.1 583.3,923.6 585.8,923.7 588.4,921.6 591.0,925.2 593.6,922.0 596.2,922.2 598.8,921.4 601.4,925.1 603.9,923.2 606.5,925.5 609.1,923.1 611.7,924.0 614.3,922.5 616.9,924.8 619.5,925.4 622.0,925.4 624.6,907.5 627.2,923.6 629.8,923.2 632.4,924.8 635.0,923.4 637.6,922.4 640.1,921.4 642.7,909.6 645.3,923.1 647.9,915.3 650.5,910.9 653.1,925.0 655.6,920.6 658.2,925.4 660.8,912.6 663.4,924.9 666.0,921.9 668.6,924.0 671.2,922.0 673.7,923.6 676.3,922.9 678.9,924.2 681.5,922.3 684.1,925.9 686.7,923.2 689.3,923.6 691.8,922.5 694.4,924.3 697.0,922.5 699.6,926.0 702.2,914.8 704.8,905.6 707.4,921.6 709.9,925.3 712.5,921.5 715.1,927.0 717.7,911.1 720.3,924.9 722.9,904.2 725.4,924.6 728.0,922.2 730.6,924.7 733.2,920.7 735.8,924.1 738.4,922.4 741.0,925.7 743.5,909.4 746.1,924.2 748.7,921.9 751.3,924.2 753.9,923.5 756.5,922.5 759.1,923.1 761.6,924.6 764.2,925.1 766.8,925.5 769.4,922.1 772.0,926.1 774.6,922.1 777.2,923.2 779.7,922.3 782.3,923.3 784.9,922.6 787.5,925.8 790.1,923.7 792.7,924.4 795.2,923.6 797.8,924.1 800.4,921.9 803.0,924.0 805.6,924.8 808.2,925.6 810.8,922.2 813.3,923.7 815.9,924.1 818.5,922.6 821.1,924.7 823.7,925.5 826.3,922.4 828.9,923.4 831.4,923.2 834.0,919.9 836.6,923.2 839.2,923.2 841.8,922.1 844.4,924.3 847.0,904.0 849.5,923.6 852.1,924.1 854.7,924.3 857.3,923.6 859.9,925.0 862.5,923.3 865.1,923.6 867.6,923.4 870.2,924.4 872.8,921.3 875.4,924.2 878.0,922.6 880.6,923.5 883.1,923.6 885.7,923.2 888.3,925.2 890.9,924.6 893.5,922.3 896.1,923.8 898.7,923.4 901.2,912.9 903.8,921.7 906.4,924.6 909.0,922.7" fill="none" stroke="#F29191" stroke-width="1" stroke-opacity="0.8" stroke-linejoin="round"/>
<polyline points="523.8,922.6 526.4,922.8 529.0,907.4 531.6,922.0 534.1,921.8 536.7,923.3 539.3,926.4 541.9,923.2 544.5,924.4 547.1,921.9 549.7,924.5 552.2,921.7 554.8,923.4 557.4,921.1 560.0,925.3 562.6,922.2 565.2,920.4 567.7,923.1 570.3,924.7 572.9,921.8 575.5,924.2 578.1,922.4 580.7,924.5 583.3,922.0 585.8,925.6 588.4,922.9 591.0,923.6 593.6,921.5 596.2,924.5 598.8,920.8 601.4,924.2 603.9,922.8 606.5,925.0 609.1,921.1 611.7,921.2 614.3,922.8 616.9,925.4 619.5,921.6 622.0,923.9 624.6,923.5 627.2,922.7 629.8,904.0 632.4,923.5 635.0,922.8 637.6,924.0 640.1,922.0 642.7,925.8 645.3,921.3 647.9,923.8 650.5,922.5 653.1,923.9 655.6,922.3 658.2,924.5 660.8,923.1 663.4,923.6 666.0,909.4 668.6,923.7 671.2,924.3 673.7,924.1 676.3,921.5 678.9,925.5 681.5,921.7 684.1,922.0 686.7,921.4 689.3,923.8 691.8,921.8 694.4,922.7 697.0,915.0 699.6,912.6 702.2,921.9 704.8,908.0 707.4,923.0 709.9,924.7 712.5,923.1 715.1,924.4 717.7,922.8 720.3,923.9 722.9,922.6 725.4,905.7 728.0,920.9 730.6,925.9 733.2,921.6 735.8,922.1 738.4,922.9 741.0,923.0 743.5,922.9 746.1,923.6 748.7,922.0 751.3,923.9 753.9,922.5 756.5,923.2 759.1,923.1 761.6,925.5 764.2,922.3 766.8,922.1 769.4,923.3 772.0,925.3 774.6,921.7 777.2,923.0 779.7,923.0 782.3,923.3 784.9,923.6 787.5,916.9 790.1,923.7 792.7,922.1 795.2,922.8 797.8,923.6 800.4,921.4 803.0,922.7 805.6,921.3 808.2,923.6 810.8,924.3 813.3,919.8 815.9,921.6 818.5,924.6 821.1,904.7 823.7,922.1 826.3,920.1 828.9,923.4 831.4,920.4 834.0,922.4 836.6,923.6 839.2,923.3 841.8,923.9 844.4,923.8 847.0,922.4 849.5,911.7 852.1,922.4 854.7,923.7 857.3,902.8 859.9,924.6 862.5,924.7 865.1,924.0 867.6,922.7 870.2,925.1 872.8,920.5 875.4,923.7 878.0,921.2 880.6,923.7 883.1,921.8 885.7,923.8 888.3,920.1 890.9,923.1 893.5,921.6 896.1,925.4 898.7,922.5 901.2,923.7 903.8,923.0 906.4,923.7 909.0,922.8" fill="none" stroke="#C4162A" stroke-width="1" stroke-opacity="0.8" stroke-linejoin="round"/>
<polyline points="523.8,923.7 526.4,920.7 529.0,923.1 531.6,920.7 534.1,922.5 536.7,920.6 539.3,923.1 541.9,919.1 544.5,924.0 547.1,915.4 549.7,922.7 552.2,922.2 554.8,922.8 557.4,922.1 560.0,921.9 562.6,920.4 565.2,923.0 567.7,921.8 570.3,905.3 572.9,921.4 575.5,905.8 578.1,922.6 580.7,923.6 583.3,921.8 585.8,922.1 588.4,920.7 591.0,924.0 593.6,922.4 596.2,924.3 598.8,923.1 601.4,922.4 603.9,921.1 606.5,922.4 609.1,920.1 611.7,923.0 614.3,921.4 616.9,924.7 619.5,920.8 622.0,921.6 624.6,919.7 627.2,923.5 629.8,921.9 632.4,922.5 635.0,921.8 637.6,923.4 640.1,922.1 642.7,921.6 645.3,921.8 647.9,903.0 650.5,921.3 653.1,922.9 655.6,903.8 658.2,910.4 660.8,921.3 663.4,903.9 666.0,921.4 668.6,922.4 671.2,922.7 673.7,924.8 676.3,920.5 678.9,922.8 681.5,922.3 684.1,922.4 686.7,922.0 689.3,922.8 691.8,921.5 694.4,921.8 697.0,922.6 699.6,923.1 702.2,906.0 704.8,905.2 707.4,921.0 709.9,904.1 712.5,920.2 715.1,923.4 717.7,914.9 720.3,906.5 722.9,922.5 725.4,923.3 728.0,921.9 730.6,909.2 733.2,905.8 735.8,921.9 738.4,921.0 741.0,923.6 743.5,920.8 746.1,921.3 748.7,920.7 751.3,923.1 753.9,909.5 756.5,922.9 759.1,922.6 761.6,924.7 764.2,922.4 766.8,921.8 769.4,923.7 772.0,924.5 774.6,920.2 777.2,923.5 779.7,921.4 782.3,923.0 784.9,921.1 787.5,922.6 790.1,921.8 792.7,922.4 795.2,922.8 797.8,922.6 800.4,922.0 803.0,922.1 805.6,921.8 808.2,924.2 810.8,920.8 813.3,921.8 815.9,924.0 818.5,922.4 821.1,921.4 823.7,924.9 826.3,900.2 828.9,921.8 831.4,920.6 834.0,924.0 836.6,919.7 839.2,923.1 841.8,921.9 844.4,914.4 847.0,923.0 849.5,922.6 852.1,922.9 854.7,922.6 857.3,922.4 859.9,923.2 862.5,922.7 865.1,921.2 867.6,921.6 870.2,923.4 872.8,923.1 875.4,905.0 878.0,921.2 880.6,923.2 883.1,908.2 885.7,924.2 888.3,911.7 890.9,922.4 893.5,920.6 896.1,923.4 898.7,919.1 901.2,923.7 903.8,923.5 906.4,922.5 909.0,907.5" fill="none" stroke="#B877D9" stroke-width="1" stroke-opacity="0.8" stroke-linejoin="round"/>
<polyline points="523.8,922.0 526.4,922.2 529.0,922.4 531.6,921.4 534.1,921.4 536.7,922.3 539.3,904.9 541.9,921.9 544.5,921.5 547.1,921.0 549.7,923.1 552.2,922.1 554.8,922.8 557.4,920.7 560.0,923.2 562.6,920.5 565.2,923.3 567.7,920.1 570.3,916.3 572.9,910.4 575.5,923.4 578.1,922.2 580.7,904.6 583.3,920.7 585.8,921.2 588.4,919.8 591.0,923.1 593.6,921.8 596.2,920.7 598.8,922.6 601.4,922.6 603.9,921.4 606.5,914.1 609.1,908.7 611.7,921.2 614.3,921.6 616.9,922.7 619.5,920.9 622.0,920.0 624.6,921.9 627.2,921.6 629.8,920.6 632.4,920.6 635.0,922.0 637.6,922.0 640.1,923.1 642.7,921.9 645.3,920.8 647.9,922.1 650.5,921.8 653.1,921.1 655.6,920.4 658.2,923.8 660.8,920.0 663.4,921.1 666.0,919.8 668.6,923.1 671.2,919.2 673.7,922.3 676.3,921.5 678.9,923.0 681.5,921.8 684.1,923.2 686.7,919.0 689.3,923.6 691.8,920.0 694.4,923.6 697.0,921.3 699.6,922.2 702.2,921.4 704.8,922.8 707.4,921.6 709.9,923.4 712.5,920.7 715.1,921.8 717.7,919.4 720.3,912.9 722.9,920.9 725.4,922.5 728.0,913.8 730.6,921.8 733.2,921.5 735.8,922.1 738.4,921.5 741.0,923.2 743.5,922.5 746.1,922.9 748.7,920.4 751.3,922.8 753.9,921.0 756.5,924.4 759.1,920.5 761.6,908.0 764.2,922.8 766.8,922.0 769.4,921.7 772.0,922.5 774.6,921.8 777.2,921.7 779.7,920.9 782.3,923.3 784.9,919.7 787.5,922.1 790.1,920.6 792.7,921.1 795.2,921.8 797.8,922.2 800.4,909.1 803.0,914.2 805.6,922.1 808.2,922.0 810.8,920.7 813.3,911.8 815.9,920.6 818.5,909.1 821.1,919.5 823.7,924.3 826.3,921.3 828.9,903.9 831.4,922.2 834.0,915.9 836.6,923.2 839.2,922.6 841.8,920.3 844.4,923.5 847.0,921.2 849.5,922.7 852.1,906.3 854.7,922.2 857.3,921.2 859.9,920.8 862.5,919.4 865.1,921.9 867.6,921.1 870.2,921.2 872.8,920.5 875.4,923.4 878.0,920.8 880.6,914.4 883.1,921.3 885.7,921.0 888.3,922.6 890.9,922.3 893.5,921.0 896.1,924.6 898.7,920.0 901.2,923.1 903.8,922.4 906.4,923.2 909.0,921.2" fill="none" stroke="#96D98D" stroke-width="1" stroke-opacity="0.8" stroke-linejoin="round"/>
<line x1="981.6" y1="937.5" x2="1367" y2="937.5" stroke="#e6e7e8" stroke-width="1"/>
<line x1="981.6" y1="896.5" x2="1367" y2="896.5" stroke="#e6e7e8" stroke-width="1"/>
<line x1="981.6" y1="856.5" x2="1367" y2="856.5" stroke="#e6e7e8" stroke-width="1"/>
<line x1="1022.5" y1="831" x2="1022.5" y2="941" stroke="#e6e7e8" stroke-width="1"/>
<line x1="1087.5" y1="831" x2="1087.5" y2="941" stroke="#e6e7e8" stroke-width="1"/>
<line x1="1151.5" y1="831" x2="1151.5" y2="941" stroke="#e6e7e8" stroke-width="1"/>
<line x1="1215.5" y1="831" x2="1215.5" y2="941" stroke="#e6e7e8" stroke-width="1"/>
<line x1="1279.5" y1="831" x2="1279.5" y2="941" stroke="#e6e7e8" stroke-width="1"/>
<line x1="1343.5" y1="831" x2="1343.5" y2="941" stroke="#e6e7e8" stroke-width="1"/>
<polyline points="981.6,906.7 984.2,903.1 986.8,908.0 989.4,896.8 991.9,905.1 994.5,903.3 997.1,902.0 999.7,895.4 1002.3,903.5 1004.9,898.5 1007.5,905.5 1010.1,901.9 1012.6,911.4 1015.2,898.3 1017.8,903.9 1020.4,900.4 1023.0,899.0 1025.6,903.2 1028.2,907.8 1030.7,903.2 1033.3,904.4 1035.9,903.2 1038.5,909.2 1041.1,897.5 1043.7,904.7 1046.3,898.6 1048.9,904.8 1051.4,898.3 1054.0,904.1 1056.6,906.2 1059.2,906.0 1061.8,894.0 1064.4,907.5 1067.0,901.0 1069.5,902.4 1072.1,899.7 1074.7,904.2 1077.3,900.5 1079.9,903.9 1082.5,869.9 1085.1,903.6 1087.6,904.2 1090.2,906.0 1092.8,900.4 1095.4,907.7 1098.0,900.3 1100.6,899.7 1103.2,899.1 1105.8,902.4 1108.3,901.8 1110.9,911.5 1113.5,901.1 1116.1,909.0 1118.7,901.2 1121.3,914.2 1123.9,902.5 1126.4,912.3 1129.0,901.4 1131.6,910.8 1134.2,896.7 1136.8,904.1 1139.4,895.2 1142.0,908.7 1144.6,893.4 1147.1,906.7 1149.7,894.8 1152.3,910.5 1154.9,902.8 1157.5,903.3 1160.1,898.1 1162.7,913.1 1165.2,898.7 1167.8,906.5 1170.4,896.7 1173.0,908.3 1175.6,906.4 1178.2,907.0 1180.8,903.6 1183.4,910.7 1185.9,900.8 1188.5,898.0 1191.1,898.3 1193.7,907.1 1196.3,851.6 1198.9,912.4 1201.5,900.5 1204.0,911.0 1206.6,898.4 1209.2,915.5 1211.8,908.6 1214.4,905.0 1217.0,903.3 1219.6,903.9 1222.2,901.7 1224.7,903.8 1227.3,898.4 1229.9,909.8 1232.5,895.4 1235.1,907.1 1237.7,901.9 1240.3,909.0 1242.8,905.3 1245.4,909.4 1248.0,907.0 1250.6,911.8 1253.2,902.9 1255.8,901.3 1258.4,908.0 1261.0,910.3 1263.5,899.2 1266.1,907.7 1268.7,904.9 1271.3,902.9 1273.9,904.3 1276.5,908.2 1279.1,898.5 1281.6,905.9 1284.2,863.2 1286.8,900.9 1289.4,907.4 1292.0,902.1 1294.6,896.0 1297.2,914.1 1299.7,901.0 1302.3,905.6 1304.9,905.8 1307.5,915.0 1310.1,899.9 1312.7,904.6 1315.3,896.5 1317.9,902.9 1320.4,903.6 1323.0,903.6 1325.6,892.1 1328.2,910.0 1330.8,904.2 1333.4,907.3 1336.0,899.0 1338.5,903.4 1341.1,907.2 1343.7,910.3 1346.3,897.2 1348.9,911.7 1351.5,907.2 1354.1,905.2 1356.7,900.9 1359.2,907.6 1361.8,907.2 1364.4,909.6 1367.0,906.1" fill="none" stroke="#56A64B" stroke-width="1" stroke-opacity="0.8" stroke-linejoin="round"/>
<polyline points="981.6,912.4 984.2,895.8 986.8,904.2 989.4,888.6 991.9,909.9 994.5,903.1 997.1,917.7 999.7,896.3 1002.3,903.3 1004.9,894.6 1007.5,902.4 1010.1,901.2 1012.6,901.7 1015.2,896.4 1017.8,906.6 1020.4,898.6 1023.0,907.9 1025.6,901.4 1028.2,910.4 1030.7,905.5 1033.3,907.5 1035.9,898.1 1038.5,898.0 1041.1,898.0 1043.7,905.6 1046.3,905.3 1048.9,902.6 1051.4,903.0 1054.0,903.3 1056.6,900.7 1059.2,906.7 1061.8,900.0 1064.4,904.7 1067.0,898.6 1069.5,911.4 1072.1,900.3 1074.7,906.5 1077.3,892.5 1079.9,909.9 1082.5,863.3 1085.1,908.7 1087.6,896.7 1090.2,903.4 1092.8,906.7 1095.4,909.1 1098.0,903.1 1100.6,907.0 1103.2,906.2 1105.8,901.6 1108.3,898.3 1110.9,905.7 1113.5,893.6 1116.1,904.3 1118.7,900.0 1121.3,908.8 1123.9,900.3 1126.4,901.8 1129.0,898.8 1131.6,908.4 1134.2,905.0 1136.8,906.8 1139.4,898.7 1142.0,907.3 1144.6,900.0 1147.1,900.9 1149.7,900.0 1152.3,907.2 1154.9,902.3 1157.5,907.5 1160.1,905.3 1162.7,906.1 1165.2,902.9 1167.8,909.9 1170.4,903.8 1173.0,906.9 1175.6,891.7 1178.2,906.4 1180.8,901.5 1183.4,900.0 1185.9,907.5 1188.5,907.9 1191.1,903.0 1193.7,902.9 1196.3,897.5 1198.9,912.1 1201.5,899.2 1204.0,907.8 1206.6,906.3 1209.2,908.2 1211.8,903.4 1214.4,908.7 1217.0,908.5 1219.6,906.8 1222.2,895.8 1224.7,884.5 1227.3,895.1 1229.9,908.8 1232.5,900.4 1235.1,904.1 1237.7,892.3 1240.3,911.3 1242.8,902.3 1245.4,910.7 1248.0,906.1 1250.6,899.1 1253.2,900.3 1255.8,913.9 1258.4,898.3 1261.0,902.3 1263.5,897.5 1266.1,914.3 1268.7,905.3 1271.3,915.3 1273.9,908.7 1276.5,904.4 1279.1,897.3 1281.6,901.8 1284.2,885.5 1286.8,866.2 1289.4,903.5 1292.0,911.4 1294.6,900.3 1297.2,891.4 1299.7,899.0 1302.3,912.4 1304.9,898.2 1307.5,910.3 1310.1,891.4 1312.7,904.5 1315.3,900.2 1317.9,908.7 1320.4,897.7 1323.0,905.0 1325.6,900.5 1328.2,909.0 1330.8,899.8 1333.4,903.8 1336.0,896.8 1338.5,888.0 1341.1,901.2 1343.7,909.1 1346.3,902.8 1348.9,909.9 1351.5,903.1 1354.1,907.6 1356.7,898.7 1359.2,906.8 1361.8,900.1 1364.4,904.9 1367.0,899.6" fill="none" stroke="#E0B400" stroke-width="1" stroke-opacity="0.8" stroke-linejoin="round"/>
<polyline points="981.6,903.1 984.2,904.7 986.8,909.7 989.4,907.0 991.9,902.1 994.5,902.3 997.1,908.3 999.7,909.9 1002.3,906.5 1004.9,895.8 1007.5,906.0 1010.1,902.6 1012.6,904.6 1015.2,904.4 1017.8,910.1 1020.4,897.5 1023.0,909.7 1025.6,899.8 1028.2,909.0 1030.7,894.1 1033.3,910.1 1035.9,896.0 1038.5,906.8 1041.1,905.3 1043.7,906.6 1046.3,902.9 1048.9,913.6 1051.4,903.9 1054.0,915.9 1056.6,902.9 1059.2,871.3 1061.8,858.5 1064.4,915.9 1067.0,903.6 1069.5,908.5 1072.1,897.7 1074.7,907.7 1077.3,902.4 1079.9,909.2 1082.5,900.3 1085.1,903.4 1087.6,898.3 1090.2,908.7 1092.8,900.4 1095.4,903.3 1098.0,896.4 1100.6,911.2 1103.2,895.4 1105.8,908.6 1108.3,902.5 1110.9,912.1 1113.5,896.4 1116.1,902.7 1118.7,902.4 1121.3,905.2 1123.9,900.0 1126.4,907.7 1129.0,897.8 1131.6,911.9 1134.2,902.8 1136.8,905.4 1139.4,901.1 1142.0,913.8 1144.6,899.9 1147.1,911.9 1149.7,900.2 1152.3,913.7 1154.9,904.5 1157.5,906.3 1160.1,895.4 1162.7,908.3 1165.2,897.4 1167.8,903.4 1170.4,910.8 1173.0,910.0 1175.6,894.7 1178.2,903.4 1180.8,907.1 1183.4,913.9 1185.9,902.6 1188.5,911.0 1191.1,904.8 1193.7,905.4 1196.3,893.7 1198.9,906.3 1201.5,897.4 1204.0,904.6 1206.6,909.4 1209.2,905.6 1211.8,905.0 1214.4,910.8 1217.0,899.5 1219.6,911.9 1222.2,899.4 1224.7,910.6 1227.3,898.2 1229.9,901.5 1232.5,894.5 1235.1,906.7 1237.7,899.3 1240.3,905.2 1242.8,902.5 1245.4,910.9 1248.0,880.0 1250.6,909.8 1253.2,902.3 1255.8,907.6 1258.4,899.9 1261.0,908.3 1263.5,907.2 1266.1,907.2 1268.7,903.1 1271.3,907.4 1273.9,902.9 1276.5,904.3 1279.1,893.7 1281.6,899.9 1284.2,900.3 1286.8,906.6 1289.4,904.6 1292.0,913.0 1294.6,902.0 1297.2,910.9 1299.7,904.6 1302.3,909.3 1304.9,901.3 1307.5,906.3 1310.1,900.7 1312.7,901.5 1315.3,896.3 1317.9,901.4 1320.4,900.7 1323.0,861.7 1325.6,902.4 1328.2,910.1 1330.8,904.0 1333.4,910.5 1336.0,904.1 1338.5,907.9 1341.1,899.6 1343.7,905.2 1346.3,905.2 1348.9,907.3 1351.5,901.5 1354.1,907.3 1356.7,905.6 1359.2,911.0 1361.8,896.2 1364.4,907.9 1367.0,900.4" fill="none" stroke="#5794F2" stroke-width="1" stroke-opacity="0.8" stroke-linejoin="round"/>
<polyline points="981.6,895.8 984.2,900.4 986.8,914.7 989.4,896.1 991.9,913.2 994.5,899.5 997.1,908.9 999.7,896.8 1002.3,910.4 1004.9,889.1 1007.5,902.7 1010.1,904.9 1012.6,910.2 1015.2,893.5 1017.8,900.7 1020.4,894.7 1023.0,901.2 1025.6,898.1 1028.2,910.5 1030.7,902.8 1033.3,896.1 1035.9,901.2 1038.5,909.9 1041.1,898.7 1043.7,905.5 1046.3,899.4 1048.9,910.7 1051.4,897.6 1054.0,912.9 1056.6,893.4 1059.2,905.0 1061.8,903.0 1064.4,903.4 1067.0,874.0 1069.5,897.1 1072.1,899.6 1074.7,905.4 1077.3,894.2 1079.9,906.1 1082.5,907.2 1085.1,909.2 1087.6,895.6 1090.2,903.0 1092.8,893.8 1095.4,910.7 1098.0,902.9 1100.6,907.4 1103.2,904.7 1105.8,908.2 1108.3,902.6 1110.9,900.0 1113.5,896.8 1116.1,898.9 1118.7,892.9 1121.3,904.5 1123.9,897.1 1126.4,904.6 1129.0,894.9 1131.6,901.0 1134.2,905.0 1136.8,903.0 1139.4,894.9 1142.0,907.1 1144.6,901.7 1147.1,903.1 1149.7,898.9 1152.3,905.0 1154.9,905.8 1157.5,913.0 1160.1,900.8 1162.7,906.8 1165.2,900.1 1167.8,904.6 1170.4,897.9 1173.0,905.9 1175.6,901.0 1178.2,904.7 1180.8,898.6 1183.4,909.1 1185.9,897.7 1188.5,903.5 1191.1,904.9 1193.7,909.0 1196.3,902.6 1198.9,913.9 1201.5,904.6 1204.0,902.8 1206.6,903.3 1209.2,901.3 1211.8,899.9 1214.4,908.9 1217.0,902.7 1219.6,912.4 1222.2,899.6 1224.7,913.0 1227.3,900.6 1229.9,908.2 1232.5,898.2 1235.1,909.2 1237.7,904.0 1240.3,908.2 1242.8,904.8 1245.4,909.0 1248.0,905.1 1250.6,913.0 1253.2,904.1 1255.8,906.6 1258.4,895.0 1261.0,904.4 1263.5,893.4 1266.1,909.5 1268.7,898.5 1271.3,905.2 1273.9,896.6 1276.5,905.9 1279.1,904.6 1281.6,915.3 1284.2,900.0 1286.8,909.5 1289.4,898.9 1292.0,903.9 1294.6,899.0 1297.2,905.4 1299.7,900.2 1302.3,904.7 1304.9,899.1 1307.5,909.3 1310.1,899.9 1312.7,909.9 1315.3,898.6 1317.9,900.1 1320.4,900.4 1323.0,899.6 1325.6,904.1 1328.2,899.6 1330.8,900.9 1333.4,895.4 1336.0,898.8 1338.5,904.3 1341.1,912.2 1343.7,910.1 1346.3,901.9 1348.9,909.8 1351.5,904.2 1354.1,911.2 1356.7,904.4 1359.2,906.9 1361.8,904.0 1364.4,904.6 1367.0,906.2" fill="none" stroke="#FF780A" stroke-width="1" stroke-opacity="0.8" stroke-linejoin="round"/>
<polyline points="981.6,906.9 984.2,896.8 986.8,903.5 989.4,897.4 991.9,913.5 994.5,895.8 997.1,906.9 999.7,900.2 1002.3,904.9 1004.9,896.6 1007.5,902.2 1010.1,898.0 1012.6,903.2 1015.2,871.6 1017.8,906.8 1020.4,898.0 1023.0,904.0 1025.6,900.8 1028.2,904.0 1030.7,896.9 1033.3,908.9 1035.9,903.6 1038.5,907.6 1041.1,896.3 1043.7,909.9 1046.3,897.8 1048.9,912.5 1051.4,908.9 1054.0,911.6 1056.6,908.6 1059.2,901.8 1061.8,911.8 1064.4,912.5 1067.0,901.7 1069.5,909.2 1072.1,903.5 1074.7,907.3 1077.3,896.5 1079.9,906.7 1082.5,896.9 1085.1,904.4 1087.6,899.4 1090.2,914.0 1092.8,902.0 1095.4,908.8 1098.0,904.6 1100.6,902.9 1103.2,899.3 1105.8,912.4 1108.3,899.9 1110.9,901.9 1113.5,887.6 1116.1,911.1 1118.7,902.4 1121.3,899.8 1123.9,906.3 1126.4,909.1 1129.0,900.7 1131.6,908.0 1134.2,907.1 1136.8,906.9 1139.4,907.1 1142.0,903.1 1144.6,905.5 1147.1,903.2 1149.7,902.2 1152.3,905.0 1154.9,894.7 1157.5,884.7 1160.1,907.7 1162.7,907.2 1165.2,891.7 1167.8,886.6 1170.4,900.9 1173.0,909.3 1175.6,900.3 1178.2,906.8 1180.8,896.9 1183.4,903.2 1185.9,901.3 1188.5,878.1 1191.1,914.0 1193.7,912.9 1196.3,903.1 1198.9,909.6 1201.5,902.8 1204.0,910.7 1206.6,904.6 1209.2,909.3 1211.8,899.7 1214.4,905.7 1217.0,896.2 1219.6,906.3 1222.2,904.7 1224.7,901.2 1227.3,892.1 1229.9,908.3 1232.5,900.0 1235.1,909.1 1237.7,900.0 1240.3,907.8 1242.8,902.9 1245.4,900.5 1248.0,899.9 1250.6,911.4 1253.2,902.6 1255.8,906.8 1258.4,881.9 1261.0,905.5 1263.5,902.5 1266.1,909.1 1268.7,900.9 1271.3,908.6 1273.9,900.8 1276.5,907.6 1279.1,898.3 1281.6,906.0 1284.2,901.2 1286.8,916.9 1289.4,896.8 1292.0,912.9 1294.6,906.7 1297.2,907.0 1299.7,895.9 1302.3,906.8 1304.9,905.5 1307.5,902.9 1310.1,895.1 1312.7,904.1 1315.3,902.1 1317.9,902.3 1320.4,902.8 1323.0,910.6 1325.6,893.5 1328.2,902.2 1330.8,900.0 1333.4,903.8 1336.0,896.3 1338.5,896.5 1341.1,898.4 1343.7,909.8 1346.3,901.1 1348.9,903.5 1351.5,903.9 1354.1,905.9 1356.7,903.0 1359.2,910.2 1361.8,898.8 1364.4,904.3 1367.0,901.8" fill="none" stroke="#E02F44" stroke-width="1" stroke-opacity="0.8" stroke-linejoin="round"/>
<polyline points="981.6,906.1 984.2,894.7 986.8,913.6 989.4,901.8 991.9,906.2 994.5,892.3 997.1,898.4 999.7,901.9 1002.3,907.8 1004.9,901.9 1007.5,909.8 1010.1,902.5 1012.6,902.5 1015.2,901.7 1017.8,922.3 1020.4,899.1 1023.0,906.7 1025.6,903.0 1028.2,910.4 1030.7,902.3 1033.3,912.9 1035.9,900.8 1038.5,908.6 1041.1,902.4 1043.7,911.1 1046.3,909.0 1048.9,913.6 1051.4,900.4 1054.0,875.5 1056.6,896.8 1059.2,911.0 1061.8,900.3 1064.4,908.9 1067.0,902.8 1069.5,906.0 1072.1,900.6 1074.7,906.1 1077.3,904.7 1079.9,905.8 1082.5,904.9 1085.1,908.1 1087.6,900.9 1090.2,905.4 1092.8,894.3 1095.4,913.8 1098.0,894.4 1100.6,911.4 1103.2,876.2 1105.8,899.9 1108.3,906.4 1110.9,903.6 1113.5,901.4 1116.1,902.4 1118.7,904.9 1121.3,913.3 1123.9,898.5 1126.4,905.9 1129.0,901.9 1131.6,917.5 1134.2,903.4 1136.8,913.2 1139.4,894.1 1142.0,907.3 1144.6,893.8 1147.1,912.1 1149.7,896.2 1152.3,908.2 1154.9,898.4 1157.5,907.6 1160.1,901.1 1162.7,905.5 1165.2,899.5 1167.8,909.3 1170.4,902.3 1173.0,907.7 1175.6,904.3 1178.2,903.0 1180.8,900.8 1183.4,909.5 1185.9,896.1 1188.5,908.5 1191.1,897.0 1193.7,904.4 1196.3,903.8 1198.9,904.1 1201.5,873.9 1204.0,872.3 1206.6,882.9 1209.2,900.2 1211.8,893.4 1214.4,907.6 1217.0,898.9 1219.6,905.5 1222.2,905.9 1224.7,906.2 1227.3,895.8 1229.9,904.7 1232.5,896.8 1235.1,901.2 1237.7,894.8 1240.3,908.3 1242.8,902.4 1245.4,902.9 1248.0,901.1 1250.6,906.5 1253.2,903.4 1255.8,909.3 1258.4,897.3 1261.0,902.7 1263.5,896.8 1266.1,903.2 1268.7,900.6 1271.3,911.3 1273.9,895.5 1276.5,905.2 1279.1,909.4 1281.6,905.4 1284.2,900.3 1286.8,910.9 1289.4,900.7 1292.0,916.2 1294.6,901.3 1297.2,904.3 1299.7,899.9 1302.3,912.9 1304.9,897.9 1307.5,907.3 1310.1,899.8 1312.7,905.9 1315.3,901.2 1317.9,901.5 1320.4,901.1 1323.0,906.5 1325.6,906.0 1328.2,909.7 1330.8,901.1 1333.4,909.0 1336.0,902.4 1338.5,913.2 1341.1,892.9 1343.7,914.6 1346.3,897.9 1348.9,910.0 1351.5,908.6 1354.1,901.3 1356.7,902.9 1359.2,902.4 1361.8,893.9 1364.4,910.3 1367.0,903.1" fill="none" stroke="#3274D9" stroke-width="1" stroke-opacity="0.8" stroke-linejoin="round"/>
<polyline points="981.6,909.2 984.2,897.4 986.8,909.8 989.4,904.4 991.9,914.6 994.5,906.6 997.1,914.0 999.7,905.7 1002.3,904.1 1004.9,903.7 1007.5,908.4 1010.1,902.6 1012.6,906.8 1015.2,897.6 1017.8,907.4 1020.4,903.7 1023.0,909.9 1025.6,903.5 1028.2,909.3 1030.7,901.3 1033.3,907.7 1035.9,898.8 1038.5,899.2 1041.1,899.6 1043.7,911.3 1046.3,894.7 1048.9,905.0 1051.4,898.8 1054.0,908.5 1056.6,901.6 1059.2,915.9 1061.8,898.4 1064.4,908.5 1067.0,899.9 1069.5,907.2 1072.1,904.4 1074.7,905.3 1077.3,898.8 1079.9,908.9 1082.5,892.6 1085.1,913.0 1087.6,899.0 1090.2,902.8 1092.8,904.4 1095.4,900.2 1098.0,857.8 1100.6,905.1 1103.2,907.3 1105.8,906.2 1108.3,897.6 1110.9,899.4 1113.5,899.1 1116.1,904.4 1118.7,903.6 1121.3,906.3 1123.9,899.4 1126.4,906.2 1129.0,908.6 1131.6,906.0 1134.2,898.1 1136.8,915.3 1139.4,908.2 1142.0,899.3 1144.6,907.7 1147.1,912.7 1149.7,895.1 1152.3,913.7 1154.9,899.3 1157.5,908.6 1160.1,905.4 1162.7,907.4 1165.2,906.8 1167.8,902.1 1170.4,906.8 1173.0,906.7 1175.6,903.1 1178.2,903.1 1180.8,899.2 1183.4,906.3 1185.9,902.7 1188.5,906.0 1191.1,902.7 1193.7,911.4 1196.3,904.8 1198.9,908.8 1201.5,903.9 1204.0,906.1 1206.6,906.7 1209.2,901.2 1211.8,900.1 1214.4,911.8 1217.0,901.7 1219.6,901.9 1222.2,906.5 1224.7,908.5 1227.3,907.6 1229.9,909.1 1232.5,902.0 1235.1,901.3 1237.7,899.8 1240.3,907.3 1242.8,899.9 1245.4,900.0 1248.0,899.6 1250.6,905.0 1253.2,901.1 1255.8,906.6 1258.4,903.6 1261.0,900.2 1263.5,905.5 1266.1,905.7 1268.7,911.2 1271.3,904.4 1273.9,898.3 1276.5,902.1 1279.1,897.7 1281.6,899.1 1284.2,895.8 1286.8,910.7 1289.4,892.1 1292.0,912.9 1294.6,897.6 1297.2,901.4 1299.7,898.6 1302.3,900.6 1304.9,907.8 1307.5,908.3 1310.1,910.4 1312.7,907.3 1315.3,896.4 1317.9,907.8 1320.4,866.4 1323.0,912.3 1325.6,904.6 1328.2,906.6 1330.8,904.7 1333.4,903.8 1336.0,902.9 1338.5,915.0 1341.1,904.7 1343.7,906.9 1346.3,900.9 1348.9,905.2 1351.5,899.9 1354.1,905.4 1356.7,907.9 1359.2,909.5 1361.8,895.9 1364.4,907.9 1367.0,897.4" fill="none" stroke="#A352CC" stroke-width="1" stroke-opacity="0.8" stroke-linejoin="round"/>
<polyline points="981.6,910.4 984.2,906.2 986.8,904.4 989.4,895.4 991.9,905.4 994.5,902.2 997.1,894.0 999.7,895.8 1002.3,903.6 1004.9,893.0 1007.5,910.7 1010.1,895.6 1012.6,910.4 1015.2,861.2 1017.8,899.8 1020.4,896.9 1023.0,906.2 1025.6,902.5 1028.2,904.2 1030.7,901.5 1033.3,909.4 1035.9,897.1 1038.5,903.8 1041.1,897.4 1043.7,906.7 1046.3,893.7 1048.9,908.6 1051.4,893.9 1054.0,892.9 1056.6,889.0 1059.2,906.4 1061.8,902.4 1064.4,904.2 1067.0,899.0 1069.5,906.6 1072.1,897.9 1074.7,915.4 1077.3,903.7 1079.9,907.9 1082.5,901.3 1085.1,875.6 1087.6,903.0 1090.2,912.5 1092.8,898.7 1095.4,905.5 1098.0,896.1 1100.6,906.7 1103.2,906.1 1105.8,901.9 1108.3,901.9 1110.9,902.8 1113.5,896.8 1116.1,908.9 1118.7,900.1 1121.3,906.3 1123.9,893.0 1126.4,906.7 1129.0,905.4 1131.6,904.0 1134.2,901.4 1136.8,905.0 1139.4,900.5 1142.0,900.6 1144.6,893.7 1147.1,907.8 1149.7,902.5 1152.3,903.9 1154.9,897.1 1157.5,907.4 1160.1,900.4 1162.7,916.7 1165.2,898.9 1167.8,909.7 1170.4,892.1 1173.0,905.0 1175.6,901.2 1178.2,902.8 1180.8,896.2 1183.4,906.3 1185.9,897.9 1188.5,905.5 1191.1,901.6 1193.7,909.6 1196.3,902.3 1198.9,909.5 1201.5,903.4 1204.0,902.2 1206.6,899.6 1209.2,911.1 1211.8,909.6 1214.4,910.7 1217.0,853.3 1219.6,907.6 1222.2,897.2 1224.7,907.9 1227.3,903.2 1229.9,905.8 1232.5,907.4 1235.1,913.8 1237.7,904.5 1240.3,901.4 1242.8,899.8 1245.4,903.4 1248.0,899.2 1250.6,908.7 1253.2,902.2 1255.8,910.1 1258.4,902.4 1261.0,904.0 1263.5,901.1 1266.1,905.4 1268.7,899.3 1271.3,904.4 1273.9,910.8 1276.5,905.0 1279.1,895.1 1281.6,909.6 1284.2,898.7 1286.8,906.1 1289.4,905.1 1292.0,905.1 1294.6,903.6 1297.2,899.2 1299.7,897.8 1302.3,906.9 1304.9,900.7 1307.5,906.8 1310.1,898.4 1312.7,910.0 1315.3,898.9 1317.9,906.8 1320.4,902.5 1323.0,906.3 1325.6,902.4 1328.2,909.2 1330.8,906.0 1333.4,903.7 1336.0,896.7 1338.5,904.9 1341.1,901.6 1343.7,906.1 1346.3,902.1 1348.9,906.0 1351.5,900.2 1354.1,913.5 1356.7,902.4 1359.2,902.7 1361.8,902.4 1364.4,909.8 1367.0,898.8" fill="none" stroke="#8AB8FF" stroke-width="1" stroke-opacity="0.8" stroke-linejoin="round"/>
<polyline points="981.6,902.6 984.2,892.4 986.8,902.2 989.4,906.1 991.9,909.5 994.5,904.7 997.1,912.2 999.7,894.3 1002.3,912.7 1004.9,903.5 1007.5,903.4 1010.1,904.9 1012.6,906.0 1015.2,901.6 1017.8,909.8 1020.4,900.7 1023.0,904.0 1025.6,909.6 1028.2,903.3 1030.7,902.4 1033.3,906.4 1035.9,901.3 1038.5,905.8 1041.1,903.5 1043.7,907.6 1046.3,901.4 1048.9,905.2 1051.4,898.9 1054.0,906.5 1056.6,900.4 1059.2,911.8 1061.8,898.0 1064.4,905.3 1067.0,897.9 1069.5,911.5 1072.1,903.4 1074.7,901.6 1077.3,898.6 1079.9,905.2 1082.5,902.2 1085.1,910.5 1087.6,897.5 1090.2,913.3 1092.8,904.7 1095.4,905.6 1098.0,893.3 1100.6,912.7 1103.2,901.1 1105.8,904.6 1108.3,903.5 1110.9,900.7 1113.5,893.5 1116.1,909.1 1118.7,892.8 1121.3,907.8 1123.9,899.5 1126.4,901.7 1129.0,901.2 1131.6,911.3 1134.2,895.6 1136.8,897.4 1139.4,898.2 1142.0,909.9 1144.6,903.4 1147.1,911.7 1149.7,902.1 1152.3,907.7 1154.9,906.0 1157.5,912.1 1160.1,908.4 1162.7,885.3 1165.2,901.1 1167.8,904.4 1170.4,900.2 1173.0,911.7 1175.6,902.4 1178.2,909.9 1180.8,897.2 1183.4,906.4 1185.9,884.2 1188.5,907.5 1191.1,895.7 1193.7,904.1 1196.3,898.0 1198.9,907.9 1201.5,906.5 1204.0,899.6 1206.6,901.5 1209.2,901.1 1211.8,912.2 1214.4,909.6 1217.0,896.0 1219.6,906.6 1222.2,900.2 1224.7,909.2 1227.3,898.9 1229.9,909.6 1232.5,903.3 1235.1,899.6 1237.7,905.0 1240.3,909.2 1242.8,899.5 1245.4,905.1 1248.0,902.2 1250.6,906.2 1253.2,900.9 1255.8,902.1 1258.4,903.5 1261.0,896.1 1263.5,904.6 1266.1,907.8 1268.7,900.9 1271.3,911.1 1273.9,905.8 1276.5,901.2 1279.1,902.7 1281.6,914.0 1284.2,900.1 1286.8,900.5 1289.4,897.6 1292.0,904.7 1294.6,898.4 1297.2,904.7 1299.7,897.8 1302.3,906.7 1304.9,909.3 1307.5,904.7 1310.1,894.6 1312.7,900.6 1315.3,898.6 1317.9,905.0 1320.4,898.2 1323.0,904.3 1325.6,894.3 1328.2,908.6 1330.8,907.8 1333.4,907.2 1336.0,901.6 1338.5,908.3 1341.1,899.7 1343.7,907.1 1346.3,903.3 1348.9,906.6 1351.5,900.9 1354.1,910.2 1356.7,897.6 1359.2,914.0 1361.8,900.2 1364.4,900.7 1367.0,900.3" fill="none" stroke="#E5A8E2" stroke-width="1" stroke-opacity="0.8" stroke-linejoin="round"/>
<polyline points="981.6,905.1 984.2,899.2 986.8,907.5 989.4,897.2 991.9,885.5 994.5,896.9 997.1,906.5 999.7,901.6 1002.3,913.4 1004.9,900.4 1007.5,905.7 1010.1,907.6 1012.6,905.8 1015.2,903.0 1017.8,905.3 1020.4,900.8 1023.0,866.8 1025.6,904.2 1028.2,904.6 1030.7,869.3 1033.3,905.8 1035.9,903.5 1038.5,903.4 1041.1,901.1 1043.7,905.9 1046.3,897.1 1048.9,913.2 1051.4,904.1 1054.0,908.4 1056.6,904.0 1059.2,903.7 1061.8,901.3 1064.4,913.2 1067.0,902.0 1069.5,910.4 1072.1,901.6 1074.7,913.7 1077.3,900.7 1079.9,911.2 1082.5,902.1 1085.1,906.0 1087.6,898.3 1090.2,907.4 1092.8,898.0 1095.4,906.4 1098.0,901.8 1100.6,910.3 1103.2,898.3 1105.8,912.7 1108.3,906.0 1110.9,917.2 1113.5,897.0 1116.1,901.2 1118.7,896.9 1121.3,908.2 1123.9,895.2 1126.4,905.4 1129.0,895.0 1131.6,910.4 1134.2,902.6 1136.8,906.3 1139.4,899.7 1142.0,898.4 1144.6,900.9 1147.1,903.0 1149.7,900.8 1152.3,905.9 1154.9,893.6 1157.5,914.0 1160.1,904.3 1162.7,902.8 1165.2,891.2 1167.8,910.5 1170.4,900.3 1173.0,906.4 1175.6,898.9 1178.2,904.9 1180.8,898.6 1183.4,913.0 1185.9,901.8 1188.5,908.1 1191.1,902.5 1193.7,909.9 1196.3,894.0 1198.9,913.8 1201.5,897.9 1204.0,905.6 1206.6,871.7 1209.2,910.8 1211.8,899.1 1214.4,904.4 1217.0,905.6 1219.6,908.7 1222.2,902.5 1224.7,903.7 1227.3,901.4 1229.9,911.8 1232.5,902.3 1235.1,904.6 1237.7,905.7 1240.3,907.6 1242.8,896.4 1245.4,903.9 1248.0,907.9 1250.6,909.9 1253.2,905.1 1255.8,907.6 1258.4,898.7 1261.0,905.0 1263.5,891.7 1266.1,907.8 1268.7,896.4 1271.3,901.2 1273.9,900.9 1276.5,913.4 1279.1,901.8 1281.6,910.8 1284.2,901.9 1286.8,902.2 1289.4,906.5 1292.0,906.8 1294.6,897.8 1297.2,912.4 1299.7,902.5 1302.3,907.4 1304.9,896.0 1307.5,904.5 1310.1,899.3 1312.7,911.4 1315.3,899.6 1317.9,906.8 1320.4,901.3 1323.0,913.6 1325.6,894.1 1328.2,903.2 1330.8,897.2 1333.4,898.2 1336.0,900.4 1338.5,910.6 1341.1,911.0 1343.7,907.4 1346.3,898.2 1348.9,907.0 1351.5,906.6 1354.1,906.7 1356.7,901.3 1359.2,906.3 1361.8,899.1 1364.4,903.6 1367.0,902.8" fill="none" stroke="#6D1F62" stroke-width="1" stroke-opacity="0.8" stroke-linejoin="round"/>
<polyline points="981.6,907.9 984.2,899.1 986.8,910.2 989.4,898.5 991.9,909.9 994.5,901.4 997.1,907.3 999.7,906.8 1002.3,905.2 1004.9,900.8 1007.5,911.2 1010.1,901.6 1012.6,903.7 1015.2,898.9 1017.8,905.2 1020.4,906.2 1023.0,913.3 1025.6,898.0 1028.2,905.4 1030.7,896.1 1033.3,905.8 1035.9,894.2 1038.5,908.2 1041.1,893.7 1043.7,905.7 1046.3,900.7 1048.9,910.1 1051.4,905.3 1054.0,907.0 1056.6,903.8 1059.2,911.8 1061.8,906.6 1064.4,908.9 1067.0,878.8 1069.5,904.8 1072.1,899.9 1074.7,901.2 1077.3,900.4 1079.9,915.1 1082.5,900.8 1085.1,904.2 1087.6,905.6 1090.2,909.2 1092.8,895.7 1095.4,903.3 1098.0,904.3 1100.6,911.3 1103.2,902.6 1105.8,906.4 1108.3,897.2 1110.9,874.4 1113.5,910.5 1116.1,907.7 1118.7,899.6 1121.3,906.0 1123.9,904.4 1126.4,907.5 1129.0,898.4 1131.6,904.4 1134.2,903.5 1136.8,907.7 1139.4,899.3 1142.0,905.4 1144.6,898.3 1147.1,902.3 1149.7,903.7 1152.3,902.6 1154.9,901.7 1157.5,910.4 1160.1,898.8 1162.7,911.5 1165.2,902.7 1167.8,913.4 1170.4,901.7 1173.0,904.9 1175.6,894.8 1178.2,902.6 1180.8,900.1 1183.4,912.1 1185.9,903.5 1188.5,901.1 1191.1,907.0 1193.7,905.0 1196.3,859.1 1198.9,910.4 1201.5,903.8 1204.0,904.9 1206.6,899.5 1209.2,907.3 1211.8,898.2 1214.4,906.5 1217.0,906.3 1219.6,905.1 1222.2,902.9 1224.7,914.8 1227.3,895.1 1229.9,908.9 1232.5,899.6 1235.1,887.6 1237.7,904.9 1240.3,905.7 1242.8,904.9 1245.4,899.4 1248.0,907.6 1250.6,908.3 1253.2,898.7 1255.8,903.3 1258.4,901.3 1261.0,911.5 1263.5,894.7 1266.1,907.3 1268.7,903.9 1271.3,907.8 1273.9,901.4 1276.5,902.0 1279.1,909.8 1281.6,903.7 1284.2,895.7 1286.8,909.7 1289.4,897.6 1292.0,907.3 1294.6,899.4 1297.2,904.6 1299.7,901.4 1302.3,910.2 1304.9,892.7 1307.5,909.0 1310.1,896.8 1312.7,914.0 1315.3,901.6 1317.9,909.8 1320.4,898.6 1323.0,908.2 1325.6,900.1 1328.2,905.9 1330.8,893.9 1333.4,904.2 1336.0,905.0 1338.5,910.4 1341.1,892.7 1343.7,909.7 1346.3,904.3 1348.9,906.3 1351.5,896.6 1354.1,903.9 1356.7,898.8 1359.2,906.7 1361.8,899.8 1364.4,906.0 1367.0,902.2" fill="none" stroke="#70DBED" stroke-width="1" stroke-opacity="0.8" stroke-linejoin="round"/>
<polyline points="981.6,903.2 984.2,905.5 986.8,905.5 989.4,896.1 991.9,905.0 994.5,901.8 997.1,910.0 999.7,898.7 1002.3,902.8 1004.9,893.8 1007.5,910.5 1010.1,903.2 1012.6,900.0 1015.2,903.1 1017.8,901.8 1020.4,899.1 1023.0,902.6 1025.6,898.5 1028.2,913.2 1030.7,904.0 1033.3,906.2 1035.9,899.8 1038.5,913.5 1041.1,898.3 1043.7,907.4 1046.3,899.5 1048.9,909.1 1051.4,898.3 1054.0,901.4 1056.6,902.1 1059.2,905.3 1061.8,897.8 1064.4,909.3 1067.0,900.6 1069.5,909.5 1072.1,901.5 1074.7,902.1 1077.3,898.0 1079.9,856.6 1082.5,894.2 1085.1,900.8 1087.6,899.7 1090.2,904.9 1092.8,905.6 1095.4,910.8 1098.0,898.3 1100.6,906.4 1103.2,898.1 1105.8,903.1 1108.3,908.1 1110.9,903.0 1113.5,895.8 1116.1,911.4 1118.7,895.5 1121.3,907.1 1123.9,905.9 1126.4,905.8 1129.0,899.7 1131.6,915.3 1134.2,901.8 1136.8,907.7 1139.4,899.9 1142.0,896.6 1144.6,895.3 1147.1,901.9 1149.7,903.1 1152.3,910.0 1154.9,895.3 1157.5,908.8 1160.1,902.4 1162.7,914.8 1165.2,901.0 1167.8,909.8 1170.4,899.0 1173.0,901.7 1175.6,900.2 1178.2,910.5 1180.8,902.5 1183.4,911.0 1185.9,905.7 1188.5,903.4 1191.1,904.6 1193.7,902.5 1196.3,900.6 1198.9,904.2 1201.5,905.5 1204.0,906.4 1206.6,901.6 1209.2,912.4 1211.8,903.9 1214.4,906.7 1217.0,902.4 1219.6,906.4 1222.2,902.9 1224.7,904.1 1227.3,905.1 1229.9,911.8 1232.5,907.7 1235.1,906.0 1237.7,905.4 1240.3,903.0 1242.8,901.1 1245.4,912.0 1248.0,900.3 1250.6,897.3 1253.2,901.8 1255.8,900.3 1258.4,900.5 1261.0,904.0 1263.5,912.1 1266.1,906.2 1268.7,901.4 1271.3,907.0 1273.9,899.5 1276.5,903.4 1279.1,896.5 1281.6,906.8 1284.2,895.5 1286.8,904.8 1289.4,898.2 1292.0,900.1 1294.6,907.7 1297.2,880.1 1299.7,901.2 1302.3,903.4 1304.9,903.8 1307.5,902.8 1310.1,905.3 1312.7,903.9 1315.3,899.6 1317.9,908.5 1320.4,894.4 1323.0,911.2 1325.6,900.9 1328.2,910.7 1330.8,903.1 1333.4,909.0 1336.0,904.1 1338.5,900.6 1341.1,895.4 1343.7,902.8 1346.3,901.6 1348.9,916.4 1351.5,891.8 1354.1,904.6 1356.7,896.6 1359.2,908.7 1361.8,910.2 1364.4,904.2 1367.0,906.6" fill="none" stroke="#F9BA8F" stroke-width="1" stroke-opacity="0.8" stroke-linejoin="round"/>
<polyline points="981.6,907.3 984.2,907.0 986.8,900.7 989.4,899.6 991.9,902.6 994.5,897.7 997.1,904.7 999.7,900.9 1002.3,902.5 1004.9,907.6 1007.5,908.8 1010.1,907.6 1012.6,911.3 1015.2,904.1 1017.8,904.5 1020.4,895.3 1023.0,908.4 1025.6,904.9 1028.2,908.7 1030.7,905.0 1033.3,905.7 1035.9,898.0 1038.5,907.4 1041.1,897.4 1043.7,910.9 1046.3,909.6 1048.9,906.9 1051.4,904.6 1054.0,910.8 1056.6,898.8 1059.2,890.5 1061.8,899.5 1064.4,908.1 1067.0,896.6 1069.5,907.8 1072.1,900.0 1074.7,908.2 1077.3,895.1 1079.9,909.5 1082.5,896.8 1085.1,908.1 1087.6,905.5 1090.2,911.2 1092.8,904.3 1095.4,905.5 1098.0,901.0 1100.6,912.2 1103.2,901.9 1105.8,906.2 1108.3,900.3 1110.9,905.4 1113.5,905.6 1116.1,899.9 1118.7,901.6 1121.3,909.6 1123.9,866.7 1126.4,901.2 1129.0,896.0 1131.6,902.2 1134.2,899.1 1136.8,868.9 1139.4,904.2 1142.0,907.6 1144.6,894.6 1147.1,912.1 1149.7,905.5 1152.3,909.3 1154.9,897.2 1157.5,910.4 1160.1,899.2 1162.7,902.2 1165.2,902.9 1167.8,906.2 1170.4,894.7 1173.0,913.2 1175.6,895.7 1178.2,908.4 1180.8,899.2 1183.4,902.9 1185.9,891.9 1188.5,904.1 1191.1,903.4 1193.7,909.9 1196.3,900.9 1198.9,908.9 1201.5,898.9 1204.0,908.3 1206.6,898.9 1209.2,912.4 1211.8,904.6 1214.4,909.3 1217.0,906.4 1219.6,905.2 1222.2,898.3 1224.7,906.9 1227.3,904.4 1229.9,910.0 1232.5,899.7 1235.1,905.2 1237.7,908.8 1240.3,902.5 1242.8,895.5 1245.4,907.8 1248.0,886.4 1250.6,905.5 1253.2,899.8 1255.8,911.5 1258.4,895.7 1261.0,902.9 1263.5,898.2 1266.1,902.9 1268.7,900.2 1271.3,906.1 1273.9,896.1 1276.5,901.0 1279.1,901.6 1281.6,910.8 1284.2,892.8 1286.8,912.4 1289.4,900.2 1292.0,907.7 1294.6,876.9 1297.2,898.6 1299.7,906.1 1302.3,915.0 1304.9,896.8 1307.5,912.8 1310.1,905.3 1312.7,911.5 1315.3,901.3 1317.9,911.0 1320.4,911.3 1323.0,900.6 1325.6,889.8 1328.2,906.1 1330.8,903.2 1333.4,910.7 1336.0,894.2 1338.5,904.7 1341.1,902.5 1343.7,904.4 1346.3,898.0 1348.9,904.9 1351.5,898.9 1354.1,903.8 1356.7,896.4 1359.2,911.0 1361.8,899.3 1364.4,913.7 1367.0,904.3" fill="none" stroke="#37872D" stroke-width="1" stroke-opacity="0.8" stroke-linejoin="round"/>
<polyline points="981.6,915.5 984.2,876.3 986.8,913.7 989.4,898.0 991.9,908.7 994.5,901.1 997.1,904.3 999.7,897.7 1002.3,900.5 1004.9,910.0 1007.5,905.9 1010.1,905.5 1012.6,910.9 1015.2,900.8 1017.8,902.7 1020.4,898.1 1023.0,912.4 1025.6,898.6 1028.2,908.4 1030.7,904.9 1033.3,909.8 1035.9,905.3 1038.5,885.6 1041.1,893.5 1043.7,883.3 1046.3,892.0 1048.9,908.4 1051.4,898.1 1054.0,905.5 1056.6,907.8 1059.2,912.4 1061.8,898.0 1064.4,903.1 1067.0,903.8 1069.5,911.7 1072.1,903.0 1074.7,904.0 1077.3,905.1 1079.9,911.4 1082.5,901.4 1085.1,904.0 1087.6,902.8 1090.2,908.5 1092.8,904.0 1095.4,906.1 1098.0,898.9 1100.6,905.6 1103.2,898.0 1105.8,898.2 1108.3,905.4 1110.9,905.4 1113.5,899.6 1116.1,913.2 1118.7,893.3 1121.3,906.6 1123.9,897.0 1126.4,909.7 1129.0,900.9 1131.6,911.8 1134.2,900.0 1136.8,907.6 1139.4,905.7 1142.0,908.9 1144.6,874.1 1147.1,910.5 1149.7,903.1 1152.3,903.4 1154.9,899.3 1157.5,903.4 1160.1,892.2 1162.7,907.9 1165.2,866.1 1167.8,903.7 1170.4,899.5 1173.0,914.9 1175.6,903.0 1178.2,910.2 1180.8,898.0 1183.4,912.3 1185.9,907.2 1188.5,906.6 1191.1,901.9 1193.7,907.3 1196.3,895.9 1198.9,904.4 1201.5,902.2 1204.0,907.0 1206.6,894.5 1209.2,905.1 1211.8,897.2 1214.4,904.6 1217.0,894.5 1219.6,908.4 1222.2,900.0 1224.7,909.1 1227.3,897.6 1229.9,911.8 1232.5,900.9 1235.1,903.6 1237.7,895.1 1240.3,904.4 1242.8,901.2 1245.4,909.2 1248.0,901.8 1250.6,905.3 1253.2,902.4 1255.8,903.9 1258.4,899.8 1261.0,907.6 1263.5,904.4 1266.1,909.5 1268.7,900.3 1271.3,907.5 1273.9,870.3 1276.5,906.1 1279.1,897.4 1281.6,912.0 1284.2,902.4 1286.8,906.9 1289.4,899.1 1292.0,907.3 1294.6,900.7 1297.2,910.0 1299.7,902.7 1302.3,912.2 1304.9,902.3 1307.5,908.2 1310.1,897.3 1312.7,912.3 1315.3,897.1 1317.9,910.9 1320.4,901.8 1323.0,907.9 1325.6,871.1 1328.2,911.9 1330.8,900.4 1333.4,899.0 1336.0,903.5 1338.5,896.5 1341.1,898.9 1343.7,898.4 1346.3,900.9 1348.9,906.3 1351.5,898.5 1354.1,909.6 1356.7,902.3 1359.2,901.6 1361.8,861.3 1364.4,907.7 1367.0,901.0" fill="none" stroke="#AEA2E0" stroke-width="1" stroke-opacity="0.8" stroke-linejoin="round"/>
<polyline points="981.6,903.4 984.2,901.0 986.8,882.4 989.4,904.0 991.9,905.8 994.5,905.4 997.1,906.1 999.7,896.8 1002.3,904.8 1004.9,901.3 1007.5,910.4 1010.1,901.7 1012.6,883.8 1015.2,898.0 1017.8,907.3 1020.4,871.5 1023.0,906.9 1025.6,897.2 1028.2,905.2 1030.7,895.1 1033.3,891.5 1035.9,897.9 1038.5,910.8 1041.1,899.9 1043.7,907.2 1046.3,899.0 1048.9,906.5 1051.4,905.0 1054.0,904.4 1056.6,901.9 1059.2,912.9 1061.8,902.9 1064.4,906.4 1067.0,896.4 1069.5,900.5 1072.1,906.7 1074.7,908.4 1077.3,904.3 1079.9,865.4 1082.5,901.6 1085.1,906.5 1087.6,902.7 1090.2,910.8 1092.8,904.0 1095.4,904.8 1098.0,895.0 1100.6,901.7 1103.2,903.4 1105.8,909.4 1108.3,900.7 1110.9,910.1 1113.5,900.2 1116.1,901.1 1118.7,902.4 1121.3,902.5 1123.9,901.7 1126.4,910.8 1129.0,906.2 1131.6,904.9 1134.2,891.5 1136.8,905.5 1139.4,902.0 1142.0,903.9 1144.6,899.8 1147.1,904.8 1149.7,899.5 1152.3,906.3 1154.9,903.5 1157.5,905.6 1160.1,901.8 1162.7,901.3 1165.2,910.5 1167.8,860.6 1170.4,900.3 1173.0,906.8 1175.6,905.5 1178.2,905.6 1180.8,891.5 1183.4,914.9 1185.9,901.1 1188.5,901.1 1191.1,906.3 1193.7,901.8 1196.3,902.3 1198.9,909.2 1201.5,901.4 1204.0,916.4 1206.6,898.0 1209.2,908.7 1211.8,899.8 1214.4,909.7 1217.0,900.3 1219.6,907.8 1222.2,899.9 1224.7,910.6 1227.3,892.8 1229.9,895.6 1232.5,898.8 1235.1,914.0 1237.7,899.8 1240.3,911.0 1242.8,899.9 1245.4,913.4 1248.0,897.2 1250.6,900.5 1253.2,895.3 1255.8,906.9 1258.4,900.0 1261.0,903.6 1263.5,904.5 1266.1,904.6 1268.7,896.3 1271.3,906.4 1273.9,905.9 1276.5,912.7 1279.1,902.0 1281.6,901.6 1284.2,900.1 1286.8,880.4 1289.4,895.1 1292.0,912.2 1294.6,899.0 1297.2,908.4 1299.7,902.4 1302.3,908.6 1304.9,893.0 1307.5,902.4 1310.1,904.9 1312.7,907.0 1315.3,898.9 1317.9,902.3 1320.4,869.4 1323.0,910.9 1325.6,890.3 1328.2,906.3 1330.8,895.5 1333.4,908.3 1336.0,900.6 1338.5,901.4 1341.1,899.9 1343.7,906.7 1346.3,898.7 1348.9,904.3 1351.5,905.0 1354.1,863.0 1356.7,900.7 1359.2,915.4 1361.8,900.1 1364.4,903.7 1367.0,898.6" fill="none" stroke="#F2CC0C" stroke-width="1" stroke-opacity="0.8" stroke-linejoin="round"/>
<polyline points="981.6,907.2 984.2,900.9 986.8,903.9 989.4,897.6 991.9,905.6 994.5,903.3 997.1,876.8 999.7,906.8 1002.3,907.0 1004.9,903.5 1007.5,912.7 1010.1,875.8 1012.6,907.4 1015.2,899.8 1017.8,913.4 1020.4,899.0 1023.0,899.0 1025.6,900.4 1028.2,902.1 1030.7,896.5 1033.3,909.3 1035.9,901.7 1038.5,904.5 1041.1,897.1 1043.7,909.5 1046.3,897.3 1048.9,908.3 1051.4,906.0 1054.0,904.4 1056.6,900.9 1059.2,904.2 1061.8,850.8 1064.4,901.5 1067.0,908.7 1069.5,914.3 1072.1,905.3 1074.7,902.6 1077.3,900.6 1079.9,902.3 1082.5,906.9 1085.1,910.5 1087.6,898.4 1090.2,904.8 1092.8,899.5 1095.4,897.1 1098.0,897.1 1100.6,906.3 1103.2,897.2 1105.8,904.1 1108.3,899.5 1110.9,905.6 1113.5,900.0 1116.1,908.5 1118.7,901.2 1121.3,907.3 1123.9,896.2 1126.4,907.2 1129.0,890.2 1131.6,909.0 1134.2,903.0 1136.8,910.2 1139.4,857.4 1142.0,903.1 1144.6,906.4 1147.1,908.6 1149.7,895.6 1152.3,910.1 1154.9,898.6 1157.5,907.6 1160.1,890.3 1162.7,911.6 1165.2,904.3 1167.8,907.4 1170.4,900.4 1173.0,907.0 1175.6,905.1 1178.2,905.0 1180.8,898.9 1183.4,909.1 1185.9,910.4 1188.5,908.1 1191.1,895.3 1193.7,908.6 1196.3,899.8 1198.9,910.5 1201.5,894.3 1204.0,909.2 1206.6,896.4 1209.2,907.4 1211.8,899.7 1214.4,905.8 1217.0,907.5 1219.6,903.2 1222.2,901.5 1224.7,903.0 1227.3,903.6 1229.9,912.3 1232.5,902.7 1235.1,908.3 1237.7,898.7 1240.3,912.7 1242.8,897.1 1245.4,910.7 1248.0,901.3 1250.6,908.2 1253.2,898.2 1255.8,906.3 1258.4,854.5 1261.0,909.2 1263.5,902.5 1266.1,905.0 1268.7,903.8 1271.3,914.5 1273.9,897.5 1276.5,906.7 1279.1,902.4 1281.6,911.3 1284.2,894.5 1286.8,905.8 1289.4,904.8 1292.0,905.1 1294.6,874.4 1297.2,909.4 1299.7,905.9 1302.3,906.8 1304.9,896.2 1307.5,912.8 1310.1,904.1 1312.7,911.2 1315.3,901.7 1317.9,910.8 1320.4,891.9 1323.0,905.6 1325.6,902.9 1328.2,905.0 1330.8,899.5 1333.4,904.5 1336.0,902.4 1338.5,903.2 1341.1,899.0 1343.7,910.0 1346.3,905.5 1348.9,903.2 1351.5,897.2 1354.1,903.2 1356.7,902.4 1359.2,912.4 1361.8,901.1 1364.4,908.2 1367.0,905.0" fill="none" stroke="#1F60C4" stroke-width="1" stroke-opacity="0.8" stroke-linejoin="round"/>
<polyline points="981.6,895.4 984.2,897.3 986.8,902.6 989.4,902.2 991.9,911.3 994.5,893.6 997.1,905.6 999.7,900.1 1002.3,913.6 1004.9,905.7 1007.5,907.0 1010.1,906.0 1012.6,907.4 1015.2,902.0 1017.8,905.8 1020.4,904.5 1023.0,909.5 1025.6,898.9 1028.2,905.2 1030.7,902.2 1033.3,908.7 1035.9,903.5 1038.5,909.1 1041.1,908.3 1043.7,908.7 1046.3,908.0 1048.9,913.4 1051.4,896.9 1054.0,909.8 1056.6,909.4 1059.2,907.2 1061.8,905.8 1064.4,900.2 1067.0,900.3 1069.5,905.3 1072.1,899.0 1074.7,907.4 1077.3,903.3 1079.9,907.3 1082.5,899.2 1085.1,903.3 1087.6,901.7 1090.2,909.1 1092.8,900.8 1095.4,911.3 1098.0,901.6 1100.6,903.1 1103.2,890.0 1105.8,913.6 1108.3,902.8 1110.9,907.4 1113.5,905.2 1116.1,888.1 1118.7,902.3 1121.3,903.4 1123.9,902.8 1126.4,904.0 1129.0,902.4 1131.6,906.6 1134.2,900.8 1136.8,908.2 1139.4,898.6 1142.0,905.0 1144.6,892.5 1147.1,913.5 1149.7,904.1 1152.3,902.4 1154.9,903.1 1157.5,904.1 1160.1,897.4 1162.7,908.1 1165.2,901.2 1167.8,898.2 1170.4,899.2 1173.0,904.5 1175.6,905.7 1178.2,904.9 1180.8,896.7 1183.4,910.1 1185.9,899.7 1188.5,910.3 1191.1,901.6 1193.7,910.4 1196.3,902.1 1198.9,903.6 1201.5,902.0 1204.0,905.2 1206.6,907.6 1209.2,890.4 1211.8,896.7 1214.4,902.8 1217.0,900.7 1219.6,905.7 1222.2,901.4 1224.7,906.2 1227.3,893.7 1229.9,898.1 1232.5,903.9 1235.1,910.7 1237.7,900.3 1240.3,911.0 1242.8,902.3 1245.4,908.3 1248.0,890.2 1250.6,899.0 1253.2,896.6 1255.8,907.3 1258.4,893.1 1261.0,911.6 1263.5,898.8 1266.1,908.1 1268.7,906.1 1271.3,909.5 1273.9,899.3 1276.5,904.3 1279.1,902.1 1281.6,904.3 1284.2,900.1 1286.8,911.7 1289.4,906.5 1292.0,907.6 1294.6,901.9 1297.2,911.0 1299.7,902.8 1302.3,905.7 1304.9,905.7 1307.5,902.7 1310.1,901.5 1312.7,904.4 1315.3,903.7 1317.9,901.0 1320.4,895.8 1323.0,907.6 1325.6,902.8 1328.2,908.7 1330.8,902.1 1333.4,913.5 1336.0,899.1 1338.5,910.3 1341.1,901.4 1343.7,905.8 1346.3,898.0 1348.9,909.2 1351.5,899.4 1354.1,904.5 1356.7,897.4 1359.2,897.0 1361.8,906.1 1364.4,871.1 1367.0,901.6" fill="none" stroke="#F29191" stroke-width="1" stroke-opacity="0.8" stroke-linejoin="round"/>
<polyline points="981.6,911.9 984.2,898.1 986.8,908.4 989.4,895.6 991.9,859.4 994.5,902.5 997.1,903.2 999.7,901.6 1002.3,902.5 1004.9,896.2 1007.5,908.9 1010.1,889.5 1012.6,899.6 1015.2,899.3 1017.8,908.6 1020.4,867.9 1023.0,907.9 1025.6,904.9 1028.2,899.6 1030.7,901.1 1033.3,906.9 1035.9,896.4 1038.5,907.8 1041.1,899.3 1043.7,905.2 1046.3,904.2 1048.9,919.5 1051.4,908.5 1054.0,906.5 1056.6,900.2 1059.2,905.3 1061.8,899.6 1064.4,911.1 1067.0,899.4 1069.5,912.3 1072.1,902.0 1074.7,903.9 1077.3,899.7 1079.9,905.3 1082.5,904.0 1085.1,906.9 1087.6,904.5 1090.2,910.5 1092.8,899.8 1095.4,909.1 1098.0,881.3 1100.6,911.3 1103.2,902.9 1105.8,907.7 1108.3,905.8 1110.9,911.9 1113.5,901.9 1116.1,909.4 1118.7,903.1 1121.3,910.4 1123.9,907.6 1126.4,904.7 1129.0,898.9 1131.6,907.8 1134.2,895.2 1136.8,907.9 1139.4,901.9 1142.0,907.7 1144.6,906.2 1147.1,906.8 1149.7,897.1 1152.3,909.5 1154.9,902.2 1157.5,906.2 1160.1,904.0 1162.7,906.3 1165.2,900.0 1167.8,905.3 1170.4,904.9 1173.0,911.5 1175.6,903.3 1178.2,908.2 1180.8,893.1 1183.4,903.3 1185.9,902.5 1188.5,910.1 1191.1,903.2 1193.7,902.3 1196.3,896.3 1198.9,884.5 1201.5,899.6 1204.0,880.9 1206.6,904.2 1209.2,905.8 1211.8,902.2 1214.4,906.5 1217.0,902.2 1219.6,909.0 1222.2,898.2 1224.7,908.4 1227.3,896.3 1229.9,913.1 1232.5,900.7 1235.1,906.7 1237.7,910.6 1240.3,902.7 1242.8,900.6 1245.4,908.6 1248.0,903.9 1250.6,910.4 1253.2,904.7 1255.8,904.8 1258.4,908.9 1261.0,903.3 1263.5,895.0 1266.1,911.1 1268.7,897.6 1271.3,907.0 1273.9,893.5 1276.5,912.4 1279.1,895.1 1281.6,911.8 1284.2,892.8 1286.8,904.8 1289.4,903.1 1292.0,905.0 1294.6,895.8 1297.2,905.8 1299.7,901.6 1302.3,908.8 1304.9,908.6 1307.5,909.2 1310.1,893.9 1312.7,909.3 1315.3,898.4 1317.9,904.5 1320.4,898.5 1323.0,910.5 1325.6,901.6 1328.2,907.5 1330.8,898.8 1333.4,907.4 1336.0,903.9 1338.5,907.4 1341.1,895.7 1343.7,911.7 1346.3,891.7 1348.9,906.8 1351.5,897.7 1354.1,909.0 1356.7,902.9 1359.2,902.9 1361.8,900.5 1364.4,916.3 1367.0,896.0" fill="none" stroke="#C4162A" stroke-width="1" stroke-opacity="0.8" stroke-linejoin="round"/>
<polyline points="981.6,906.9 984.2,900.7 986.8,909.4 989.4,893.5 991.9,908.0 994.5,901.2 997.1,909.4 999.7,896.3 1002.3,907.8 1004.9,901.4 1007.5,905.5 1010.1,896.8 1012.6,900.1 1015.2,896.1 1017.8,908.1 1020.4,903.8 1023.0,910.6 1025.6,898.1 1028.2,898.9 1030.7,904.4 1033.3,911.2 1035.9,901.7 1038.5,906.5 1041.1,905.1 1043.7,906.0 1046.3,898.5 1048.9,900.1 1051.4,896.7 1054.0,912.3 1056.6,905.9 1059.2,912.6 1061.8,903.3 1064.4,910.9 1067.0,905.2 1069.5,904.0 1072.1,901.3 1074.7,916.7 1077.3,899.7 1079.9,907.0 1082.5,896.0 1085.1,911.8 1087.6,901.3 1090.2,904.8 1092.8,899.7 1095.4,867.0 1098.0,900.4 1100.6,904.0 1103.2,902.2 1105.8,912.9 1108.3,900.1 1110.9,904.2 1113.5,902.9 1116.1,913.6 1118.7,898.6 1121.3,909.5 1123.9,898.7 1126.4,903.1 1129.0,902.8 1131.6,905.8 1134.2,904.7 1136.8,906.8 1139.4,895.9 1142.0,904.7 1144.6,906.2 1147.1,915.3 1149.7,904.5 1152.3,911.5 1154.9,900.5 1157.5,909.6 1160.1,902.3 1162.7,911.8 1165.2,907.9 1167.8,903.5 1170.4,871.3 1173.0,910.5 1175.6,897.2 1178.2,909.0 1180.8,899.8 1183.4,909.1 1185.9,899.0 1188.5,906.7 1191.1,901.3 1193.7,902.3 1196.3,898.4 1198.9,911.0 1201.5,894.9 1204.0,904.3 1206.6,894.8 1209.2,907.7 1211.8,900.9 1214.4,906.1 1217.0,904.6 1219.6,910.4 1222.2,896.0 1224.7,906.5 1227.3,906.4 1229.9,903.9 1232.5,896.6 1235.1,909.0 1237.7,894.2 1240.3,907.4 1242.8,898.7 1245.4,910.1 1248.0,900.2 1250.6,907.7 1253.2,893.4 1255.8,913.6 1258.4,897.2 1261.0,903.5 1263.5,905.7 1266.1,908.0 1268.7,903.9 1271.3,907.8 1273.9,896.3 1276.5,899.8 1279.1,904.6 1281.6,909.4 1284.2,897.3 1286.8,907.6 1289.4,894.1 1292.0,901.9 1294.6,904.6 1297.2,872.4 1299.7,906.0 1302.3,910.2 1304.9,894.4 1307.5,906.2 1310.1,908.7 1312.7,909.4 1315.3,902.2 1317.9,907.7 1320.4,901.4 1323.0,906.2 1325.6,901.5 1328.2,911.5 1330.8,898.1 1333.4,908.3 1336.0,897.1 1338.5,907.9 1341.1,903.0 1343.7,901.7 1346.3,905.3 1348.9,912.8 1351.5,902.4 1354.1,902.5 1356.7,910.0 1359.2,905.3 1361.8,897.8 1364.4,898.3 1367.0,902.0" fill="none" stroke="#B877D9" stroke-width="1" stroke-opacity="0.8" stroke-linejoin="round"/>
<polyline points="981.6,905.5 984.2,892.8 986.8,908.4 989.4,900.7 991.9,910.2 994.5,906.4 997.1,910.0 999.7,900.7 1002.3,903.9 1004.9,899.6 1007.5,901.6 1010.1,904.7 1012.6,913.6 1015.2,899.8 1017.8,904.6 1020.4,902.4 1023.0,911.3 1025.6,898.1 1028.2,904.3 1030.7,903.5 1033.3,903.3 1035.9,899.0 1038.5,906.0 1041.1,896.1 1043.7,896.7 1046.3,899.9 1048.9,911.3 1051.4,898.1 1054.0,908.8 1056.6,896.5 1059.2,908.1 1061.8,895.7 1064.4,899.4 1067.0,907.0 1069.5,907.7 1072.1,902.0 1074.7,906.7 1077.3,903.0 1079.9,902.3 1082.5,897.2 1085.1,908.8 1087.6,891.9 1090.2,909.8 1092.8,898.4 1095.4,910.7 1098.0,897.1 1100.6,908.6 1103.2,904.6 1105.8,902.4 1108.3,900.7 1110.9,898.7 1113.5,893.1 1116.1,900.0 1118.7,896.5 1121.3,908.7 1123.9,908.7 1126.4,911.9 1129.0,903.0 1131.6,908.7 1134.2,898.3 1136.8,898.4 1139.4,897.1 1142.0,907.9 1144.6,903.9 1147.1,909.7 1149.7,901.0 1152.3,915.5 1154.9,900.1 1157.5,903.7 1160.1,895.9 1162.7,909.8 1165.2,901.1 1167.8,907.7 1170.4,901.7 1173.0,900.8 1175.6,856.1 1178.2,903.7 1180.8,906.0 1183.4,909.1 1185.9,898.1 1188.5,907.8 1191.1,900.6 1193.7,912.3 1196.3,894.5 1198.9,904.7 1201.5,897.2 1204.0,902.9 1206.6,889.7 1209.2,912.4 1211.8,907.2 1214.4,907.6 1217.0,902.8 1219.6,907.7 1222.2,903.3 1224.7,902.5 1227.3,903.3 1229.9,910.6 1232.5,900.7 1235.1,911.4 1237.7,900.0 1240.3,903.5 1242.8,895.1 1245.4,912.2 1248.0,904.1 1250.6,903.2 1253.2,895.4 1255.8,904.7 1258.4,902.2 1261.0,898.1 1263.5,905.8 1266.1,907.5 1268.7,903.9 1271.3,907.6 1273.9,902.3 1276.5,913.7 1279.1,894.5 1281.6,905.8 1284.2,895.7 1286.8,907.1 1289.4,900.1 1292.0,910.4 1294.6,852.1 1297.2,907.4 1299.7,899.9 1302.3,907.5 1304.9,897.8 1307.5,908.3 1310.1,899.0 1312.7,905.4 1315.3,904.7 1317.9,908.7 1320.4,902.0 1323.0,909.1 1325.6,895.1 1328.2,912.3 1330.8,908.3 1333.4,906.9 1336.0,900.8 1338.5,913.5 1341.1,900.5 1343.7,904.1 1346.3,904.6 1348.9,907.2 1351.5,901.5 1354.1,911.8 1356.7,865.1 1359.2,907.4 1361.8,897.1 1364.4,910.6 1367.0,901.3" fill="none" stroke="#96D98D" stroke-width="1" stroke-opacity="0.8" stroke-linejoin="round"/></svg>
<div style="position:absolute;left:0;top:0;width:1400px;height:1100px;will-change:transform"><div class="t" style="left:563.60px;top:13.15px;font-size:14px;font-weight:400;color:#6c7074;letter-spacing:0.328px;-webkit-text-stroke:0.2px #6c7074;">Search or jump to...</div>
<div class="t" style="left:832.70px;top:13.84px;font-size:12px;font-weight:400;color:#5b5f63;letter-spacing:0.717px;-webkit-text-stroke:0.2px #5b5f63;">ctrl+k</div>
<div class="t" style="left:1339.00px;top:13.15px;font-size:14px;font-weight:400;color:#24292e;letter-spacing:0.265px;-webkit-text-stroke:0.2px #24292e;">Sign in</div>
<div class="t" style="left:56.40px;top:52.95px;font-size:14px;font-weight:400;color:#24292e;letter-spacing:-0.053px;-webkit-text-stroke:0.2px #24292e;">Home</div>
<div class="t" style="left:119.30px;top:52.95px;font-size:14px;font-weight:400;color:#24292e;letter-spacing:0.500px;-webkit-text-stroke:0.2px #24292e;">Dashboards</div>
<div class="t" style="left:224.60px;top:52.95px;font-size:14px;font-weight:400;color:#5b5f63;letter-spacing:0.410px;-webkit-text-stroke:0.2px #5b5f63;">Mimir / Remote ruler reads resources</div>
<div class="t" style="left:902.50px;top:53.84px;font-size:12px;font-weight:400;color:#24292e;letter-spacing:1.320px;-webkit-text-stroke:0.3px #24292e;">Add</div>
<div class="t" style="left:969.40px;top:53.84px;font-size:12px;font-weight:400;color:#ffffff;letter-spacing:0.442px;-webkit-text-stroke:0.3px #ffffff;">Share</div>
<div class="t" style="left:1064.40px;top:52.95px;font-size:14px;font-weight:400;color:#5b5f63;letter-spacing:0.734px;-webkit-text-stroke:0.3px #5b5f63;">Last 1 hour</div>
<div class="t" style="left:1148.00px;top:53.84px;font-size:12px;font-weight:400;color:#e8700f;letter-spacing:1.264px;-webkit-text-stroke:0.3px #e8700f;">UTC</div>
<div class="t" style="left:1292.60px;top:52.95px;font-size:14px;font-weight:400;color:#5b5f63;letter-spacing:-0.653px;-webkit-text-stroke:0.3px #5b5f63;">5m</div>
<div class="t" style="left:25.60px;top:106.04px;font-size:12px;font-weight:400;color:#1f62e0;letter-spacing:0.890px;-webkit-text-stroke:0.3px #1f62e0;">Data source</div>
<div class="t" style="left:122.10px;top:105.15px;font-size:14px;font-weight:400;color:#24292e;letter-spacing:-0.330px;-webkit-text-stroke:0.2px #24292e;">Mimir</div>
<div class="t" style="left:206.40px;top:106.04px;font-size:12px;font-weight:400;color:#1f62e0;letter-spacing:1.143px;-webkit-text-stroke:0.3px #1f62e0;">cluster</div>
<div class="t" style="left:271.20px;top:105.15px;font-size:14px;font-weight:400;color:#24292e;letter-spacing:0.890px;-webkit-text-stroke:0.2px #24292e;">dev-us-central-0</div>
<div class="t" style="left:436.40px;top:106.04px;font-size:12px;font-weight:400;color:#1f62e0;letter-spacing:0.819px;-webkit-text-stroke:0.3px #1f62e0;">namespace</div>
<div class="t" style="left:527.60px;top:105.15px;font-size:14px;font-weight:400;color:#24292e;letter-spacing:0.817px;-webkit-text-stroke:0.2px #24292e;">cortex-dev-01</div>
<div class="t" style="left:1265.00px;top:105.64px;font-size:12px;font-weight:400;color:#24292e;letter-spacing:0.922px;-webkit-text-stroke:0.3px #24292e;">Mimir dashboards</div>
<div class="t" style="left:38.60px;top:143.26px;font-size:16px;font-weight:400;color:#24292e;letter-spacing:0.993px;-webkit-text-stroke:0.45px #24292e;">Ruler-query-frontend</div>
<div class="t" style="left:38.60px;top:447.26px;font-size:16px;font-weight:400;color:#24292e;letter-spacing:0.715px;-webkit-text-stroke:0.45px #24292e;">Ruler-query-scheduler</div>
<div class="t" style="left:38.60px;top:751.26px;font-size:16px;font-weight:400;color:#24292e;letter-spacing:0.677px;-webkit-text-stroke:0.45px #24292e;">Ruler-querier</div>
<div class="t" style="left:25.30px;top:184.15px;font-size:14px;font-weight:400;color:#24292e;letter-spacing:0.219px;-webkit-text-stroke:0.35px #24292e;">CPU</div>
<div class="t" style="left:30.21px;top:325.14px;font-size:12px;font-weight:400;color:#24292e;letter-spacing:0.000px;-webkit-text-stroke:0.2px #24292e;">0</div>
<div class="t" style="left:30.21px;top:268.54px;font-size:12px;font-weight:400;color:#24292e;letter-spacing:0.000px;-webkit-text-stroke:0.2px #24292e;">2</div>
<div class="t" style="left:69.40px;top:339.84px;font-size:12px;font-weight:400;color:#24292e;letter-spacing:0.392px;-webkit-text-stroke:0.2px #24292e;">15:30</div>
<div class="t" style="left:137.40px;top:339.84px;font-size:12px;font-weight:400;color:#24292e;letter-spacing:0.392px;-webkit-text-stroke:0.2px #24292e;">15:40</div>
<div class="t" style="left:205.40px;top:339.84px;font-size:12px;font-weight:400;color:#24292e;letter-spacing:0.392px;-webkit-text-stroke:0.2px #24292e;">15:50</div>
<div class="t" style="left:273.40px;top:339.84px;font-size:12px;font-weight:400;color:#24292e;letter-spacing:0.392px;-webkit-text-stroke:0.2px #24292e;">16:00</div>
<div class="t" style="left:341.40px;top:339.84px;font-size:12px;font-weight:400;color:#24292e;letter-spacing:0.392px;-webkit-text-stroke:0.2px #24292e;">16:10</div>
<div class="t" style="left:409.40px;top:339.84px;font-size:12px;font-weight:400;color:#24292e;letter-spacing:0.392px;-webkit-text-stroke:0.2px #24292e;">16:20</div>
<div class="t" style="left:51.30px;top:360.04px;font-size:12px;font-weight:400;color:#24292e;letter-spacing:1.079px;-webkit-text-stroke:0.2px #24292e;">ruler-query-frontend-745595dfdc-6hnpp</div>
<div class="t" style="left:51.30px;top:383.54px;font-size:12px;font-weight:400;color:#24292e;letter-spacing:1.078px;-webkit-text-stroke:0.2px #24292e;">ruler-query-frontend-745595dfdc-8rk7q</div>
<div class="t" style="left:51.30px;top:407.04px;font-size:12px;font-weight:400;color:#24292e;letter-spacing:1.118px;-webkit-text-stroke:0.2px #24292e;">ruler-query-frontend-745595dfdc-q7b7x</div>
<div class="t" style="left:333.80px;top:407.04px;font-size:12px;font-weight:400;color:#24292e;letter-spacing:0.761px;-webkit-text-stroke:0.2px #24292e;">request</div>
<div class="t" style="left:484.30px;top:184.15px;font-size:14px;font-weight:400;color:#24292e;letter-spacing:1.128px;-webkit-text-stroke:0.35px #24292e;">Memory (workingset)</div>
<div class="t" style="left:500.68px;top:325.14px;font-size:12px;font-weight:400;color:#24292e;letter-spacing:0.000px;-webkit-text-stroke:0.2px #24292e;">0 B</div>
<div class="t" style="left:486.70px;top:277.54px;font-size:12px;font-weight:400;color:#24292e;letter-spacing:0.496px;-webkit-text-stroke:0.2px #24292e;">2 GiB</div>
<div class="t" style="left:486.70px;top:228.64px;font-size:12px;font-weight:400;color:#24292e;letter-spacing:0.496px;-webkit-text-stroke:0.2px #24292e;">4 GiB</div>
<div class="t" style="left:549.40px;top:339.84px;font-size:12px;font-weight:400;color:#24292e;letter-spacing:0.392px;-webkit-text-stroke:0.2px #24292e;">15:30</div>
<div class="t" style="left:613.40px;top:339.84px;font-size:12px;font-weight:400;color:#24292e;letter-spacing:0.392px;-webkit-text-stroke:0.2px #24292e;">15:40</div>
<div class="t" style="left:677.40px;top:339.84px;font-size:12px;font-weight:400;color:#24292e;letter-spacing:0.392px;-webkit-text-stroke:0.2px #24292e;">15:50</div>
<div class="t" style="left:741.40px;top:339.84px;font-size:12px;font-weight:400;color:#24292e;letter-spacing:0.392px;-webkit-text-stroke:0.2px #24292e;">16:00</div>
<div class="t" style="left:805.40px;top:339.84px;font-size:12px;font-weight:400;color:#24292e;letter-spacing:0.392px;-webkit-text-stroke:0.2px #24292e;">16:10</div>
<div class="t" style="left:870.40px;top:339.84px;font-size:12px;font-weight:400;color:#24292e;letter-spacing:0.392px;-webkit-text-stroke:0.2px #24292e;">16:20</div>
<div class="t" style="left:510.30px;top:360.04px;font-size:12px;font-weight:400;color:#24292e;letter-spacing:1.079px;-webkit-text-stroke:0.2px #24292e;">ruler-query-frontend-745595dfdc-6hnpp</div>
<div class="t" style="left:510.30px;top:383.54px;font-size:12px;font-weight:400;color:#24292e;letter-spacing:1.078px;-webkit-text-stroke:0.2px #24292e;">ruler-query-frontend-745595dfdc-8rk7q</div>
<div class="t" style="left:510.30px;top:407.04px;font-size:12px;font-weight:400;color:#24292e;letter-spacing:1.118px;-webkit-text-stroke:0.2px #24292e;">ruler-query-frontend-745595dfdc-q7b7x</div>
<div class="t" style="left:792.80px;top:407.04px;font-size:12px;font-weight:400;color:#24292e;letter-spacing:0.418px;-webkit-text-stroke:0.2px #24292e;">limit</div>
<div class="t" style="left:848.60px;top:407.04px;font-size:12px;font-weight:400;color:#24292e;letter-spacing:0.761px;-webkit-text-stroke:0.2px #24292e;">request</div>
<div class="t" style="left:942.30px;top:184.15px;font-size:14px;font-weight:400;color:#24292e;letter-spacing:1.012px;-webkit-text-stroke:0.35px #24292e;">Memory (go heap inuse)</div>
<div class="t" style="left:956.08px;top:325.14px;font-size:12px;font-weight:400;color:#24292e;letter-spacing:0.000px;-webkit-text-stroke:0.2px #24292e;">0 B</div>
<div class="t" style="left:942.10px;top:267.54px;font-size:12px;font-weight:400;color:#24292e;letter-spacing:0.496px;-webkit-text-stroke:0.2px #24292e;">1 GiB</div>
<div class="t" style="left:1005.40px;top:339.84px;font-size:12px;font-weight:400;color:#24292e;letter-spacing:0.392px;-webkit-text-stroke:0.2px #24292e;">15:30</div>
<div class="t" style="left:1069.40px;top:339.84px;font-size:12px;font-weight:400;color:#24292e;letter-spacing:0.392px;-webkit-text-stroke:0.2px #24292e;">15:40</div>
<div class="t" style="left:1134.40px;top:339.84px;font-size:12px;font-weight:400;color:#24292e;letter-spacing:0.392px;-webkit-text-stroke:0.2px #24292e;">15:50</div>
<div class="t" style="left:1198.40px;top:339.84px;font-size:12px;font-weight:400;color:#24292e;letter-spacing:0.392px;-webkit-text-stroke:0.2px #24292e;">16:00</div>
<div class="t" style="left:1263.40px;top:339.84px;font-size:12px;font-weight:400;color:#24292e;letter-spacing:0.392px;-webkit-text-stroke:0.2px #24292e;">16:10</div>
<div class="t" style="left:1327.40px;top:339.84px;font-size:12px;font-weight:400;color:#24292e;letter-spacing:0.392px;-webkit-text-stroke:0.2px #24292e;">16:20</div>
<div class="t" style="left:968.30px;top:360.04px;font-size:12px;font-weight:400;color:#24292e;letter-spacing:1.079px;-webkit-text-stroke:0.2px #24292e;">ruler-query-frontend-745595dfdc-6hnpp</div>
<div class="t" style="left:968.30px;top:383.54px;font-size:12px;font-weight:400;color:#24292e;letter-spacing:1.078px;-webkit-text-stroke:0.2px #24292e;">ruler-query-frontend-745595dfdc-8rk7q</div>
<div class="t" style="left:968.30px;top:407.04px;font-size:12px;font-weight:400;color:#24292e;letter-spacing:1.118px;-webkit-text-stroke:0.2px #24292e;">ruler-query-frontend-745595dfdc-q7b7x</div>
<div class="t" style="left:25.30px;top:488.15px;font-size:14px;font-weight:400;color:#24292e;letter-spacing:0.219px;-webkit-text-stroke:0.35px #24292e;">CPU</div>
<div class="t" style="left:30.21px;top:653.64px;font-size:12px;font-weight:400;color:#24292e;letter-spacing:0.000px;-webkit-text-stroke:0.2px #24292e;">0</div>
<div class="t" style="left:30.21px;top:593.64px;font-size:12px;font-weight:400;color:#24292e;letter-spacing:0.000px;-webkit-text-stroke:0.2px #24292e;">1</div>
<div class="t" style="left:30.21px;top:533.34px;font-size:12px;font-weight:400;color:#24292e;letter-spacing:0.000px;-webkit-text-stroke:0.2px #24292e;">2</div>
<div class="t" style="left:69.40px;top:668.34px;font-size:12px;font-weight:400;color:#24292e;letter-spacing:0.392px;-webkit-text-stroke:0.2px #24292e;">15:30</div>
<div class="t" style="left:137.40px;top:668.34px;font-size:12px;font-weight:400;color:#24292e;letter-spacing:0.392px;-webkit-text-stroke:0.2px #24292e;">15:40</div>
<div class="t" style="left:205.40px;top:668.34px;font-size:12px;font-weight:400;color:#24292e;letter-spacing:0.392px;-webkit-text-stroke:0.2px #24292e;">15:50</div>
<div class="t" style="left:273.40px;top:668.34px;font-size:12px;font-weight:400;color:#24292e;letter-spacing:0.392px;-webkit-text-stroke:0.2px #24292e;">16:00</div>
<div class="t" style="left:341.40px;top:668.34px;font-size:12px;font-weight:400;color:#24292e;letter-spacing:0.392px;-webkit-text-stroke:0.2px #24292e;">16:10</div>
<div class="t" style="left:409.40px;top:668.34px;font-size:12px;font-weight:400;color:#24292e;letter-spacing:0.392px;-webkit-text-stroke:0.2px #24292e;">16:20</div>
<div class="t" style="left:51.30px;top:687.24px;font-size:12px;font-weight:400;color:#24292e;letter-spacing:1.033px;-webkit-text-stroke:0.2px #24292e;">ruler-query-scheduler-846b656bc-hzf52</div>
<div class="t" style="left:51.30px;top:710.64px;font-size:12px;font-weight:400;color:#24292e;letter-spacing:1.043px;-webkit-text-stroke:0.2px #24292e;">ruler-query-scheduler-846b656bc-k95kh</div>
<div class="t" style="left:335.10px;top:710.64px;font-size:12px;font-weight:400;color:#24292e;letter-spacing:0.761px;-webkit-text-stroke:0.2px #24292e;">request</div>
<div class="t" style="left:484.30px;top:488.15px;font-size:14px;font-weight:400;color:#24292e;letter-spacing:1.128px;-webkit-text-stroke:0.35px #24292e;">Memory (workingset)</div>
<div class="t" style="left:499.68px;top:653.14px;font-size:12px;font-weight:400;color:#24292e;letter-spacing:0.000px;-webkit-text-stroke:0.2px #24292e;">0 B</div>
<div class="t" style="left:485.70px;top:594.34px;font-size:12px;font-weight:400;color:#24292e;letter-spacing:0.496px;-webkit-text-stroke:0.2px #24292e;">1 GiB</div>
<div class="t" style="left:485.70px;top:535.34px;font-size:12px;font-weight:400;color:#24292e;letter-spacing:0.496px;-webkit-text-stroke:0.2px #24292e;">2 GiB</div>
<div class="t" style="left:548.40px;top:667.84px;font-size:12px;font-weight:400;color:#24292e;letter-spacing:0.392px;-webkit-text-stroke:0.2px #24292e;">15:30</div>
<div class="t" style="left:612.40px;top:667.84px;font-size:12px;font-weight:400;color:#24292e;letter-spacing:0.392px;-webkit-text-stroke:0.2px #24292e;">15:40</div>
<div class="t" style="left:677.40px;top:667.84px;font-size:12px;font-weight:400;color:#24292e;letter-spacing:0.392px;-webkit-text-stroke:0.2px #24292e;">15:50</div>
<div class="t" style="left:741.40px;top:667.84px;font-size:12px;font-weight:400;color:#24292e;letter-spacing:0.392px;-webkit-text-stroke:0.2px #24292e;">16:00</div>
<div class="t" style="left:805.40px;top:667.84px;font-size:12px;font-weight:400;color:#24292e;letter-spacing:0.392px;-webkit-text-stroke:0.2px #24292e;">16:10</div>
<div class="t" style="left:869.40px;top:667.84px;font-size:12px;font-weight:400;color:#24292e;letter-spacing:0.392px;-webkit-text-stroke:0.2px #24292e;">16:20</div>
<div class="t" style="left:510.30px;top:687.24px;font-size:12px;font-weight:400;color:#24292e;letter-spacing:1.033px;-webkit-text-stroke:0.2px #24292e;">ruler-query-scheduler-846b656bc-hzf52</div>
<div class="t" style="left:510.30px;top:710.64px;font-size:12px;font-weight:400;color:#24292e;letter-spacing:1.043px;-webkit-text-stroke:0.2px #24292e;">ruler-query-scheduler-846b656bc-k95kh</div>
<div class="t" style="left:794.10px;top:710.64px;font-size:12px;font-weight:400;color:#24292e;letter-spacing:0.418px;-webkit-text-stroke:0.2px #24292e;">limit</div>
<div class="t" style="left:849.90px;top:710.64px;font-size:12px;font-weight:400;color:#24292e;letter-spacing:0.761px;-webkit-text-stroke:0.2px #24292e;">request</div>
<div class="t" style="left:942.30px;top:488.15px;font-size:14px;font-weight:400;color:#24292e;letter-spacing:1.012px;-webkit-text-stroke:0.35px #24292e;">Memory (go heap inuse)</div>
<div class="t" style="left:968.68px;top:653.14px;font-size:12px;font-weight:400;color:#24292e;letter-spacing:0.000px;-webkit-text-stroke:0.2px #24292e;">0 B</div>
<div class="t" style="left:944.40px;top:612.54px;font-size:12px;font-weight:400;color:#24292e;letter-spacing:0.988px;-webkit-text-stroke:0.2px #24292e;">32 MiB</div>
<div class="t" style="left:944.40px;top:572.24px;font-size:12px;font-weight:400;color:#24292e;letter-spacing:0.988px;-webkit-text-stroke:0.2px #24292e;">64 MiB</div>
<div class="t" style="left:944.40px;top:531.24px;font-size:12px;font-weight:400;color:#24292e;letter-spacing:0.988px;-webkit-text-stroke:0.2px #24292e;">96 MiB</div>
<div class="t" style="left:1016.40px;top:667.84px;font-size:12px;font-weight:400;color:#24292e;letter-spacing:0.392px;-webkit-text-stroke:0.2px #24292e;">15:30</div>
<div class="t" style="left:1078.40px;top:667.84px;font-size:12px;font-weight:400;color:#24292e;letter-spacing:0.392px;-webkit-text-stroke:0.2px #24292e;">15:40</div>
<div class="t" style="left:1141.40px;top:667.84px;font-size:12px;font-weight:400;color:#24292e;letter-spacing:0.392px;-webkit-text-stroke:0.2px #24292e;">15:50</div>
<div class="t" style="left:1203.40px;top:667.84px;font-size:12px;font-weight:400;color:#24292e;letter-spacing:0.392px;-webkit-text-stroke:0.2px #24292e;">16:00</div>
<div class="t" style="left:1266.40px;top:667.84px;font-size:12px;font-weight:400;color:#24292e;letter-spacing:0.392px;-webkit-text-stroke:0.2px #24292e;">16:10</div>
<div class="t" style="left:1328.40px;top:667.84px;font-size:12px;font-weight:400;color:#24292e;letter-spacing:0.392px;-webkit-text-stroke:0.2px #24292e;">16:20</div>
<div class="t" style="left:968.30px;top:687.24px;font-size:12px;font-weight:400;color:#24292e;letter-spacing:1.033px;-webkit-text-stroke:0.2px #24292e;">ruler-query-scheduler-846b656bc-hzf52</div>
<div class="t" style="left:968.30px;top:710.64px;font-size:12px;font-weight:400;color:#24292e;letter-spacing:1.043px;-webkit-text-stroke:0.2px #24292e;">ruler-query-scheduler-846b656bc-k95kh</div>
<div class="t" style="left:25.30px;top:792.15px;font-size:14px;font-weight:400;color:#24292e;letter-spacing:0.219px;-webkit-text-stroke:0.35px #24292e;">CPU</div>
<div class="t" style="left:41.01px;top:931.14px;font-size:12px;font-weight:400;color:#24292e;letter-spacing:0.000px;-webkit-text-stroke:0.2px #24292e;">0</div>
<div class="t" style="left:31.01px;top:898.14px;font-size:12px;font-weight:400;color:#24292e;letter-spacing:0.000px;-webkit-text-stroke:0.2px #24292e;">0.5</div>
<div class="t" style="left:41.01px;top:865.14px;font-size:12px;font-weight:400;color:#24292e;letter-spacing:0.000px;-webkit-text-stroke:0.2px #24292e;">1</div>
<div class="t" style="left:31.01px;top:831.94px;font-size:12px;font-weight:400;color:#24292e;letter-spacing:0.000px;-webkit-text-stroke:0.2px #24292e;">1.5</div>
<div class="t" style="left:79.40px;top:945.84px;font-size:12px;font-weight:400;color:#24292e;letter-spacing:0.392px;-webkit-text-stroke:0.2px #24292e;">15:30</div>
<div class="t" style="left:145.40px;top:945.84px;font-size:12px;font-weight:400;color:#24292e;letter-spacing:0.392px;-webkit-text-stroke:0.2px #24292e;">15:40</div>
<div class="t" style="left:211.40px;top:945.84px;font-size:12px;font-weight:400;color:#24292e;letter-spacing:0.392px;-webkit-text-stroke:0.2px #24292e;">15:50</div>
<div class="t" style="left:278.40px;top:945.84px;font-size:12px;font-weight:400;color:#24292e;letter-spacing:0.392px;-webkit-text-stroke:0.2px #24292e;">16:00</div>
<div class="t" style="left:344.40px;top:945.84px;font-size:12px;font-weight:400;color:#24292e;letter-spacing:0.392px;-webkit-text-stroke:0.2px #24292e;">16:10</div>
<div class="t" style="left:410.40px;top:945.84px;font-size:12px;font-weight:400;color:#24292e;letter-spacing:0.392px;-webkit-text-stroke:0.2px #24292e;">16:20</div>
<div class="t" style="left:51.30px;top:964.64px;font-size:12px;font-weight:400;color:#24292e;letter-spacing:1.080px;-webkit-text-stroke:0.2px #24292e;">ruler-querier-b9b67fcf7-45pzl</div>
<div class="t" style="left:51.30px;top:988.34px;font-size:12px;font-weight:400;color:#24292e;letter-spacing:1.069px;-webkit-text-stroke:0.2px #24292e;">ruler-querier-b9b67fcf7-47m7k</div>
<div class="t" style="left:51.30px;top:1011.74px;font-size:12px;font-weight:400;color:#24292e;letter-spacing:1.093px;-webkit-text-stroke:0.2px #24292e;">ruler-querier-b9b67fcf7-5zc8r</div>
<div class="t" style="left:484.30px;top:792.15px;font-size:14px;font-weight:400;color:#24292e;letter-spacing:1.128px;-webkit-text-stroke:0.35px #24292e;">Memory (workingset)</div>
<div class="t" style="left:500.28px;top:931.14px;font-size:12px;font-weight:400;color:#24292e;letter-spacing:0.000px;-webkit-text-stroke:0.2px #24292e;">0 B</div>
<div class="t" style="left:486.30px;top:899.54px;font-size:12px;font-weight:400;color:#24292e;letter-spacing:0.496px;-webkit-text-stroke:0.2px #24292e;">2 GiB</div>
<div class="t" style="left:486.30px;top:867.14px;font-size:12px;font-weight:400;color:#24292e;letter-spacing:0.496px;-webkit-text-stroke:0.2px #24292e;">4 GiB</div>
<div class="t" style="left:486.30px;top:835.24px;font-size:12px;font-weight:400;color:#24292e;letter-spacing:0.496px;-webkit-text-stroke:0.2px #24292e;">6 GiB</div>
<div class="t" style="left:548.40px;top:945.84px;font-size:12px;font-weight:400;color:#24292e;letter-spacing:0.392px;-webkit-text-stroke:0.2px #24292e;">15:30</div>
<div class="t" style="left:613.40px;top:945.84px;font-size:12px;font-weight:400;color:#24292e;letter-spacing:0.392px;-webkit-text-stroke:0.2px #24292e;">15:40</div>
<div class="t" style="left:677.40px;top:945.84px;font-size:12px;font-weight:400;color:#24292e;letter-spacing:0.392px;-webkit-text-stroke:0.2px #24292e;">15:50</div>
<div class="t" style="left:741.40px;top:945.84px;font-size:12px;font-weight:400;color:#24292e;letter-spacing:0.392px;-webkit-text-stroke:0.2px #24292e;">16:00</div>
<div class="t" style="left:805.40px;top:945.84px;font-size:12px;font-weight:400;color:#24292e;letter-spacing:0.392px;-webkit-text-stroke:0.2px #24292e;">16:10</div>
<div class="t" style="left:869.40px;top:945.84px;font-size:12px;font-weight:400;color:#24292e;letter-spacing:0.392px;-webkit-text-stroke:0.2px #24292e;">16:20</div>
<div class="t" style="left:510.30px;top:964.64px;font-size:12px;font-weight:400;color:#24292e;letter-spacing:1.080px;-webkit-text-stroke:0.2px #24292e;">ruler-querier-b9b67fcf7-45pzl</div>
<div class="t" style="left:510.30px;top:988.34px;font-size:12px;font-weight:400;color:#24292e;letter-spacing:1.069px;-webkit-text-stroke:0.2px #24292e;">ruler-querier-b9b67fcf7-47m7k</div>
<div class="t" style="left:510.30px;top:1011.74px;font-size:12px;font-weight:400;color:#24292e;letter-spacing:1.093px;-webkit-text-stroke:0.2px #24292e;">ruler-querier-b9b67fcf7-5zc8r</div>
<div class="t" style="left:942.30px;top:792.15px;font-size:14px;font-weight:400;color:#24292e;letter-spacing:1.012px;-webkit-text-stroke:0.35px #24292e;">Memory (go heap inuse)</div>
<div class="t" style="left:958.08px;top:931.14px;font-size:12px;font-weight:400;color:#24292e;letter-spacing:0.000px;-webkit-text-stroke:0.2px #24292e;">0 B</div>
<div class="t" style="left:944.10px;top:890.64px;font-size:12px;font-weight:400;color:#24292e;letter-spacing:0.496px;-webkit-text-stroke:0.2px #24292e;">1 GiB</div>
<div class="t" style="left:944.10px;top:850.34px;font-size:12px;font-weight:400;color:#24292e;letter-spacing:0.496px;-webkit-text-stroke:0.2px #24292e;">2 GiB</div>
<div class="t" style="left:1006.40px;top:945.84px;font-size:12px;font-weight:400;color:#24292e;letter-spacing:0.392px;-webkit-text-stroke:0.2px #24292e;">15:30</div>
<div class="t" style="left:1071.40px;top:945.84px;font-size:12px;font-weight:400;color:#24292e;letter-spacing:0.392px;-webkit-text-stroke:0.2px #24292e;">15:40</div>
<div class="t" style="left:1135.40px;top:945.84px;font-size:12px;font-weight:400;color:#24292e;letter-spacing:0.392px;-webkit-text-stroke:0.2px #24292e;">15:50</div>
<div class="t" style="left:1199.40px;top:945.84px;font-size:12px;font-weight:400;color:#24292e;letter-spacing:0.392px;-webkit-text-stroke:0.2px #24292e;">16:00</div>
<div class="t" style="left:1263.40px;top:945.84px;font-size:12px;font-weight:400;color:#24292e;letter-spacing:0.392px;-webkit-text-stroke:0.2px #24292e;">16:10</div>
<div class="t" style="left:1327.40px;top:945.84px;font-size:12px;font-weight:400;color:#24292e;letter-spacing:0.392px;-webkit-text-stroke:0.2px #24292e;">16:20</div>
<div class="t" style="left:968.30px;top:964.64px;font-size:12px;font-weight:400;color:#24292e;letter-spacing:1.080px;-webkit-text-stroke:0.2px #24292e;">ruler-querier-b9b67fcf7-45pzl</div>
<div class="t" style="left:968.30px;top:988.34px;font-size:12px;font-weight:400;color:#24292e;letter-spacing:1.069px;-webkit-text-stroke:0.2px #24292e;">ruler-querier-b9b67fcf7-47m7k</div>
<div class="t" style="left:968.30px;top:1011.74px;font-size:12px;font-weight:400;color:#24292e;letter-spacing:1.093px;-webkit-text-stroke:0.2px #24292e;">ruler-querier-b9b67fcf7-5zc8r</div></div>
</body></html>
